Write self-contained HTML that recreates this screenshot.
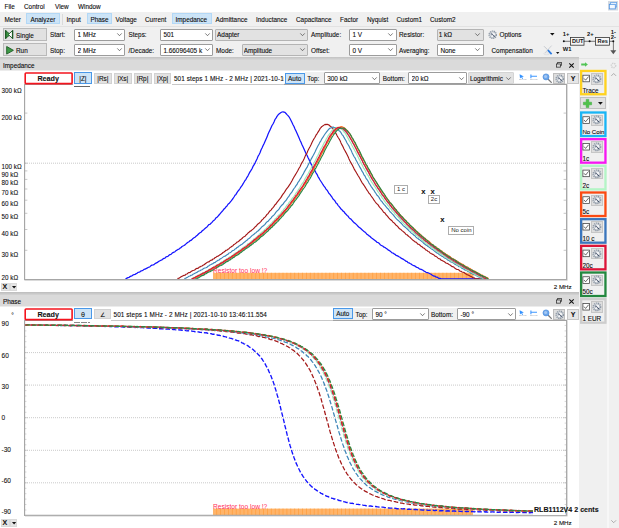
<!DOCTYPE html>
<html><head><meta charset="utf-8"><title>Impedance Analyzer</title>
<style>
html,body{margin:0;padding:0}
body{width:619px;height:528px;overflow:hidden;background:#fff;position:relative;
 font-family:"Liberation Sans",sans-serif;font-size:6.4px;color:#0c0c0c;-webkit-text-stroke-width:0.1px}
span{position:absolute;white-space:nowrap;line-height:10px;height:10px}
.b{position:absolute;box-sizing:border-box}
.combo{position:absolute;box-sizing:border-box;border:1px solid #8a8a8a;border-radius:1px;white-space:nowrap;overflow:hidden}
.combo i{font-style:normal;position:absolute;left:2.5px;top:0.3px;right:8.6px;overflow:hidden}
.combo .chev{position:absolute;right:2.2px;top:50%;margin-top:-1.4px}
.btn{position:absolute;box-sizing:border-box;background:#e1e1e1;border:1px solid #adadad}
.sel{position:absolute;box-sizing:border-box;background:#cce4f7;border:1px solid #b3d8f6}
svg{position:absolute;overflow:visible}
.lb{position:absolute;box-sizing:border-box;border:1px solid #adadad;-webkit-text-stroke-width:0;color:#222;background:#fff;font-size:6px;text-align:center;white-space:nowrap}
</style></head><body>

<span style="left:4.5px;top:1.60px;">File</span>
<span style="left:24px;top:1.60px;">Control</span>
<span style="left:55px;top:1.60px;">View</span>
<span style="left:78px;top:1.60px;">Window</span>
<svg style="left:607.5px;top:1px" width="10" height="9.5" viewBox="0 0 10 9.5"><rect x="0" y="0" width="10" height="9.5" fill="#d4dae2"/><rect x="2.6" y="1.4" width="6" height="4.6" fill="#f4f9ff" stroke="#6aa6e8" stroke-width="0.8"/><rect x="1.3" y="3.3" width="6" height="4.6" fill="#f4f9ff" stroke="#4a90e2" stroke-width="0.8"/></svg>
<div class="b" style="left:0px;top:12.2px;width:619.00px;height:45.20px;background:#f0f0f0"></div>
<div class="b" style="left:0px;top:25.6px;width:619.00px;height:0.60px;background:#e2e2e2"></div>
<div class="sel" style="left:25.8px;top:13.1px;width:34px;height:10.9px"></div>
<div class="sel" style="left:87.2px;top:13.1px;width:24.4px;height:10.9px"></div>
<div class="sel" style="left:172.2px;top:13.1px;width:39.4px;height:10.9px"></div>
<div class="b" style="left:62.3px;top:13.5px;width:0.70px;height:11.00px;background:#dadada"></div>
<span style="left:4.5px;top:14.60px;">Meter</span>
<span style="left:30.5px;top:14.60px;">Analyzer</span>
<span style="left:66.5px;top:14.60px;">Input</span>
<span style="left:90.5px;top:14.60px;">Phase</span>
<span style="left:115.5px;top:14.60px;">Voltage</span>
<span style="left:145px;top:14.60px;">Current</span>
<span style="left:175.5px;top:14.60px;">Impedance</span>
<span style="left:215.5px;top:14.60px;">Admittance</span>
<span style="left:256px;top:14.60px;">Inductance</span>
<span style="left:296px;top:14.60px;">Capacitance</span>
<span style="left:340px;top:14.60px;">Factor</span>
<span style="left:367px;top:14.60px;">Nyquist</span>
<span style="left:396.5px;top:14.60px;">Custom1</span>
<span style="left:430px;top:14.60px;">Custom2</span>
<div class="btn" style="left:2.5px;top:27.9px;width:44.6px;height:13.3px;border-color:#b9b9b9"></div>
<div class="btn" style="left:2.5px;top:43.2px;width:44.6px;height:13.3px;border-color:#b9b9b9"></div>
<svg style="left:5.4px;top:30.2px" width="8.3" height="9" viewBox="0 0 8 8.6"><path d="M0.6 0.6 L5.2 4.3 L0.6 8 Z" fill="#3d9a46" stroke="#1d5a25" stroke-width="0.9"/><path d="M7.2 0.6 L3.2 4.3 L7.2 8 Z" fill="#fff" stroke="#1d5a25" stroke-width="0.9"/><rect x="0" y="0.2" width="1.3" height="8.2" fill="#1d5a25"/><rect x="6.7" y="0.2" width="1.3" height="8.2" fill="#1d5a25"/></svg>
<svg style="left:5.5px;top:45.5px" width="8" height="8.6" viewBox="0 0 8 8.6"><path d="M0.7 0.5 L7.4 4.3 L0.7 8.1 Z" fill="#3d9a46" stroke="#1d5a25" stroke-width="0.9"/></svg>
<span style="left:16px;top:30.90px;">Single</span>
<span style="left:16px;top:45.70px;">Run</span>
<span style="left:50px;top:30.10px;">Start:</span>
<span style="left:50px;top:45.70px;">Stop:</span>
<div class="combo" style="left:74.2px;top:28.5px;width:51.10px;height:12.10px;background:#fff;border-color:#9c9c9c;line-height:10.10px"><i style="left:2.4px;top:0.5px">1 MHz</i><svg class="chev" width="5" height="3.2" viewBox="0 0 5 3.2"><path d="M0.3 0.4 L2.5 2.7 L4.7 0.4" fill="none" stroke="#444" stroke-width="0.7"/></svg></div>
<div class="combo" style="left:74.2px;top:43.6px;width:51.10px;height:12.20px;background:#fff;border-color:#9c9c9c;line-height:10.20px"><i style="left:2.4px;top:1px">2 MHz</i><svg class="chev" width="5" height="3.2" viewBox="0 0 5 3.2"><path d="M0.3 0.4 L2.5 2.7 L4.7 0.4" fill="none" stroke="#444" stroke-width="0.7"/></svg></div>
<span style="left:128.5px;top:30.10px;">Steps:</span>
<span style="left:128.5px;top:45.70px;">/Decade:</span>
<div class="combo" style="left:160px;top:28.5px;width:53.30px;height:12.10px;background:#fff;border-color:#9c9c9c;line-height:10.10px"><i style="left:2.4px;top:0.5px">501</i><svg class="chev" width="5" height="3.2" viewBox="0 0 5 3.2"><path d="M0.3 0.4 L2.5 2.7 L4.7 0.4" fill="none" stroke="#444" stroke-width="0.7"/></svg></div>
<div class="combo" style="left:160px;top:43.6px;width:53.30px;height:12.20px;background:#fff;border-color:#9c9c9c;line-height:10.20px"><i style="left:2.4px;top:1px">1.66096405 k</i><svg class="chev" width="5" height="3.2" viewBox="0 0 5 3.2"><path d="M0.3 0.4 L2.5 2.7 L4.7 0.4" fill="none" stroke="#444" stroke-width="0.7"/></svg></div>
<div class="combo" style="left:215.4px;top:28.5px;width:92.80px;height:12.10px;background:#e2e2e2;border-color:#b4b4b4;line-height:10.10px"><i style="left:0.7px;top:0.5px">Adapter</i><svg class="chev" width="5" height="3.2" viewBox="0 0 5 3.2"><path d="M0.3 0.4 L2.5 2.7 L4.7 0.4" fill="none" stroke="#444" stroke-width="0.7"/></svg></div>
<span style="left:216px;top:45.70px;">Mode:</span>
<div class="combo" style="left:242px;top:43.6px;width:66.20px;height:12.20px;background:#e2e2e2;border-color:#b4b4b4;line-height:10.20px"><i style="left:0.7px;top:1px">Amplitude</i><svg class="chev" width="5" height="3.2" viewBox="0 0 5 3.2"><path d="M0.3 0.4 L2.5 2.7 L4.7 0.4" fill="none" stroke="#444" stroke-width="0.7"/></svg></div>
<span style="left:311px;top:30.10px;">Amplitude:</span>
<span style="left:311px;top:45.70px;">Offset:</span>
<div class="combo" style="left:349px;top:28.5px;width:47.60px;height:12.10px;background:#fff;border-color:#9c9c9c;line-height:10.10px"><i style="left:2.4px;top:0.5px">1 V</i><svg class="chev" width="5" height="3.2" viewBox="0 0 5 3.2"><path d="M0.3 0.4 L2.5 2.7 L4.7 0.4" fill="none" stroke="#444" stroke-width="0.7"/></svg></div>
<div class="combo" style="left:349px;top:43.6px;width:47.60px;height:12.20px;background:#fff;border-color:#9c9c9c;line-height:10.20px"><i style="left:2.4px;top:1px">0 V</i><svg class="chev" width="5" height="3.2" viewBox="0 0 5 3.2"><path d="M0.3 0.4 L2.5 2.7 L4.7 0.4" fill="none" stroke="#444" stroke-width="0.7"/></svg></div>
<span style="left:399px;top:30.10px;">Resistor:</span>
<span style="left:399px;top:45.70px;">Averaging:</span>
<div class="combo" style="left:437px;top:28.5px;width:46.60px;height:12.10px;background:#e2e2e2;border-color:#b4b4b4;line-height:10.10px"><i style="left:0.7px;top:0.5px">1 k&#937;</i><svg class="chev" width="5" height="3.2" viewBox="0 0 5 3.2"><path d="M0.3 0.4 L2.5 2.7 L4.7 0.4" fill="none" stroke="#444" stroke-width="0.7"/></svg></div>
<div class="combo" style="left:437px;top:43.6px;width:46.60px;height:12.20px;background:#fff;border-color:#9c9c9c;line-height:10.20px"><i style="left:2.4px;top:1px">None</i><svg class="chev" width="5" height="3.2" viewBox="0 0 5 3.2"><path d="M0.3 0.4 L2.5 2.7 L4.7 0.4" fill="none" stroke="#444" stroke-width="0.7"/></svg></div>
<svg width="9.5" height="9.5" viewBox="0 0 10 10" style="position:absolute;left:488px;top:30px"><circle cx="5" cy="5" r="3.9" fill="#f1f3f5" stroke="#8a95a2" stroke-width="1.2" stroke-dasharray="1.4 0.7"/><circle cx="5" cy="5" r="3.1" fill="#f5f6f8" stroke="#98a2ad" stroke-width="0.8"/><path d="M3.9 3.6 L6.2 6.4 M3.9 5.6 A1.6 1.6 0 0 1 3.8 3.7" stroke="#44526a" stroke-width="0.9" fill="none"/><circle cx="6.5" cy="6.6" r="0.8" fill="#44526a"/></svg>
<span style="left:499.5px;top:30.10px;">Options</span>
<svg style="left:549.5px;top:33.4px" width="4.6" height="2.6" viewBox="0 0 4.6 2.6"><path d="M0 0 L4.6 0 L2.3 2.6Z" fill="#111"/></svg>
<span style="left:491.5px;top:45.70px;">Compensation</span>
<svg style="left:542.5px;top:44.5px" width="10" height="10" viewBox="0 0 10 10"><path d="M1 1.2 L5.4 5.6" stroke="#c4c8ce" stroke-width="1"/><path d="M8.6 0.6 L2 8" stroke="#cdd0d5" stroke-width="1"/><ellipse cx="3.6" cy="8.8" rx="3" ry="1" fill="none" stroke="#d8dade" stroke-width="0.7"/><path d="M4.9 5.2 L8.6 9.2" stroke="#2c7be0" stroke-width="1.7"/></svg>
<svg style="left:555.8px;top:52px" width="3.4" height="2" viewBox="0 0 3.4 2"><path d="M0 0 L3.4 0 L1.7 2Z" fill="#111"/></svg>
<svg style="left:560px;top:28px" width="59" height="28" viewBox="0 0 59 28" font-family="Liberation Sans, sans-serif" font-weight="bold" font-size="5.8" fill="#111"><text x="2.8" y="8.3">1+</text><text x="27" y="8.3">2+</text><text x="50.8" y="5.9">1-</text><text x="50.8" y="11">2-</text><text x="2.8" y="23">W1</text><path d="M3.5 13.3 H10.5 M24 13.3 H35.5 M49 13.3 H53.4 V23" stroke="#555" stroke-width="0.8" fill="none"/><circle cx="3.8" cy="13.3" r="1"/><circle cx="29.6" cy="13.3" r="1"/><circle cx="53.3" cy="13.3" r="1"/><rect x="10.4" y="9.4" width="13.6" height="7.8" fill="#f6f6f6" stroke="#333" stroke-width="0.8"/><rect x="35.4" y="9.4" width="14" height="7.8" fill="#f6f6f6" stroke="#333" stroke-width="0.8"/><text x="12" y="15.4" font-size="5.6">DUT</text><text x="37.6" y="15.4" font-size="5.6">Res</text><path d="M50.3 22.3 L56.3 22.3 L53.3 26.2Z" fill="#555"/></svg>
<div class="b" style="left:0px;top:57.3px;width:619.00px;height:2.70px;background:linear-gradient(#c2c2c2,#d8d8d8)"></div>
<div class="b" style="left:0px;top:59.5px;width:578.60px;height:10.70px;background:#dadada"></div>
<div class="b" style="left:578.6px;top:57px;width:40.40px;height:14.00px;background:#f0f0f0"></div>
<div class="b" style="left:579px;top:70px;width:40.00px;height:458.00px;background:#f0f0f0"></div>
<div class="b" style="left:578.6px;top:57.6px;width:40.40px;height:1.60px;background:#e4e4e4"></div>
<div class="b" style="left:0px;top:70.2px;width:578.60px;height:0.80px;background:#ececec"></div>
<span style="left:3px;top:60.90px;">Impedance</span>
<div class="b" style="left:0px;top:291.7px;width:578.60px;height:3.30px;background:linear-gradient(#bcbcbc,#d4d4d4)"></div>
<div class="b" style="left:0px;top:294.9px;width:578.60px;height:11.40px;background:#dadada"></div>
<div class="b" style="left:0px;top:306.2px;width:578.60px;height:0.80px;background:#ececec"></div>
<span style="left:3px;top:296.90px;">Phase</span>
<svg style="left:555.8px;top:62.1px" width="6.2" height="5.7" viewBox="0 0 7 6.4"><rect x="1.9" y="0.4" width="4.4" height="3.6" fill="none" stroke="#222" stroke-width="0.8"/><rect x="0.5" y="2.2" width="4.4" height="3.6" fill="#d9d9d9" stroke="#222" stroke-width="0.8"/></svg>
<svg style="left:568.8px;top:63.2px" width="5" height="5" viewBox="0 0 5.2 5.2"><path d="M0.3 0.3 L4.9 4.9 M4.9 0.3 L0.3 4.9" stroke="#111" stroke-width="1.1"/></svg>
<svg style="left:555.8px;top:298.1px" width="6.2" height="5.7" viewBox="0 0 7 6.4"><rect x="1.9" y="0.4" width="4.4" height="3.6" fill="none" stroke="#222" stroke-width="0.8"/><rect x="0.5" y="2.2" width="4.4" height="3.6" fill="#d9d9d9" stroke="#222" stroke-width="0.8"/></svg>
<svg style="left:568.8px;top:299.20000000000005px" width="5" height="5" viewBox="0 0 5.2 5.2"><path d="M0.3 0.3 L4.9 4.9 M4.9 0.3 L0.3 4.9" stroke="#111" stroke-width="1.1"/></svg>
<svg style="left:0;top:0" width="619" height="528" viewBox="0 0 619 528"><clipPath id="c1"><rect x="25.0" y="83.8" width="541.0" height="195.8"/></clipPath><clipPath id="c2"><rect x="25.0" y="320.0" width="541.0" height="195.99999999999997"/></clipPath><path d="M25.0 163.2 H566.0" stroke="#bdbdbd" stroke-width="0.8" stroke-dasharray="1 1"/><path d="M25.0 113.1 h2.4 M566.0 113.1 h-2.4M25.0 163.2 h2.4 M566.0 163.2 h-2.4M25.0 170.9 h2.4 M566.0 170.9 h-2.4M25.0 179.4 h2.4 M566.0 179.4 h-2.4M25.0 189.0 h2.4 M566.0 189.0 h-2.4M25.0 200.2 h2.4 M566.0 200.2 h-2.4M25.0 213.3 h2.4 M566.0 213.3 h-2.4M25.0 229.5 h2.4 M566.0 229.5 h-2.4M25.0 250.3 h2.4 M566.0 250.3 h-2.4" stroke="#b0b0b0" stroke-width="0.7"/><rect x="213" y="272.8" width="260.6" height="6.599999999999966" fill="#ffb469"/><rect x="216.3" y="272.8" width="0.8" height="6.599999999999966" fill="#ffa042"/><rect x="220.2" y="272.8" width="0.8" height="6.599999999999966" fill="#ffa042"/><rect x="224.1" y="272.8" width="0.8" height="6.599999999999966" fill="#ffa042"/><rect x="228.0" y="272.8" width="0.8" height="6.599999999999966" fill="#ffa042"/><rect x="231.9" y="272.8" width="0.8" height="6.599999999999966" fill="#ffa042"/><rect x="235.8" y="272.8" width="0.8" height="6.599999999999966" fill="#ffa042"/><rect x="239.7" y="272.8" width="0.8" height="6.599999999999966" fill="#ffa042"/><rect x="243.6" y="272.8" width="0.8" height="6.599999999999966" fill="#ffa042"/><rect x="247.5" y="272.8" width="0.8" height="6.599999999999966" fill="#ffa042"/><rect x="251.4" y="272.8" width="0.8" height="6.599999999999966" fill="#ffa042"/><rect x="255.3" y="272.8" width="0.8" height="6.599999999999966" fill="#ffa042"/><rect x="259.2" y="272.8" width="0.8" height="6.599999999999966" fill="#ffa042"/><rect x="263.1" y="272.8" width="0.8" height="6.599999999999966" fill="#ffa042"/><rect x="267.0" y="272.8" width="0.8" height="6.599999999999966" fill="#ffa042"/><rect x="270.9" y="272.8" width="0.8" height="6.599999999999966" fill="#ffa042"/><rect x="274.8" y="272.8" width="0.8" height="6.599999999999966" fill="#ffa042"/><rect x="278.7" y="272.8" width="0.8" height="6.599999999999966" fill="#ffa042"/><rect x="282.6" y="272.8" width="0.8" height="6.599999999999966" fill="#ffa042"/><rect x="286.5" y="272.8" width="0.8" height="6.599999999999966" fill="#ffa042"/><rect x="290.4" y="272.8" width="0.8" height="6.599999999999966" fill="#ffa042"/><rect x="294.3" y="272.8" width="0.8" height="6.599999999999966" fill="#ffa042"/><rect x="298.2" y="272.8" width="0.8" height="6.599999999999966" fill="#ffa042"/><rect x="302.1" y="272.8" width="0.8" height="6.599999999999966" fill="#ffa042"/><rect x="306.0" y="272.8" width="0.8" height="6.599999999999966" fill="#ffa042"/><rect x="309.9" y="272.8" width="0.8" height="6.599999999999966" fill="#ffa042"/><rect x="313.8" y="272.8" width="0.8" height="6.599999999999966" fill="#ffa042"/><rect x="317.7" y="272.8" width="0.8" height="6.599999999999966" fill="#ffa042"/><rect x="321.6" y="272.8" width="0.8" height="6.599999999999966" fill="#ffa042"/><rect x="325.5" y="272.8" width="0.8" height="6.599999999999966" fill="#ffa042"/><rect x="329.4" y="272.8" width="0.8" height="6.599999999999966" fill="#ffa042"/><rect x="333.3" y="272.8" width="0.8" height="6.599999999999966" fill="#ffa042"/><rect x="337.2" y="272.8" width="0.8" height="6.599999999999966" fill="#ffa042"/><rect x="341.1" y="272.8" width="0.8" height="6.599999999999966" fill="#ffa042"/><rect x="345.0" y="272.8" width="0.8" height="6.599999999999966" fill="#ffa042"/><rect x="348.9" y="272.8" width="0.8" height="6.599999999999966" fill="#ffa042"/><rect x="352.8" y="272.8" width="0.8" height="6.599999999999966" fill="#ffa042"/><rect x="356.7" y="272.8" width="0.8" height="6.599999999999966" fill="#ffa042"/><rect x="360.6" y="272.8" width="0.8" height="6.599999999999966" fill="#ffa042"/><rect x="364.5" y="272.8" width="0.8" height="6.599999999999966" fill="#ffa042"/><rect x="368.4" y="272.8" width="0.8" height="6.599999999999966" fill="#ffa042"/><rect x="372.3" y="272.8" width="0.8" height="6.599999999999966" fill="#ffa042"/><rect x="376.2" y="272.8" width="0.8" height="6.599999999999966" fill="#ffa042"/><rect x="380.1" y="272.8" width="0.8" height="6.599999999999966" fill="#ffa042"/><rect x="384.0" y="272.8" width="0.8" height="6.599999999999966" fill="#ffa042"/><rect x="387.9" y="272.8" width="0.8" height="6.599999999999966" fill="#ffa042"/><rect x="391.8" y="272.8" width="0.8" height="6.599999999999966" fill="#ffa042"/><rect x="395.7" y="272.8" width="0.8" height="6.599999999999966" fill="#ffa042"/><rect x="399.6" y="272.8" width="0.8" height="6.599999999999966" fill="#ffa042"/><rect x="403.5" y="272.8" width="0.8" height="6.599999999999966" fill="#ffa042"/><rect x="407.4" y="272.8" width="0.8" height="6.599999999999966" fill="#ffa042"/><rect x="411.3" y="272.8" width="0.8" height="6.599999999999966" fill="#ffa042"/><rect x="415.2" y="272.8" width="0.8" height="6.599999999999966" fill="#ffa042"/><rect x="419.1" y="272.8" width="0.8" height="6.599999999999966" fill="#ffa042"/><rect x="423.0" y="272.8" width="0.8" height="6.599999999999966" fill="#ffa042"/><rect x="426.9" y="272.8" width="0.8" height="6.599999999999966" fill="#ffa042"/><rect x="430.8" y="272.8" width="0.8" height="6.599999999999966" fill="#ffa042"/><rect x="434.7" y="272.8" width="0.8" height="6.599999999999966" fill="#ffa042"/><rect x="438.6" y="272.8" width="0.8" height="6.599999999999966" fill="#ffa042"/><rect x="442.5" y="272.8" width="0.8" height="6.599999999999966" fill="#ffa042"/><rect x="446.4" y="272.8" width="0.8" height="6.599999999999966" fill="#ffa042"/><rect x="450.3" y="272.8" width="0.8" height="6.599999999999966" fill="#ffa042"/><rect x="454.2" y="272.8" width="0.8" height="6.599999999999966" fill="#ffa042"/><rect x="458.1" y="272.8" width="0.8" height="6.599999999999966" fill="#ffa042"/><rect x="462.0" y="272.8" width="0.8" height="6.599999999999966" fill="#ffa042"/><rect x="465.9" y="272.8" width="0.8" height="6.599999999999966" fill="#ffa042"/><rect x="469.8" y="272.8" width="0.8" height="6.599999999999966" fill="#ffa042"/><g clip-path="url(#c1)" fill="none" stroke-width="1.15" stroke-linejoin="round"><path d="M25.0 281.9L26.0 281.9L27.0 281.9L28.0 281.9L29.0 281.9L30.0 281.9L31.0 281.9L32.0 281.9L33.0 281.9L34.0 281.9L35.0 281.9L36.0 281.9L37.0 281.9L38.0 281.9L39.0 281.9L40.0 281.9L41.0 281.9L42.0 281.9L43.0 281.9L44.0 281.9L45.0 281.9L46.0 281.9L47.0 281.9L48.0 281.9L49.0 281.9L50.0 281.9L51.0 281.9L52.0 281.9L53.0 281.9L54.0 281.9L55.0 281.9L56.0 281.9L57.0 281.9L58.0 281.9L59.0 281.9L60.0 281.9L61.0 281.9L62.0 281.9L63.0 281.9L64.0 281.9L65.0 281.9L66.0 281.9L67.0 281.9L68.0 281.9L69.0 281.9L70.0 281.9L71.0 281.9L72.0 281.9L73.0 281.9L74.0 281.9L75.0 281.9L76.0 281.9L77.0 281.9L78.0 281.9L79.0 281.9L80.0 281.9L81.0 281.9L82.0 281.9L83.0 281.9L84.0 281.9L85.0 281.9L86.0 281.9L87.0 281.9L88.0 281.9L89.0 281.9L90.0 281.9L91.0 281.9L92.0 281.9L93.0 281.9L94.0 281.9L95.0 281.9L96.0 281.9L97.0 281.9L98.0 281.9L99.0 281.9L100.0 281.9L101.0 281.9L102.0 281.9L103.0 281.9L104.0 281.9L105.0 281.9L106.0 281.9L107.0 281.9L108.0 281.9L109.0 281.9L110.0 281.9L111.0 281.9L112.0 281.9L113.0 281.9L114.0 281.9L115.0 281.9L116.0 281.9L117.0 281.9L118.0 281.9L119.0 281.9L120.0 281.9L121.0 281.9L122.0 281.9L123.0 281.9L124.0 281.9L125.0 281.9L126.0 278.6L127.0 278.1L128.0 277.6L129.0 277.4L130.0 276.6L131.0 276.1L132.0 275.8L133.0 275.0L134.0 274.6L135.0 274.5L136.0 273.7L137.0 273.3L138.0 272.4L139.0 272.2L140.0 271.8L141.0 270.9L142.0 270.8L143.0 270.3L144.0 269.4L145.0 269.2L146.0 268.6L147.0 268.2L148.0 267.5L149.0 267.2L150.0 266.7L151.0 265.6L152.0 265.1L153.0 265.0L154.0 264.6L155.0 263.6L156.0 263.1L157.0 262.7L158.0 261.9L159.0 261.3L160.0 260.7L161.0 260.2L162.0 259.8L163.0 258.9L164.0 258.4L165.0 258.1L166.0 256.9L167.0 256.7L168.0 256.2L169.0 255.3L170.0 254.6L171.0 254.4L172.0 253.3L173.0 252.6L174.0 252.2L175.0 251.7L176.0 250.6L177.0 250.1L178.0 249.4L179.0 249.1L180.0 248.1L181.0 247.7L182.0 246.5L183.0 246.0L184.0 245.5L185.0 244.9L186.0 243.9L187.0 243.0L188.0 242.2L189.0 241.7L190.0 240.7L191.0 240.4L192.0 239.6L193.0 238.4L194.0 237.7L195.0 237.2L196.0 236.3L197.0 235.6L198.0 234.5L199.0 233.5L200.0 232.8L201.0 232.3L202.0 231.0L203.0 230.2L204.0 229.4L205.0 228.5L206.0 227.6L207.0 227.0L208.0 225.6L209.0 224.5L210.0 224.3L211.0 223.3L212.0 222.4L213.0 221.0L214.0 220.4L215.0 219.3L216.0 217.8L217.0 217.2L218.0 216.2L219.0 215.0L220.0 213.8L221.0 212.6L222.0 211.5L223.0 210.3L224.0 209.0L225.0 208.2L226.0 206.8L227.0 206.0L228.0 204.3L229.0 203.6L230.0 202.3L231.0 201.1L232.0 199.8L233.0 198.5L234.0 197.0L235.0 195.2L236.0 194.4L237.0 192.6L238.0 191.2L239.0 190.0L240.0 188.5L241.0 186.9L242.0 185.7L243.0 183.9L244.0 182.2L245.0 180.5L246.0 179.3L247.0 177.3L248.0 175.8L249.0 173.8L250.0 171.9L251.0 170.4L252.0 168.7L253.0 166.4L254.0 164.9L255.0 163.1L256.0 161.0L257.0 159.0L258.0 156.4L259.0 154.7L260.0 152.8L261.0 150.0L262.0 148.0L263.0 145.8L264.0 143.7L265.0 141.4L266.0 139.2L267.0 137.1L268.0 134.3L269.0 132.1L270.0 129.9L271.0 127.7L272.0 125.5L273.0 124.0L274.0 121.9L275.0 119.5L276.0 118.1L277.0 116.4L278.0 115.0L279.0 113.9L280.0 113.2L281.0 112.5L282.0 112.0L283.0 111.8L284.0 112.1L285.0 112.4L286.0 113.5L287.0 114.6L288.0 115.6L289.0 116.8L290.0 118.5L291.0 120.5L292.0 122.6L293.0 124.7L294.0 126.5L295.0 129.0L296.0 131.1L297.0 133.2L298.0 135.5L299.0 137.8L300.0 140.2L301.0 142.3L302.0 144.8L303.0 146.8L304.0 148.9L305.0 151.2L306.0 153.5L307.0 155.2L308.0 157.5L309.0 159.5L310.0 161.8L311.0 163.9L312.0 165.4L313.0 167.7L314.0 169.4L315.0 170.9L316.0 172.8L317.0 174.3L318.0 176.6L319.0 178.1L320.0 180.0L321.0 181.5L322.0 183.0L323.0 184.7L324.0 186.1L325.0 187.3L326.0 189.1L327.0 190.2L328.0 191.7L329.0 193.5L330.0 194.4L331.0 195.8L332.0 197.2L333.0 199.0L334.0 199.9L335.0 201.0L336.0 202.9L337.0 203.6L338.0 205.3L339.0 206.4L340.0 207.7L341.0 209.0L342.0 209.8L343.0 211.1L344.0 211.7L345.0 213.3L346.0 214.2L347.0 215.4L348.0 216.1L349.0 217.6L350.0 218.7L351.0 219.1L352.0 220.3L353.0 221.5L354.0 222.6L355.0 223.2L356.0 224.1L357.0 225.1L358.0 226.3L359.0 227.3L360.0 227.9L361.0 228.8L362.0 229.7L363.0 230.6L364.0 231.5L365.0 232.1L366.0 233.2L367.0 234.4L368.0 234.8L369.0 235.9L370.0 236.3L371.0 237.5L372.0 238.3L373.0 239.0L374.0 239.7L375.0 240.5L376.0 241.3L377.0 242.3L378.0 242.5L379.0 243.2L380.0 244.4L381.0 245.2L382.0 245.7L383.0 246.3L384.0 247.2L385.0 247.5L386.0 248.3L387.0 248.9L388.0 249.9L389.0 250.4L390.0 251.0L391.0 251.9L392.0 252.8L393.0 253.0L394.0 253.9L395.0 254.3L396.0 255.3L397.0 255.7L398.0 256.1L399.0 256.7L400.0 257.2L401.0 258.1L402.0 258.6L403.0 259.1L404.0 259.8L405.0 260.4L406.0 261.3L407.0 261.4L408.0 262.6L409.0 262.8L410.0 263.5L411.0 263.9L412.0 264.7L413.0 265.3L414.0 265.7L415.0 266.1L416.0 266.9L417.0 267.5L418.0 267.7L419.0 268.5L420.0 269.2L421.0 269.3L422.0 269.7L423.0 270.2L424.0 271.1L425.0 271.5L426.0 272.2L427.0 272.7L428.0 272.7L429.0 273.2L430.0 273.7L431.0 274.2L432.0 275.0L433.0 275.6L434.0 276.1L435.0 276.2L436.0 277.1L437.0 277.1L438.0 277.7L439.0 278.4L440.0 278.4L441.0 278.8L442.0 278.9L443.0 278.9L444.0 278.9L445.0 278.9L446.0 278.9L447.0 278.9L448.0 278.9L449.0 278.9L450.0 278.9L451.0 278.9L452.0 278.9L453.0 278.9L454.0 278.9L455.0 278.9L456.0 278.9L457.0 278.9L458.0 278.9L459.0 278.9L460.0 278.9L461.0 278.9L462.0 278.9L463.0 278.9L464.0 278.9L465.0 278.9L466.0 278.9L467.0 278.9L468.0 278.9L469.0 278.9L470.0 278.9L471.0 278.9L472.0 278.9L473.0 278.9L474.0 278.9L475.0 278.9L476.0 278.9L477.0 278.9L478.0 278.9L479.0 278.9L480.0 281.9L481.0 281.9L482.0 281.9L483.0 281.9L484.0 281.9L485.0 281.9L486.0 281.9L487.0 281.9L488.0 281.9L489.0 281.9L490.0 281.9L491.0 281.9L492.0 281.9L493.0 281.9L494.0 281.9L495.0 281.9L496.0 281.9L497.0 281.9L498.0 281.9L499.0 281.9L500.0 281.9L501.0 281.9L502.0 281.9L503.0 281.9L504.0 281.9L505.0 281.9L506.0 281.9L507.0 281.9L508.0 281.9L509.0 281.9L510.0 281.9L511.0 281.9L512.0 281.9L513.0 281.9L514.0 281.9L515.0 281.9L516.0 281.9L517.0 281.9L518.0 281.9L519.0 281.9L520.0 281.9L521.0 281.9L522.0 281.9L523.0 281.9L524.0 281.9L525.0 281.9L526.0 281.9L527.0 281.9L528.0 281.9L529.0 281.9L530.0 281.9L531.0 281.9L532.0 281.9L533.0 281.9L534.0 281.9L535.0 281.9L536.0 281.9L537.0 281.9L538.0 281.9L539.0 281.9L540.0 281.9L541.0 281.9L542.0 281.9L543.0 281.9L544.0 281.9L545.0 281.9L546.0 281.9L547.0 281.9L548.0 281.9L549.0 281.9L550.0 281.9L551.0 281.9L552.0 281.9L553.0 281.9L554.0 281.9L555.0 281.9L556.0 281.9L557.0 281.9L558.0 281.9L559.0 281.9L560.0 281.9L561.0 281.9L562.0 281.9L563.0 281.9L564.0 281.9L565.0 281.9L566.0 281.9" stroke="#1414ff" stroke-width="1.25"/><path d="M25.0 281.9L26.0 281.9L27.0 281.9L28.0 281.9L29.0 281.9L30.0 281.9L31.0 281.9L32.0 281.9L33.0 281.9L34.0 281.9L35.0 281.9L36.0 281.9L37.0 281.9L38.0 281.9L39.0 281.9L40.0 281.9L41.0 281.9L42.0 281.9L43.0 281.9L44.0 281.9L45.0 281.9L46.0 281.9L47.0 281.9L48.0 281.9L49.0 281.9L50.0 281.9L51.0 281.9L52.0 281.9L53.0 281.9L54.0 281.9L55.0 281.9L56.0 281.9L57.0 281.9L58.0 281.9L59.0 281.9L60.0 281.9L61.0 281.9L62.0 281.9L63.0 281.9L64.0 281.9L65.0 281.9L66.0 281.9L67.0 281.9L68.0 281.9L69.0 281.9L70.0 281.9L71.0 281.9L72.0 281.9L73.0 281.9L74.0 281.9L75.0 281.9L76.0 281.9L77.0 281.9L78.0 281.9L79.0 281.9L80.0 281.9L81.0 281.9L82.0 281.9L83.0 281.9L84.0 281.9L85.0 281.9L86.0 281.9L87.0 281.9L88.0 281.9L89.0 281.9L90.0 281.9L91.0 281.9L92.0 281.9L93.0 281.9L94.0 281.9L95.0 281.9L96.0 281.9L97.0 281.9L98.0 281.9L99.0 281.9L100.0 281.9L101.0 281.9L102.0 281.9L103.0 281.9L104.0 281.9L105.0 281.9L106.0 281.9L107.0 281.9L108.0 281.9L109.0 281.9L110.0 281.9L111.0 281.9L112.0 281.9L113.0 281.9L114.0 281.9L115.0 281.9L116.0 281.9L117.0 281.9L118.0 281.9L119.0 281.9L120.0 281.9L121.0 281.9L122.0 281.9L123.0 281.9L124.0 281.9L125.0 281.9L126.0 281.9L127.0 281.9L128.0 281.9L129.0 281.9L130.0 281.9L131.0 281.9L132.0 281.9L133.0 281.9L134.0 281.9L135.0 281.9L136.0 281.9L137.0 281.9L138.0 281.9L139.0 281.9L140.0 281.9L141.0 281.9L142.0 281.9L143.0 281.9L144.0 281.9L145.0 281.9L146.0 281.9L147.0 281.9L148.0 281.9L149.0 281.9L150.0 281.9L151.0 281.9L152.0 281.9L153.0 281.9L154.0 281.9L155.0 281.9L156.0 281.9L157.0 281.9L158.0 281.9L159.0 281.9L160.0 281.9L161.0 281.9L162.0 281.9L163.0 281.9L164.0 281.9L165.0 281.9L166.0 281.9L167.0 281.9L168.0 281.9L169.0 281.9L170.0 281.9L171.0 281.9L172.0 281.9L173.0 281.9L174.0 281.9L175.0 281.9L176.0 281.9L177.0 281.9L178.0 278.4L179.0 278.2L180.0 277.6L181.0 276.8L182.0 276.4L183.0 275.7L184.0 275.4L185.0 275.3L186.0 274.2L187.0 274.0L188.0 273.1L189.0 272.6L190.0 272.5L191.0 271.6L192.0 271.0L193.0 270.5L194.0 270.3L195.0 269.7L196.0 268.8L197.0 268.4L198.0 268.4L199.0 267.3L200.0 266.9L201.0 266.3L202.0 266.0L203.0 265.3L204.0 264.8L205.0 264.0L206.0 263.2L207.0 262.6L208.0 261.9L209.0 261.9L210.0 260.8L211.0 260.1L212.0 260.1L213.0 259.0L214.0 258.8L215.0 257.6L216.0 257.2L217.0 256.4L218.0 256.2L219.0 255.4L220.0 254.8L221.0 254.2L222.0 253.6L223.0 252.5L224.0 252.0L225.0 251.2L226.0 250.3L227.0 250.1L228.0 249.2L229.0 248.7L230.0 247.5L231.0 247.0L232.0 246.2L233.0 245.7L234.0 244.4L235.0 243.9L236.0 243.2L237.0 242.1L238.0 241.7L239.0 241.0L240.0 240.0L241.0 239.3L242.0 238.5L243.0 237.4L244.0 236.7L245.0 236.3L246.0 235.0L247.0 234.2L248.0 233.0L249.0 232.2L250.0 231.3L251.0 230.9L252.0 229.9L253.0 229.1L254.0 228.2L255.0 227.0L256.0 226.3L257.0 225.0L258.0 223.9L259.0 223.3L260.0 222.3L261.0 221.3L262.0 219.9L263.0 219.1L264.0 217.8L265.0 217.1L266.0 215.9L267.0 214.4L268.0 213.7L269.0 212.1L270.0 210.8L271.0 210.1L272.0 208.6L273.0 207.6L274.0 206.4L275.0 204.8L276.0 204.0L277.0 202.4L278.0 201.2L279.0 199.8L280.0 198.7L281.0 197.4L282.0 195.6L283.0 194.1L284.0 192.8L285.0 191.4L286.0 189.7L287.0 188.3L288.0 187.2L289.0 185.6L290.0 184.2L291.0 182.5L292.0 180.8L293.0 178.8L294.0 177.0L295.0 175.4L296.0 173.7L297.0 172.0L298.0 170.2L299.0 168.2L300.0 166.7L301.0 164.4L302.0 162.6L303.0 161.0L304.0 159.0L305.0 156.6L306.0 154.6L307.0 153.0L308.0 150.4L309.0 148.5L310.0 146.8L311.0 144.8L312.0 142.5L313.0 140.5L314.0 138.7L315.0 137.2L316.0 135.2L317.0 133.8L318.0 132.1L319.0 130.7L320.0 128.7L321.0 127.5L322.0 126.4L323.0 125.8L324.0 125.1L325.0 124.4L326.0 124.6L327.0 124.2L328.0 124.6L329.0 125.0L330.0 126.1L331.0 126.7L332.0 127.6L333.0 128.7L334.0 130.3L335.0 131.9L336.0 133.6L337.0 135.5L338.0 137.2L339.0 138.7L340.0 140.5L341.0 142.9L342.0 144.9L343.0 146.7L344.0 149.0L345.0 150.8L346.0 152.6L347.0 154.6L348.0 156.5L349.0 158.9L350.0 161.0L351.0 162.9L352.0 164.6L353.0 166.6L354.0 168.6L355.0 170.4L356.0 172.0L357.0 173.7L358.0 175.5L359.0 177.0L360.0 178.7L361.0 180.7L362.0 182.6L363.0 183.9L364.0 185.3L365.0 186.9L366.0 188.5L367.0 190.2L368.0 191.5L369.0 193.3L370.0 194.1L371.0 195.7L372.0 197.2L373.0 198.5L374.0 200.1L375.0 201.5L376.0 202.8L377.0 203.9L378.0 204.7L379.0 206.4L380.0 207.6L381.0 208.7L382.0 209.8L383.0 211.3L384.0 212.6L385.0 213.1L386.0 214.7L387.0 215.6L388.0 216.8L389.0 218.1L390.0 219.2L391.0 220.0L392.0 220.8L393.0 222.3L394.0 222.8L395.0 223.9L396.0 225.2L397.0 225.8L398.0 226.8L399.0 228.2L400.0 229.1L401.0 229.6L402.0 230.6L403.0 231.4L404.0 232.2L405.0 233.2L406.0 234.5L407.0 234.8L408.0 235.7L409.0 236.6L410.0 237.3L411.0 238.4L412.0 239.4L413.0 240.3L414.0 240.9L415.0 241.9L416.0 242.1L417.0 243.1L418.0 244.3L419.0 244.4L420.0 245.3L421.0 246.2L422.0 246.8L423.0 247.7L424.0 248.1L425.0 249.0L426.0 250.2L427.0 250.3L428.0 251.5L429.0 251.7L430.0 253.0L431.0 253.4L432.0 254.1L433.0 254.4L434.0 255.0L435.0 256.2L436.0 256.4L437.0 257.1L438.0 258.1L439.0 258.8L440.0 258.9L441.0 260.1L442.0 260.4L443.0 260.9L444.0 261.4L445.0 262.2L446.0 263.2L447.0 263.3L448.0 263.8L449.0 264.4L450.0 264.9L451.0 265.7L452.0 266.6L453.0 266.6L454.0 267.3L455.0 268.3L456.0 268.9L457.0 269.5L458.0 269.5L459.0 270.1L460.0 271.1L461.0 271.3L462.0 272.0L463.0 272.2L464.0 272.5L465.0 273.3L466.0 274.1L467.0 274.6L468.0 275.0L469.0 275.4L470.0 276.0L471.0 276.4L472.0 277.0L473.0 277.7L474.0 277.7L475.0 278.5L476.0 278.9L477.0 278.9L478.0 278.9L479.0 278.9L480.0 278.9L481.0 278.9L482.0 278.9L483.0 278.9L484.0 278.9L485.0 278.9L486.0 278.9L487.0 281.9L488.0 281.9L489.0 281.9L490.0 281.9L491.0 281.9L492.0 281.9L493.0 281.9L494.0 281.9L495.0 281.9L496.0 281.9L497.0 281.9L498.0 281.9L499.0 281.9L500.0 281.9L501.0 281.9L502.0 281.9L503.0 281.9L504.0 281.9L505.0 281.9L506.0 281.9L507.0 281.9L508.0 281.9L509.0 281.9L510.0 281.9L511.0 281.9L512.0 281.9L513.0 281.9L514.0 281.9L515.0 281.9L516.0 281.9L517.0 281.9L518.0 281.9L519.0 281.9L520.0 281.9L521.0 281.9L522.0 281.9L523.0 281.9L524.0 281.9L525.0 281.9L526.0 281.9L527.0 281.9L528.0 281.9L529.0 281.9L530.0 281.9L531.0 281.9L532.0 281.9L533.0 281.9L534.0 281.9L535.0 281.9L536.0 281.9L537.0 281.9L538.0 281.9L539.0 281.9L540.0 281.9L541.0 281.9L542.0 281.9L543.0 281.9L544.0 281.9L545.0 281.9L546.0 281.9L547.0 281.9L548.0 281.9L549.0 281.9L550.0 281.9L551.0 281.9L552.0 281.9L553.0 281.9L554.0 281.9L555.0 281.9L556.0 281.9L557.0 281.9L558.0 281.9L559.0 281.9L560.0 281.9L561.0 281.9L562.0 281.9L563.0 281.9L564.0 281.9L565.0 281.9L566.0 281.9" stroke="#a31818"/><path d="M25.0 281.9L26.0 281.9L27.0 281.9L28.0 281.9L29.0 281.9L30.0 281.9L31.0 281.9L32.0 281.9L33.0 281.9L34.0 281.9L35.0 281.9L36.0 281.9L37.0 281.9L38.0 281.9L39.0 281.9L40.0 281.9L41.0 281.9L42.0 281.9L43.0 281.9L44.0 281.9L45.0 281.9L46.0 281.9L47.0 281.9L48.0 281.9L49.0 281.9L50.0 281.9L51.0 281.9L52.0 281.9L53.0 281.9L54.0 281.9L55.0 281.9L56.0 281.9L57.0 281.9L58.0 281.9L59.0 281.9L60.0 281.9L61.0 281.9L62.0 281.9L63.0 281.9L64.0 281.9L65.0 281.9L66.0 281.9L67.0 281.9L68.0 281.9L69.0 281.9L70.0 281.9L71.0 281.9L72.0 281.9L73.0 281.9L74.0 281.9L75.0 281.9L76.0 281.9L77.0 281.9L78.0 281.9L79.0 281.9L80.0 281.9L81.0 281.9L82.0 281.9L83.0 281.9L84.0 281.9L85.0 281.9L86.0 281.9L87.0 281.9L88.0 281.9L89.0 281.9L90.0 281.9L91.0 281.9L92.0 281.9L93.0 281.9L94.0 281.9L95.0 281.9L96.0 281.9L97.0 281.9L98.0 281.9L99.0 281.9L100.0 281.9L101.0 281.9L102.0 281.9L103.0 281.9L104.0 281.9L105.0 281.9L106.0 281.9L107.0 281.9L108.0 281.9L109.0 281.9L110.0 281.9L111.0 281.9L112.0 281.9L113.0 281.9L114.0 281.9L115.0 281.9L116.0 281.9L117.0 281.9L118.0 281.9L119.0 281.9L120.0 281.9L121.0 281.9L122.0 281.9L123.0 281.9L124.0 281.9L125.0 281.9L126.0 281.9L127.0 281.9L128.0 281.9L129.0 281.9L130.0 281.9L131.0 281.9L132.0 281.9L133.0 281.9L134.0 281.9L135.0 281.9L136.0 281.9L137.0 281.9L138.0 281.9L139.0 281.9L140.0 281.9L141.0 281.9L142.0 281.9L143.0 281.9L144.0 281.9L145.0 281.9L146.0 281.9L147.0 281.9L148.0 281.9L149.0 281.9L150.0 281.9L151.0 281.9L152.0 281.9L153.0 281.9L154.0 281.9L155.0 281.9L156.0 281.9L157.0 281.9L158.0 281.9L159.0 281.9L160.0 281.9L161.0 281.9L162.0 281.9L163.0 281.9L164.0 281.9L165.0 281.9L166.0 281.9L167.0 281.9L168.0 281.9L169.0 281.9L170.0 281.9L171.0 281.9L172.0 281.9L173.0 281.9L174.0 281.9L175.0 281.9L176.0 281.9L177.0 281.9L178.0 281.9L179.0 281.9L180.0 281.9L181.0 281.9L182.0 281.9L183.0 281.9L184.0 281.9L185.0 278.2L186.0 278.1L187.0 277.5L188.0 276.9L189.0 276.2L190.0 276.0L191.0 275.3L192.0 275.1L193.0 274.2L194.0 273.8L195.0 273.2L196.0 272.8L197.0 272.4L198.0 271.5L199.0 271.0L200.0 270.7L201.0 270.0L202.0 269.7L203.0 268.9L204.0 268.3L205.0 268.0L206.0 267.8L207.0 267.2L208.0 266.3L209.0 265.7L210.0 264.9L211.0 264.5L212.0 263.9L213.0 263.7L214.0 262.6L215.0 262.6L216.0 261.6L217.0 261.0L218.0 260.3L219.0 260.1L220.0 259.0L221.0 258.6L222.0 257.9L223.0 257.1L224.0 256.4L225.0 256.3L226.0 255.5L227.0 254.8L228.0 254.3L229.0 253.0L230.0 252.8L231.0 252.1L232.0 251.1L233.0 250.5L234.0 250.2L235.0 249.0L236.0 248.6L237.0 247.5L238.0 247.1L239.0 246.1L240.0 245.5L241.0 244.7L242.0 244.3L243.0 243.4L244.0 242.5L245.0 241.8L246.0 240.8L247.0 240.3L248.0 239.1L249.0 238.5L250.0 237.7L251.0 236.7L252.0 235.6L253.0 234.9L254.0 234.3L255.0 233.2L256.0 232.7L257.0 231.6L258.0 231.0L259.0 230.0L260.0 229.0L261.0 227.8L262.0 226.7L263.0 226.1L264.0 225.2L265.0 224.4L266.0 222.9L267.0 221.8L268.0 221.4L269.0 220.2L270.0 219.0L271.0 218.1L272.0 216.6L273.0 215.8L274.0 214.8L275.0 213.6L276.0 212.2L277.0 211.0L278.0 210.2L279.0 209.2L280.0 207.4L281.0 206.1L282.0 205.0L283.0 204.2L284.0 202.6L285.0 201.4L286.0 200.5L287.0 198.9L288.0 197.3L289.0 196.2L290.0 194.3L291.0 193.1L292.0 191.9L293.0 190.1L294.0 188.5L295.0 187.3L296.0 185.6L297.0 184.5L298.0 182.3L299.0 181.2L300.0 179.3L301.0 177.9L302.0 176.0L303.0 174.4L304.0 172.4L305.0 170.6L306.0 168.9L307.0 167.4L308.0 165.2L309.0 163.2L310.0 161.5L311.0 159.4L312.0 157.6L313.0 155.8L314.0 153.9L315.0 152.0L316.0 149.8L317.0 147.7L318.0 145.8L319.0 144.1L320.0 142.1L321.0 140.6L322.0 138.6L323.0 137.2L324.0 135.5L325.0 134.0L326.0 132.7L327.0 131.3L328.0 130.1L329.0 129.0L330.0 128.1L331.0 128.0L332.0 127.4L333.0 126.9L334.0 127.5L335.0 127.5L336.0 128.0L337.0 128.5L338.0 129.1L339.0 130.7L340.0 131.3L341.0 132.7L342.0 134.6L343.0 135.5L344.0 137.4L345.0 139.1L346.0 140.7L347.0 143.0L348.0 144.5L349.0 146.1L350.0 148.4L351.0 150.0L352.0 152.4L353.0 154.5L354.0 156.5L355.0 157.8L356.0 160.1L357.0 161.8L358.0 163.8L359.0 165.5L360.0 167.4L361.0 169.1L362.0 171.2L363.0 172.6L364.0 174.9L365.0 176.0L366.0 178.4L367.0 179.5L368.0 181.0L369.0 183.1L370.0 184.5L371.0 186.3L372.0 187.6L373.0 189.2L374.0 190.3L375.0 192.2L376.0 193.5L377.0 195.2L378.0 196.0L379.0 197.4L380.0 199.2L381.0 200.7L382.0 201.6L383.0 203.1L384.0 204.3L385.0 205.4L386.0 206.7L387.0 208.0L388.0 208.8L389.0 210.2L390.0 211.7L391.0 212.5L392.0 213.7L393.0 214.7L394.0 215.9L395.0 217.2L396.0 218.3L397.0 219.5L398.0 220.2L399.0 221.1L400.0 222.2L401.0 223.0L402.0 224.1L403.0 225.3L404.0 226.3L405.0 227.0L406.0 227.9L407.0 228.8L408.0 229.7L409.0 230.9L410.0 231.6L411.0 232.9L412.0 233.6L413.0 234.3L414.0 235.2L415.0 235.8L416.0 237.1L417.0 238.0L418.0 238.5L419.0 239.6L420.0 240.1L421.0 240.8L422.0 241.6L423.0 242.4L424.0 243.5L425.0 244.3L426.0 245.1L427.0 245.4L428.0 246.6L429.0 247.1L430.0 247.8L431.0 248.6L432.0 249.3L433.0 249.8L434.0 250.6L435.0 251.5L436.0 252.3L437.0 253.1L438.0 253.3L439.0 254.4L440.0 255.0L441.0 255.6L442.0 256.4L443.0 256.5L444.0 257.6L445.0 258.3L446.0 258.4L447.0 259.4L448.0 260.2L449.0 260.4L450.0 261.4L451.0 262.0L452.0 262.3L453.0 262.7L454.0 263.4L455.0 264.4L456.0 264.7L457.0 265.2L458.0 265.8L459.0 266.7L460.0 266.8L461.0 267.2L462.0 268.4L463.0 268.6L464.0 269.2L465.0 270.1L466.0 270.2L467.0 270.6L468.0 271.7L469.0 271.7L470.0 272.3L471.0 273.3L472.0 273.3L473.0 274.3L474.0 274.4L475.0 274.9L476.0 275.3L477.0 276.1L478.0 276.6L479.0 277.0L480.0 277.5L481.0 277.9L482.0 278.7L483.0 281.9L484.0 281.9L485.0 281.9L486.0 281.9L487.0 281.9L488.0 281.9L489.0 281.9L490.0 281.9L491.0 281.9L492.0 281.9L493.0 281.9L494.0 281.9L495.0 281.9L496.0 281.9L497.0 281.9L498.0 281.9L499.0 281.9L500.0 281.9L501.0 281.9L502.0 281.9L503.0 281.9L504.0 281.9L505.0 281.9L506.0 281.9L507.0 281.9L508.0 281.9L509.0 281.9L510.0 281.9L511.0 281.9L512.0 281.9L513.0 281.9L514.0 281.9L515.0 281.9L516.0 281.9L517.0 281.9L518.0 281.9L519.0 281.9L520.0 281.9L521.0 281.9L522.0 281.9L523.0 281.9L524.0 281.9L525.0 281.9L526.0 281.9L527.0 281.9L528.0 281.9L529.0 281.9L530.0 281.9L531.0 281.9L532.0 281.9L533.0 281.9L534.0 281.9L535.0 281.9L536.0 281.9L537.0 281.9L538.0 281.9L539.0 281.9L540.0 281.9L541.0 281.9L542.0 281.9L543.0 281.9L544.0 281.9L545.0 281.9L546.0 281.9L547.0 281.9L548.0 281.9L549.0 281.9L550.0 281.9L551.0 281.9L552.0 281.9L553.0 281.9L554.0 281.9L555.0 281.9L556.0 281.9L557.0 281.9L558.0 281.9L559.0 281.9L560.0 281.9L561.0 281.9L562.0 281.9L563.0 281.9L564.0 281.9L565.0 281.9L566.0 281.9" stroke="#3d86b8"/><path d="M25.0 281.9L26.0 281.9L27.0 281.9L28.0 281.9L29.0 281.9L30.0 281.9L31.0 281.9L32.0 281.9L33.0 281.9L34.0 281.9L35.0 281.9L36.0 281.9L37.0 281.9L38.0 281.9L39.0 281.9L40.0 281.9L41.0 281.9L42.0 281.9L43.0 281.9L44.0 281.9L45.0 281.9L46.0 281.9L47.0 281.9L48.0 281.9L49.0 281.9L50.0 281.9L51.0 281.9L52.0 281.9L53.0 281.9L54.0 281.9L55.0 281.9L56.0 281.9L57.0 281.9L58.0 281.9L59.0 281.9L60.0 281.9L61.0 281.9L62.0 281.9L63.0 281.9L64.0 281.9L65.0 281.9L66.0 281.9L67.0 281.9L68.0 281.9L69.0 281.9L70.0 281.9L71.0 281.9L72.0 281.9L73.0 281.9L74.0 281.9L75.0 281.9L76.0 281.9L77.0 281.9L78.0 281.9L79.0 281.9L80.0 281.9L81.0 281.9L82.0 281.9L83.0 281.9L84.0 281.9L85.0 281.9L86.0 281.9L87.0 281.9L88.0 281.9L89.0 281.9L90.0 281.9L91.0 281.9L92.0 281.9L93.0 281.9L94.0 281.9L95.0 281.9L96.0 281.9L97.0 281.9L98.0 281.9L99.0 281.9L100.0 281.9L101.0 281.9L102.0 281.9L103.0 281.9L104.0 281.9L105.0 281.9L106.0 281.9L107.0 281.9L108.0 281.9L109.0 281.9L110.0 281.9L111.0 281.9L112.0 281.9L113.0 281.9L114.0 281.9L115.0 281.9L116.0 281.9L117.0 281.9L118.0 281.9L119.0 281.9L120.0 281.9L121.0 281.9L122.0 281.9L123.0 281.9L124.0 281.9L125.0 281.9L126.0 281.9L127.0 281.9L128.0 281.9L129.0 281.9L130.0 281.9L131.0 281.9L132.0 281.9L133.0 281.9L134.0 281.9L135.0 281.9L136.0 281.9L137.0 281.9L138.0 281.9L139.0 281.9L140.0 281.9L141.0 281.9L142.0 281.9L143.0 281.9L144.0 281.9L145.0 281.9L146.0 281.9L147.0 281.9L148.0 281.9L149.0 281.9L150.0 281.9L151.0 281.9L152.0 281.9L153.0 281.9L154.0 281.9L155.0 281.9L156.0 281.9L157.0 281.9L158.0 281.9L159.0 281.9L160.0 281.9L161.0 281.9L162.0 281.9L163.0 281.9L164.0 281.9L165.0 281.9L166.0 281.9L167.0 281.9L168.0 281.9L169.0 281.9L170.0 281.9L171.0 281.9L172.0 281.9L173.0 281.9L174.0 281.9L175.0 281.9L176.0 281.9L177.0 281.9L178.0 281.9L179.0 281.9L180.0 281.9L181.0 281.9L182.0 281.9L183.0 281.9L184.0 281.9L185.0 281.9L186.0 281.9L187.0 281.9L188.0 281.9L189.0 281.9L190.0 281.9L191.0 281.9L192.0 278.6L193.0 277.8L194.0 277.3L195.0 277.0L196.0 276.2L197.0 276.2L198.0 275.0L199.0 275.0L200.0 274.3L201.0 273.6L202.0 273.3L203.0 272.7L204.0 272.5L205.0 271.9L206.0 271.2L207.0 270.8L208.0 270.3L209.0 269.2L210.0 269.2L211.0 268.6L212.0 268.1L213.0 267.4L214.0 266.6L215.0 265.9L216.0 265.6L217.0 264.7L218.0 264.5L219.0 263.8L220.0 263.3L221.0 262.4L222.0 261.7L223.0 261.5L224.0 260.8L225.0 259.9L226.0 259.4L227.0 258.7L228.0 258.2L229.0 257.5L230.0 256.6L231.0 256.5L232.0 255.7L233.0 255.0L234.0 254.0L235.0 253.2L236.0 252.9L237.0 252.3L238.0 251.4L239.0 250.4L240.0 250.1L241.0 249.2L242.0 248.4L243.0 247.8L244.0 246.9L245.0 246.3L246.0 245.6L247.0 245.0L248.0 243.6L249.0 243.2L250.0 242.7L251.0 241.7L252.0 240.8L253.0 240.2L254.0 238.8L255.0 238.5L256.0 237.5L257.0 236.6L258.0 235.6L259.0 234.9L260.0 233.7L261.0 233.1L262.0 232.0L263.0 231.5L264.0 230.5L265.0 229.4L266.0 228.6L267.0 227.4L268.0 226.5L269.0 225.3L270.0 224.8L271.0 223.7L272.0 222.7L273.0 221.2L274.0 220.7L275.0 219.0L276.0 218.3L277.0 217.2L278.0 215.8L279.0 214.9L280.0 214.1L281.0 212.8L282.0 211.4L283.0 210.6L284.0 209.0L285.0 208.2L286.0 206.6L287.0 205.1L288.0 204.5L289.0 202.5L290.0 201.4L291.0 200.4L292.0 198.6L293.0 197.5L294.0 196.3L295.0 194.7L296.0 193.1L297.0 191.9L298.0 190.4L299.0 188.8L300.0 187.2L301.0 185.5L302.0 183.9L303.0 182.7L304.0 181.0L305.0 178.7L306.0 177.1L307.0 175.4L308.0 174.0L309.0 171.9L310.0 170.0L311.0 168.6L312.0 166.3L313.0 165.0L314.0 162.7L315.0 161.1L316.0 159.1L317.0 156.7L318.0 155.2L319.0 153.0L320.0 150.8L321.0 148.8L322.0 147.3L323.0 145.2L324.0 143.1L325.0 141.7L326.0 139.4L327.0 137.8L328.0 135.9L329.0 134.5L330.0 133.5L331.0 131.9L332.0 130.5L333.0 129.5L334.0 129.0L335.0 128.1L336.0 128.1L337.0 127.3L338.0 127.9L339.0 127.9L340.0 128.5L341.0 128.8L342.0 129.4L343.0 130.5L344.0 132.0L345.0 132.9L346.0 134.4L347.0 136.4L348.0 138.1L349.0 139.9L350.0 141.7L351.0 143.3L352.0 145.4L353.0 147.3L354.0 149.1L355.0 151.0L356.0 152.7L357.0 154.7L358.0 156.8L359.0 158.9L360.0 160.6L361.0 163.1L362.0 164.7L363.0 166.7L364.0 168.7L365.0 170.1L366.0 172.3L367.0 174.2L368.0 175.4L369.0 177.1L370.0 179.2L371.0 181.0L372.0 182.6L373.0 183.9L374.0 185.6L375.0 186.9L376.0 188.5L377.0 190.2L378.0 191.9L379.0 192.9L380.0 194.9L381.0 195.7L382.0 197.8L383.0 198.7L384.0 200.4L385.0 201.8L386.0 203.2L387.0 204.1L388.0 205.6L389.0 206.5L390.0 208.2L391.0 208.9L392.0 210.6L393.0 211.6L394.0 212.4L395.0 214.2L396.0 214.9L397.0 215.8L398.0 217.0L399.0 218.0L400.0 219.2L401.0 220.6L402.0 221.8L403.0 222.6L404.0 223.8L405.0 224.8L406.0 225.7L407.0 226.4L408.0 227.3L409.0 228.2L410.0 229.4L411.0 230.1L412.0 231.4L413.0 232.0L414.0 233.1L415.0 234.0L416.0 234.9L417.0 235.5L418.0 236.4L419.0 237.6L420.0 238.1L421.0 239.2L422.0 240.2L423.0 240.7L424.0 241.9L425.0 242.4L426.0 243.4L427.0 243.9L428.0 244.9L429.0 245.6L430.0 246.0L431.0 247.0L432.0 247.8L433.0 248.4L434.0 249.3L435.0 250.2L436.0 250.8L437.0 251.6L438.0 251.8L439.0 252.9L440.0 253.5L441.0 254.4L442.0 254.4L443.0 255.2L444.0 256.5L445.0 256.7L446.0 257.6L447.0 258.2L448.0 258.7L449.0 259.3L450.0 260.1L451.0 261.0L452.0 261.3L453.0 262.1L454.0 262.4L455.0 263.2L456.0 263.8L457.0 264.5L458.0 265.2L459.0 265.2L460.0 266.4L461.0 266.7L462.0 267.1L463.0 267.8L464.0 268.1L465.0 268.7L466.0 269.7L467.0 270.2L468.0 270.8L469.0 270.9L470.0 271.4L471.0 272.1L472.0 272.7L473.0 273.4L474.0 273.7L475.0 274.5L476.0 274.9L477.0 275.2L478.0 276.1L479.0 276.1L480.0 277.0L481.0 277.2L482.0 277.6L483.0 278.4L484.0 281.9L485.0 281.9L486.0 281.9L487.0 281.9L488.0 281.9L489.0 281.9L490.0 281.9L491.0 281.9L492.0 281.9L493.0 281.9L494.0 281.9L495.0 281.9L496.0 281.9L497.0 281.9L498.0 281.9L499.0 281.9L500.0 281.9L501.0 281.9L502.0 281.9L503.0 281.9L504.0 281.9L505.0 281.9L506.0 281.9L507.0 281.9L508.0 281.9L509.0 281.9L510.0 281.9L511.0 281.9L512.0 281.9L513.0 281.9L514.0 281.9L515.0 281.9L516.0 281.9L517.0 281.9L518.0 281.9L519.0 281.9L520.0 281.9L521.0 281.9L522.0 281.9L523.0 281.9L524.0 281.9L525.0 281.9L526.0 281.9L527.0 281.9L528.0 281.9L529.0 281.9L530.0 281.9L531.0 281.9L532.0 281.9L533.0 281.9L534.0 281.9L535.0 281.9L536.0 281.9L537.0 281.9L538.0 281.9L539.0 281.9L540.0 281.9L541.0 281.9L542.0 281.9L543.0 281.9L544.0 281.9L545.0 281.9L546.0 281.9L547.0 281.9L548.0 281.9L549.0 281.9L550.0 281.9L551.0 281.9L552.0 281.9L553.0 281.9L554.0 281.9L555.0 281.9L556.0 281.9L557.0 281.9L558.0 281.9L559.0 281.9L560.0 281.9L561.0 281.9L562.0 281.9L563.0 281.9L564.0 281.9L565.0 281.9L566.0 281.9" stroke="#9fe8b4"/><path d="M25.0 281.9L26.0 281.9L27.0 281.9L28.0 281.9L29.0 281.9L30.0 281.9L31.0 281.9L32.0 281.9L33.0 281.9L34.0 281.9L35.0 281.9L36.0 281.9L37.0 281.9L38.0 281.9L39.0 281.9L40.0 281.9L41.0 281.9L42.0 281.9L43.0 281.9L44.0 281.9L45.0 281.9L46.0 281.9L47.0 281.9L48.0 281.9L49.0 281.9L50.0 281.9L51.0 281.9L52.0 281.9L53.0 281.9L54.0 281.9L55.0 281.9L56.0 281.9L57.0 281.9L58.0 281.9L59.0 281.9L60.0 281.9L61.0 281.9L62.0 281.9L63.0 281.9L64.0 281.9L65.0 281.9L66.0 281.9L67.0 281.9L68.0 281.9L69.0 281.9L70.0 281.9L71.0 281.9L72.0 281.9L73.0 281.9L74.0 281.9L75.0 281.9L76.0 281.9L77.0 281.9L78.0 281.9L79.0 281.9L80.0 281.9L81.0 281.9L82.0 281.9L83.0 281.9L84.0 281.9L85.0 281.9L86.0 281.9L87.0 281.9L88.0 281.9L89.0 281.9L90.0 281.9L91.0 281.9L92.0 281.9L93.0 281.9L94.0 281.9L95.0 281.9L96.0 281.9L97.0 281.9L98.0 281.9L99.0 281.9L100.0 281.9L101.0 281.9L102.0 281.9L103.0 281.9L104.0 281.9L105.0 281.9L106.0 281.9L107.0 281.9L108.0 281.9L109.0 281.9L110.0 281.9L111.0 281.9L112.0 281.9L113.0 281.9L114.0 281.9L115.0 281.9L116.0 281.9L117.0 281.9L118.0 281.9L119.0 281.9L120.0 281.9L121.0 281.9L122.0 281.9L123.0 281.9L124.0 281.9L125.0 281.9L126.0 281.9L127.0 281.9L128.0 281.9L129.0 281.9L130.0 281.9L131.0 281.9L132.0 281.9L133.0 281.9L134.0 281.9L135.0 281.9L136.0 281.9L137.0 281.9L138.0 281.9L139.0 281.9L140.0 281.9L141.0 281.9L142.0 281.9L143.0 281.9L144.0 281.9L145.0 281.9L146.0 281.9L147.0 281.9L148.0 281.9L149.0 281.9L150.0 281.9L151.0 281.9L152.0 281.9L153.0 281.9L154.0 281.9L155.0 281.9L156.0 281.9L157.0 281.9L158.0 281.9L159.0 281.9L160.0 281.9L161.0 281.9L162.0 281.9L163.0 281.9L164.0 281.9L165.0 281.9L166.0 281.9L167.0 281.9L168.0 281.9L169.0 281.9L170.0 281.9L171.0 281.9L172.0 281.9L173.0 281.9L174.0 281.9L175.0 281.9L176.0 281.9L177.0 281.9L178.0 281.9L179.0 281.9L180.0 281.9L181.0 281.9L182.0 281.9L183.0 281.9L184.0 281.9L185.0 281.9L186.0 281.9L187.0 281.9L188.0 281.9L189.0 281.9L190.0 281.9L191.0 281.9L192.0 281.9L193.0 281.9L194.0 281.9L195.0 278.5L196.0 277.9L197.0 277.5L198.0 277.1L199.0 276.5L200.0 276.0L201.0 275.5L202.0 274.9L203.0 274.5L204.0 274.1L205.0 273.2L206.0 273.0L207.0 272.3L208.0 272.2L209.0 271.6L210.0 270.5L211.0 270.4L212.0 269.6L213.0 268.8L214.0 268.8L215.0 268.3L216.0 267.6L217.0 266.9L218.0 266.6L219.0 265.7L220.0 265.2L221.0 264.6L222.0 264.1L223.0 263.5L224.0 262.5L225.0 261.8L226.0 261.5L227.0 260.9L228.0 260.1L229.0 259.8L230.0 259.1L231.0 258.4L232.0 257.6L233.0 257.1L234.0 256.1L235.0 255.8L236.0 254.7L237.0 254.5L238.0 253.6L239.0 252.7L240.0 251.9L241.0 251.5L242.0 250.7L243.0 250.2L244.0 249.0L245.0 248.8L246.0 247.8L247.0 247.0L248.0 246.5L249.0 245.6L250.0 244.7L251.0 243.9L252.0 243.2L253.0 242.1L254.0 241.4L255.0 241.0L256.0 239.7L257.0 238.9L258.0 238.6L259.0 237.4L260.0 236.6L261.0 235.8L262.0 235.0L263.0 233.9L264.0 233.3L265.0 231.8L266.0 231.5L267.0 230.2L268.0 229.5L269.0 228.3L270.0 227.7L271.0 226.4L272.0 225.6L273.0 224.4L274.0 223.7L275.0 222.7L276.0 221.2L277.0 220.6L278.0 219.6L279.0 218.1L280.0 216.9L281.0 216.3L282.0 215.2L283.0 213.5L284.0 212.8L285.0 211.7L286.0 210.1L287.0 209.2L288.0 207.7L289.0 206.8L290.0 205.3L291.0 204.0L292.0 202.4L293.0 201.5L294.0 200.2L295.0 198.5L296.0 197.0L297.0 195.6L298.0 194.3L299.0 193.3L300.0 191.7L301.0 190.3L302.0 188.6L303.0 186.6L304.0 185.2L305.0 184.0L306.0 182.3L307.0 180.8L308.0 179.0L309.0 177.2L310.0 175.5L311.0 173.8L312.0 171.7L313.0 169.6L314.0 167.9L315.0 165.9L316.0 164.2L317.0 162.5L318.0 160.3L319.0 158.4L320.0 156.3L321.0 154.5L322.0 152.7L323.0 150.8L324.0 149.1L325.0 146.5L326.0 144.7L327.0 142.7L328.0 141.5L329.0 139.5L330.0 137.9L331.0 136.4L332.0 134.3L333.0 133.6L334.0 131.9L335.0 131.1L336.0 130.0L337.0 129.5L338.0 128.7L339.0 128.4L340.0 128.2L341.0 128.7L342.0 128.8L343.0 129.1L344.0 130.0L345.0 131.0L346.0 132.0L347.0 133.3L348.0 134.9L349.0 136.2L350.0 138.0L351.0 139.3L352.0 141.5L353.0 143.3L354.0 144.9L355.0 146.5L356.0 148.5L357.0 150.9L358.0 152.9L359.0 154.8L360.0 156.6L361.0 158.6L362.0 160.2L363.0 162.5L364.0 164.7L365.0 166.0L366.0 168.1L367.0 170.2L368.0 171.8L369.0 173.4L370.0 175.1L371.0 177.2L372.0 179.0L373.0 180.7L374.0 182.0L375.0 183.9L376.0 185.5L377.0 186.8L378.0 188.6L379.0 189.9L380.0 191.3L381.0 192.6L382.0 194.6L383.0 196.0L384.0 196.9L385.0 198.4L386.0 199.9L387.0 201.2L388.0 202.9L389.0 203.8L390.0 205.3L391.0 206.6L392.0 207.7L393.0 209.3L394.0 210.2L395.0 211.4L396.0 212.7L397.0 213.7L398.0 214.7L399.0 216.4L400.0 217.3L401.0 218.3L402.0 219.3L403.0 220.5L404.0 221.3L405.0 222.2L406.0 223.5L407.0 224.8L408.0 225.2L409.0 226.8L410.0 227.4L411.0 228.8L412.0 229.6L413.0 230.2L414.0 231.1L415.0 232.5L416.0 233.4L417.0 234.2L418.0 234.9L419.0 235.8L420.0 236.8L421.0 237.7L422.0 238.6L423.0 239.0L424.0 240.2L425.0 241.1L426.0 241.7L427.0 242.1L428.0 243.0L429.0 244.1L430.0 244.7L431.0 245.8L432.0 246.4L433.0 247.2L434.0 247.6L435.0 248.6L436.0 249.4L437.0 250.3L438.0 251.0L439.0 251.3L440.0 252.2L441.0 253.2L442.0 253.3L443.0 253.9L444.0 254.7L445.0 255.8L446.0 256.1L447.0 257.1L448.0 257.8L449.0 258.5L450.0 258.6L451.0 259.7L452.0 260.4L453.0 260.9L454.0 261.7L455.0 262.3L456.0 262.7L457.0 263.5L458.0 263.9L459.0 264.2L460.0 264.9L461.0 266.0L462.0 266.1L463.0 266.8L464.0 267.7L465.0 268.1L466.0 268.7L467.0 269.1L468.0 269.7L469.0 269.9L470.0 270.6L471.0 271.1L472.0 271.9L473.0 272.4L474.0 272.7L475.0 273.6L476.0 273.7L477.0 274.5L478.0 274.7L479.0 275.6L480.0 275.8L481.0 276.9L482.0 277.0L483.0 277.8L484.0 278.1L485.0 278.5L486.0 281.9L487.0 281.9L488.0 281.9L489.0 281.9L490.0 281.9L491.0 281.9L492.0 281.9L493.0 281.9L494.0 281.9L495.0 281.9L496.0 281.9L497.0 281.9L498.0 281.9L499.0 281.9L500.0 281.9L501.0 281.9L502.0 281.9L503.0 281.9L504.0 281.9L505.0 281.9L506.0 281.9L507.0 281.9L508.0 281.9L509.0 281.9L510.0 281.9L511.0 281.9L512.0 281.9L513.0 281.9L514.0 281.9L515.0 281.9L516.0 281.9L517.0 281.9L518.0 281.9L519.0 281.9L520.0 281.9L521.0 281.9L522.0 281.9L523.0 281.9L524.0 281.9L525.0 281.9L526.0 281.9L527.0 281.9L528.0 281.9L529.0 281.9L530.0 281.9L531.0 281.9L532.0 281.9L533.0 281.9L534.0 281.9L535.0 281.9L536.0 281.9L537.0 281.9L538.0 281.9L539.0 281.9L540.0 281.9L541.0 281.9L542.0 281.9L543.0 281.9L544.0 281.9L545.0 281.9L546.0 281.9L547.0 281.9L548.0 281.9L549.0 281.9L550.0 281.9L551.0 281.9L552.0 281.9L553.0 281.9L554.0 281.9L555.0 281.9L556.0 281.9L557.0 281.9L558.0 281.9L559.0 281.9L560.0 281.9L561.0 281.9L562.0 281.9L563.0 281.9L564.0 281.9L565.0 281.9L566.0 281.9" stroke="#8e8e8e"/><path d="M25.0 281.9L26.0 281.9L27.0 281.9L28.0 281.9L29.0 281.9L30.0 281.9L31.0 281.9L32.0 281.9L33.0 281.9L34.0 281.9L35.0 281.9L36.0 281.9L37.0 281.9L38.0 281.9L39.0 281.9L40.0 281.9L41.0 281.9L42.0 281.9L43.0 281.9L44.0 281.9L45.0 281.9L46.0 281.9L47.0 281.9L48.0 281.9L49.0 281.9L50.0 281.9L51.0 281.9L52.0 281.9L53.0 281.9L54.0 281.9L55.0 281.9L56.0 281.9L57.0 281.9L58.0 281.9L59.0 281.9L60.0 281.9L61.0 281.9L62.0 281.9L63.0 281.9L64.0 281.9L65.0 281.9L66.0 281.9L67.0 281.9L68.0 281.9L69.0 281.9L70.0 281.9L71.0 281.9L72.0 281.9L73.0 281.9L74.0 281.9L75.0 281.9L76.0 281.9L77.0 281.9L78.0 281.9L79.0 281.9L80.0 281.9L81.0 281.9L82.0 281.9L83.0 281.9L84.0 281.9L85.0 281.9L86.0 281.9L87.0 281.9L88.0 281.9L89.0 281.9L90.0 281.9L91.0 281.9L92.0 281.9L93.0 281.9L94.0 281.9L95.0 281.9L96.0 281.9L97.0 281.9L98.0 281.9L99.0 281.9L100.0 281.9L101.0 281.9L102.0 281.9L103.0 281.9L104.0 281.9L105.0 281.9L106.0 281.9L107.0 281.9L108.0 281.9L109.0 281.9L110.0 281.9L111.0 281.9L112.0 281.9L113.0 281.9L114.0 281.9L115.0 281.9L116.0 281.9L117.0 281.9L118.0 281.9L119.0 281.9L120.0 281.9L121.0 281.9L122.0 281.9L123.0 281.9L124.0 281.9L125.0 281.9L126.0 281.9L127.0 281.9L128.0 281.9L129.0 281.9L130.0 281.9L131.0 281.9L132.0 281.9L133.0 281.9L134.0 281.9L135.0 281.9L136.0 281.9L137.0 281.9L138.0 281.9L139.0 281.9L140.0 281.9L141.0 281.9L142.0 281.9L143.0 281.9L144.0 281.9L145.0 281.9L146.0 281.9L147.0 281.9L148.0 281.9L149.0 281.9L150.0 281.9L151.0 281.9L152.0 281.9L153.0 281.9L154.0 281.9L155.0 281.9L156.0 281.9L157.0 281.9L158.0 281.9L159.0 281.9L160.0 281.9L161.0 281.9L162.0 281.9L163.0 281.9L164.0 281.9L165.0 281.9L166.0 281.9L167.0 281.9L168.0 281.9L169.0 281.9L170.0 281.9L171.0 281.9L172.0 281.9L173.0 281.9L174.0 281.9L175.0 281.9L176.0 281.9L177.0 281.9L178.0 281.9L179.0 281.9L180.0 281.9L181.0 281.9L182.0 281.9L183.0 281.9L184.0 281.9L185.0 281.9L186.0 281.9L187.0 281.9L188.0 281.9L189.0 281.9L190.0 281.9L191.0 281.9L192.0 281.9L193.0 278.4L194.0 277.8L195.0 277.9L196.0 277.2L197.0 276.7L198.0 276.4L199.0 275.8L200.0 275.0L201.0 274.5L202.0 274.2L203.0 273.7L204.0 272.9L205.0 272.4L206.0 272.0L207.0 271.2L208.0 271.2L209.0 270.5L210.0 269.6L211.0 269.4L212.0 268.8L213.0 267.9L214.0 267.6L215.0 267.3L216.0 266.5L217.0 266.1L218.0 265.2L219.0 265.1L220.0 264.3L221.0 263.6L222.0 262.7L223.0 262.3L224.0 261.4L225.0 261.1L226.0 260.3L227.0 259.8L228.0 259.2L229.0 258.4L230.0 257.9L231.0 257.4L232.0 256.5L233.0 256.2L234.0 255.8L235.0 255.0L236.0 254.4L237.0 253.2L238.0 252.9L239.0 251.9L240.0 251.7L241.0 250.7L242.0 250.1L243.0 249.5L244.0 248.3L245.0 247.5L246.0 247.3L247.0 246.6L248.0 245.6L249.0 244.5L250.0 243.7L251.0 243.5L252.0 242.7L253.0 241.7L254.0 241.1L255.0 240.4L256.0 239.0L257.0 238.7L258.0 238.0L259.0 237.1L260.0 236.3L261.0 235.1L262.0 234.3L263.0 233.1L264.0 232.7L265.0 231.7L266.0 230.6L267.0 229.5L268.0 228.6L269.0 227.8L270.0 227.3L271.0 226.0L272.0 225.3L273.0 223.8L274.0 222.9L275.0 221.8L276.0 220.9L277.0 220.2L278.0 218.8L279.0 217.7L280.0 216.9L281.0 215.6L282.0 214.8L283.0 213.6L284.0 212.5L285.0 211.1L286.0 209.9L287.0 208.7L288.0 207.9L289.0 206.6L290.0 205.1L291.0 203.8L292.0 202.2L293.0 201.4L294.0 199.9L295.0 198.5L296.0 196.9L297.0 195.7L298.0 194.5L299.0 192.7L300.0 191.3L301.0 190.0L302.0 188.5L303.0 186.6L304.0 185.1L305.0 183.7L306.0 182.3L307.0 180.5L308.0 178.5L309.0 177.0L310.0 175.3L311.0 173.9L312.0 171.8L313.0 170.5L314.0 168.2L315.0 166.3L316.0 164.3L317.0 162.7L318.0 160.8L319.0 159.1L320.0 157.0L321.0 155.0L322.0 152.7L323.0 151.3L324.0 148.9L325.0 146.9L326.0 144.9L327.0 143.3L328.0 141.5L329.0 139.4L330.0 137.6L331.0 135.7L332.0 134.5L333.0 133.1L334.0 131.3L335.0 130.1L336.0 129.4L337.0 128.4L338.0 127.3L339.0 127.4L340.0 126.9L341.0 126.8L342.0 126.6L343.0 127.4L344.0 127.5L345.0 128.4L346.0 129.5L347.0 130.5L348.0 131.3L349.0 132.6L350.0 134.2L351.0 135.8L352.0 138.0L353.0 139.5L354.0 141.3L355.0 143.1L356.0 145.1L357.0 147.0L358.0 149.2L359.0 151.0L360.0 153.3L361.0 155.2L362.0 157.2L363.0 159.1L364.0 160.6L365.0 162.7L366.0 164.9L367.0 166.4L368.0 168.4L369.0 170.0L370.0 172.2L371.0 173.6L372.0 175.4L373.0 177.4L374.0 178.6L375.0 180.2L376.0 182.1L377.0 183.7L378.0 185.1L379.0 186.8L380.0 188.6L381.0 190.2L382.0 191.7L383.0 193.1L384.0 194.0L385.0 195.7L386.0 197.1L387.0 198.2L388.0 200.1L389.0 201.0L390.0 202.7L391.0 203.9L392.0 204.9L393.0 206.2L394.0 207.5L395.0 208.5L396.0 209.6L397.0 211.1L398.0 212.1L399.0 213.2L400.0 214.7L401.0 215.8L402.0 216.7L403.0 217.5L404.0 219.1L405.0 219.8L406.0 220.7L407.0 222.2L408.0 223.3L409.0 223.9L410.0 225.1L411.0 226.3L412.0 227.0L413.0 227.8L414.0 228.6L415.0 229.5L416.0 231.0L417.0 231.8L418.0 232.3L419.0 233.5L420.0 234.1L421.0 235.3L422.0 235.9L423.0 237.0L424.0 237.7L425.0 238.2L426.0 239.4L427.0 240.3L428.0 240.6L429.0 241.4L430.0 242.4L431.0 243.5L432.0 244.4L433.0 244.8L434.0 245.9L435.0 246.5L436.0 246.9L437.0 247.8L438.0 248.8L439.0 249.3L440.0 250.0L441.0 250.8L442.0 251.1L443.0 252.1L444.0 252.8L445.0 253.5L446.0 254.3L447.0 254.6L448.0 255.4L449.0 256.1L450.0 256.5L451.0 257.6L452.0 258.4L453.0 258.7L454.0 259.3L455.0 259.9L456.0 260.5L457.0 261.1L458.0 261.6L459.0 262.7L460.0 262.9L461.0 263.4L462.0 264.3L463.0 264.4L464.0 265.3L465.0 266.0L466.0 266.7L467.0 266.9L468.0 267.3L469.0 268.5L470.0 268.4L471.0 269.3L472.0 269.9L473.0 270.7L474.0 270.8L475.0 271.3L476.0 271.9L477.0 272.5L478.0 272.8L479.0 273.9L480.0 274.1L481.0 274.8L482.0 275.0L483.0 275.8L484.0 276.4L485.0 276.5L486.0 277.5L487.0 277.5L488.0 278.3L489.0 281.9L490.0 281.9L491.0 281.9L492.0 281.9L493.0 281.9L494.0 281.9L495.0 281.9L496.0 281.9L497.0 281.9L498.0 281.9L499.0 281.9L500.0 281.9L501.0 281.9L502.0 281.9L503.0 281.9L504.0 281.9L505.0 281.9L506.0 281.9L507.0 281.9L508.0 281.9L509.0 281.9L510.0 281.9L511.0 281.9L512.0 281.9L513.0 281.9L514.0 281.9L515.0 281.9L516.0 281.9L517.0 281.9L518.0 281.9L519.0 281.9L520.0 281.9L521.0 281.9L522.0 281.9L523.0 281.9L524.0 281.9L525.0 281.9L526.0 281.9L527.0 281.9L528.0 281.9L529.0 281.9L530.0 281.9L531.0 281.9L532.0 281.9L533.0 281.9L534.0 281.9L535.0 281.9L536.0 281.9L537.0 281.9L538.0 281.9L539.0 281.9L540.0 281.9L541.0 281.9L542.0 281.9L543.0 281.9L544.0 281.9L545.0 281.9L546.0 281.9L547.0 281.9L548.0 281.9L549.0 281.9L550.0 281.9L551.0 281.9L552.0 281.9L553.0 281.9L554.0 281.9L555.0 281.9L556.0 281.9L557.0 281.9L558.0 281.9L559.0 281.9L560.0 281.9L561.0 281.9L562.0 281.9L563.0 281.9L564.0 281.9L565.0 281.9L566.0 281.9" stroke="#ff6a1a"/><path d="M25.0 281.9L26.0 281.9L27.0 281.9L28.0 281.9L29.0 281.9L30.0 281.9L31.0 281.9L32.0 281.9L33.0 281.9L34.0 281.9L35.0 281.9L36.0 281.9L37.0 281.9L38.0 281.9L39.0 281.9L40.0 281.9L41.0 281.9L42.0 281.9L43.0 281.9L44.0 281.9L45.0 281.9L46.0 281.9L47.0 281.9L48.0 281.9L49.0 281.9L50.0 281.9L51.0 281.9L52.0 281.9L53.0 281.9L54.0 281.9L55.0 281.9L56.0 281.9L57.0 281.9L58.0 281.9L59.0 281.9L60.0 281.9L61.0 281.9L62.0 281.9L63.0 281.9L64.0 281.9L65.0 281.9L66.0 281.9L67.0 281.9L68.0 281.9L69.0 281.9L70.0 281.9L71.0 281.9L72.0 281.9L73.0 281.9L74.0 281.9L75.0 281.9L76.0 281.9L77.0 281.9L78.0 281.9L79.0 281.9L80.0 281.9L81.0 281.9L82.0 281.9L83.0 281.9L84.0 281.9L85.0 281.9L86.0 281.9L87.0 281.9L88.0 281.9L89.0 281.9L90.0 281.9L91.0 281.9L92.0 281.9L93.0 281.9L94.0 281.9L95.0 281.9L96.0 281.9L97.0 281.9L98.0 281.9L99.0 281.9L100.0 281.9L101.0 281.9L102.0 281.9L103.0 281.9L104.0 281.9L105.0 281.9L106.0 281.9L107.0 281.9L108.0 281.9L109.0 281.9L110.0 281.9L111.0 281.9L112.0 281.9L113.0 281.9L114.0 281.9L115.0 281.9L116.0 281.9L117.0 281.9L118.0 281.9L119.0 281.9L120.0 281.9L121.0 281.9L122.0 281.9L123.0 281.9L124.0 281.9L125.0 281.9L126.0 281.9L127.0 281.9L128.0 281.9L129.0 281.9L130.0 281.9L131.0 281.9L132.0 281.9L133.0 281.9L134.0 281.9L135.0 281.9L136.0 281.9L137.0 281.9L138.0 281.9L139.0 281.9L140.0 281.9L141.0 281.9L142.0 281.9L143.0 281.9L144.0 281.9L145.0 281.9L146.0 281.9L147.0 281.9L148.0 281.9L149.0 281.9L150.0 281.9L151.0 281.9L152.0 281.9L153.0 281.9L154.0 281.9L155.0 281.9L156.0 281.9L157.0 281.9L158.0 281.9L159.0 281.9L160.0 281.9L161.0 281.9L162.0 281.9L163.0 281.9L164.0 281.9L165.0 281.9L166.0 281.9L167.0 281.9L168.0 281.9L169.0 281.9L170.0 281.9L171.0 281.9L172.0 281.9L173.0 281.9L174.0 281.9L175.0 281.9L176.0 281.9L177.0 281.9L178.0 281.9L179.0 281.9L180.0 281.9L181.0 281.9L182.0 281.9L183.0 281.9L184.0 281.9L185.0 281.9L186.0 281.9L187.0 281.9L188.0 281.9L189.0 281.9L190.0 281.9L191.0 281.9L192.0 278.6L193.0 278.5L194.0 278.0L195.0 277.4L196.0 276.8L197.0 276.3L198.0 275.8L199.0 275.3L200.0 275.0L201.0 274.3L202.0 273.7L203.0 273.1L204.0 272.9L205.0 272.6L206.0 271.5L207.0 271.4L208.0 270.8L209.0 269.9L210.0 269.3L211.0 269.2L212.0 268.2L213.0 267.6L214.0 267.0L215.0 267.0L216.0 266.1L217.0 265.2L218.0 264.9L219.0 264.4L220.0 263.8L221.0 263.0L222.0 262.9L223.0 262.2L224.0 261.3L225.0 260.7L226.0 260.0L227.0 259.2L228.0 259.0L229.0 258.1L230.0 257.7L231.0 257.2L232.0 256.2L233.0 255.5L234.0 254.9L235.0 254.3L236.0 253.3L237.0 252.9L238.0 252.1L239.0 251.3L240.0 251.1L241.0 250.3L242.0 249.4L243.0 248.4L244.0 248.2L245.0 247.2L246.0 246.8L247.0 245.9L248.0 244.8L249.0 244.4L250.0 243.5L251.0 242.6L252.0 242.1L253.0 241.0L254.0 240.0L255.0 239.2L256.0 238.7L257.0 237.7L258.0 236.7L259.0 235.8L260.0 235.5L261.0 234.2L262.0 233.8L263.0 232.9L264.0 232.0L265.0 230.6L266.0 230.2L267.0 229.0L268.0 228.3L269.0 227.3L270.0 226.0L271.0 225.0L272.0 224.4L273.0 223.0L274.0 221.8L275.0 220.7L276.0 220.1L277.0 218.8L278.0 218.2L279.0 216.5L280.0 215.6L281.0 214.7L282.0 213.5L283.0 212.5L284.0 211.2L285.0 210.2L286.0 209.1L287.0 207.8L288.0 206.4L289.0 205.0L290.0 203.8L291.0 202.3L292.0 201.0L293.0 199.8L294.0 198.4L295.0 197.0L296.0 195.4L297.0 194.6L298.0 192.7L299.0 191.4L300.0 189.8L301.0 188.4L302.0 187.0L303.0 185.6L304.0 183.7L305.0 182.4L306.0 180.3L307.0 178.7L308.0 176.9L309.0 175.7L310.0 173.3L311.0 171.6L312.0 170.2L313.0 168.0L314.0 166.0L315.0 164.4L316.0 162.5L317.0 160.6L318.0 158.5L319.0 156.7L320.0 154.7L321.0 152.6L322.0 150.9L323.0 148.7L324.0 146.8L325.0 145.3L326.0 143.4L327.0 141.2L328.0 139.5L329.0 137.5L330.0 135.8L331.0 134.5L332.0 133.4L333.0 131.5L334.0 130.6L335.0 129.8L336.0 128.4L337.0 128.2L338.0 127.5L339.0 127.6L340.0 127.6L341.0 127.9L342.0 128.2L343.0 128.3L344.0 129.5L345.0 130.4L346.0 131.4L347.0 132.6L348.0 134.2L349.0 135.7L350.0 137.4L351.0 139.5L352.0 140.7L353.0 143.0L354.0 144.4L355.0 146.7L356.0 148.5L357.0 150.4L358.0 152.4L359.0 154.2L360.0 156.2L361.0 158.3L362.0 160.0L363.0 162.4L364.0 164.2L365.0 166.0L366.0 167.9L367.0 169.4L368.0 171.1L369.0 172.9L370.0 175.2L371.0 176.7L372.0 178.7L373.0 180.0L374.0 181.7L375.0 183.5L376.0 185.2L377.0 186.5L378.0 188.1L379.0 189.5L380.0 190.9L381.0 192.8L382.0 194.3L383.0 195.4L384.0 196.6L385.0 198.5L386.0 199.5L387.0 201.1L388.0 202.2L389.0 203.2L390.0 205.0L391.0 205.8L392.0 207.6L393.0 208.3L394.0 209.6L395.0 210.6L396.0 211.9L397.0 213.3L398.0 214.1L399.0 215.2L400.0 216.3L401.0 217.3L402.0 218.8L403.0 219.6L404.0 221.0L405.0 222.0L406.0 222.9L407.0 224.2L408.0 225.2L409.0 225.8L410.0 227.1L411.0 228.0L412.0 228.6L413.0 229.9L414.0 230.3L415.0 231.7L416.0 232.7L417.0 233.4L418.0 234.4L419.0 235.2L420.0 235.9L421.0 236.5L422.0 237.6L423.0 238.4L424.0 239.5L425.0 240.4L426.0 241.3L427.0 241.6L428.0 242.8L429.0 243.6L430.0 243.8L431.0 244.9L432.0 245.3L433.0 246.1L434.0 247.1L435.0 248.0L436.0 248.4L437.0 249.2L438.0 250.0L439.0 250.8L440.0 251.2L441.0 251.9L442.0 252.5L443.0 253.4L444.0 254.5L445.0 254.6L446.0 255.7L447.0 256.3L448.0 257.1L449.0 257.7L450.0 257.8L451.0 258.7L452.0 259.6L453.0 260.1L454.0 260.9L455.0 261.0L456.0 262.1L457.0 262.4L458.0 263.3L459.0 263.8L460.0 264.2L461.0 264.9L462.0 265.1L463.0 266.4L464.0 266.9L465.0 267.3L466.0 267.9L467.0 268.5L468.0 268.9L469.0 269.3L470.0 270.1L471.0 270.9L472.0 271.3L473.0 271.8L474.0 271.9L475.0 272.6L476.0 273.1L477.0 273.8L478.0 274.5L479.0 274.9L480.0 275.4L481.0 275.8L482.0 276.1L483.0 276.7L484.0 277.7L485.0 278.1L486.0 278.4L487.0 281.9L488.0 281.9L489.0 281.9L490.0 281.9L491.0 281.9L492.0 281.9L493.0 281.9L494.0 281.9L495.0 281.9L496.0 281.9L497.0 281.9L498.0 281.9L499.0 281.9L500.0 281.9L501.0 281.9L502.0 281.9L503.0 281.9L504.0 281.9L505.0 281.9L506.0 281.9L507.0 281.9L508.0 281.9L509.0 281.9L510.0 281.9L511.0 281.9L512.0 281.9L513.0 281.9L514.0 281.9L515.0 281.9L516.0 281.9L517.0 281.9L518.0 281.9L519.0 281.9L520.0 281.9L521.0 281.9L522.0 281.9L523.0 281.9L524.0 281.9L525.0 281.9L526.0 281.9L527.0 281.9L528.0 281.9L529.0 281.9L530.0 281.9L531.0 281.9L532.0 281.9L533.0 281.9L534.0 281.9L535.0 281.9L536.0 281.9L537.0 281.9L538.0 281.9L539.0 281.9L540.0 281.9L541.0 281.9L542.0 281.9L543.0 281.9L544.0 281.9L545.0 281.9L546.0 281.9L547.0 281.9L548.0 281.9L549.0 281.9L550.0 281.9L551.0 281.9L552.0 281.9L553.0 281.9L554.0 281.9L555.0 281.9L556.0 281.9L557.0 281.9L558.0 281.9L559.0 281.9L560.0 281.9L561.0 281.9L562.0 281.9L563.0 281.9L564.0 281.9L565.0 281.9L566.0 281.9" stroke="#dc1438"/><path d="M25.0 281.9L26.0 281.9L27.0 281.9L28.0 281.9L29.0 281.9L30.0 281.9L31.0 281.9L32.0 281.9L33.0 281.9L34.0 281.9L35.0 281.9L36.0 281.9L37.0 281.9L38.0 281.9L39.0 281.9L40.0 281.9L41.0 281.9L42.0 281.9L43.0 281.9L44.0 281.9L45.0 281.9L46.0 281.9L47.0 281.9L48.0 281.9L49.0 281.9L50.0 281.9L51.0 281.9L52.0 281.9L53.0 281.9L54.0 281.9L55.0 281.9L56.0 281.9L57.0 281.9L58.0 281.9L59.0 281.9L60.0 281.9L61.0 281.9L62.0 281.9L63.0 281.9L64.0 281.9L65.0 281.9L66.0 281.9L67.0 281.9L68.0 281.9L69.0 281.9L70.0 281.9L71.0 281.9L72.0 281.9L73.0 281.9L74.0 281.9L75.0 281.9L76.0 281.9L77.0 281.9L78.0 281.9L79.0 281.9L80.0 281.9L81.0 281.9L82.0 281.9L83.0 281.9L84.0 281.9L85.0 281.9L86.0 281.9L87.0 281.9L88.0 281.9L89.0 281.9L90.0 281.9L91.0 281.9L92.0 281.9L93.0 281.9L94.0 281.9L95.0 281.9L96.0 281.9L97.0 281.9L98.0 281.9L99.0 281.9L100.0 281.9L101.0 281.9L102.0 281.9L103.0 281.9L104.0 281.9L105.0 281.9L106.0 281.9L107.0 281.9L108.0 281.9L109.0 281.9L110.0 281.9L111.0 281.9L112.0 281.9L113.0 281.9L114.0 281.9L115.0 281.9L116.0 281.9L117.0 281.9L118.0 281.9L119.0 281.9L120.0 281.9L121.0 281.9L122.0 281.9L123.0 281.9L124.0 281.9L125.0 281.9L126.0 281.9L127.0 281.9L128.0 281.9L129.0 281.9L130.0 281.9L131.0 281.9L132.0 281.9L133.0 281.9L134.0 281.9L135.0 281.9L136.0 281.9L137.0 281.9L138.0 281.9L139.0 281.9L140.0 281.9L141.0 281.9L142.0 281.9L143.0 281.9L144.0 281.9L145.0 281.9L146.0 281.9L147.0 281.9L148.0 281.9L149.0 281.9L150.0 281.9L151.0 281.9L152.0 281.9L153.0 281.9L154.0 281.9L155.0 281.9L156.0 281.9L157.0 281.9L158.0 281.9L159.0 281.9L160.0 281.9L161.0 281.9L162.0 281.9L163.0 281.9L164.0 281.9L165.0 281.9L166.0 281.9L167.0 281.9L168.0 281.9L169.0 281.9L170.0 281.9L171.0 281.9L172.0 281.9L173.0 281.9L174.0 281.9L175.0 281.9L176.0 281.9L177.0 281.9L178.0 281.9L179.0 281.9L180.0 281.9L181.0 281.9L182.0 281.9L183.0 281.9L184.0 281.9L185.0 281.9L186.0 281.9L187.0 281.9L188.0 281.9L189.0 281.9L190.0 281.9L191.0 281.9L192.0 281.9L193.0 281.9L194.0 281.9L195.0 281.9L196.0 278.8L197.0 278.5L198.0 278.0L199.0 277.6L200.0 276.9L201.0 276.2L202.0 275.6L203.0 275.5L204.0 275.0L205.0 274.0L206.0 273.8L207.0 273.0L208.0 272.2L209.0 272.0L210.0 271.8L211.0 271.0L212.0 270.6L213.0 270.1L214.0 269.5L215.0 268.6L216.0 268.4L217.0 267.3L218.0 267.0L219.0 266.1L220.0 265.8L221.0 265.5L222.0 264.9L223.0 264.4L224.0 263.5L225.0 262.9L226.0 262.0L227.0 261.6L228.0 261.3L229.0 260.3L230.0 260.0L231.0 259.0L232.0 258.7L233.0 257.6L234.0 257.5L235.0 256.3L236.0 255.6L237.0 255.2L238.0 254.7L239.0 254.0L240.0 253.1L241.0 252.6L242.0 251.6L243.0 250.9L244.0 250.2L245.0 249.4L246.0 248.6L247.0 248.0L248.0 247.4L249.0 246.7L250.0 245.8L251.0 245.2L252.0 244.3L253.0 243.8L254.0 242.5L255.0 242.2L256.0 241.5L257.0 240.5L258.0 239.7L259.0 239.1L260.0 237.7L261.0 236.8L262.0 236.2L263.0 235.5L264.0 234.5L265.0 233.6L266.0 232.6L267.0 231.8L268.0 231.1L269.0 229.6L270.0 229.1L271.0 227.8L272.0 227.3L273.0 225.9L274.0 225.3L275.0 224.0L276.0 223.2L277.0 222.1L278.0 221.4L279.0 220.0L280.0 218.9L281.0 217.8L282.0 216.6L283.0 215.9L284.0 214.4L285.0 213.1L286.0 212.0L287.0 211.2L288.0 210.1L289.0 208.7L290.0 207.7L291.0 206.0L292.0 205.2L293.0 203.8L294.0 202.1L295.0 200.7L296.0 199.6L297.0 198.2L298.0 196.9L299.0 195.6L300.0 193.8L301.0 192.4L302.0 191.0L303.0 189.3L304.0 188.0L305.0 186.6L306.0 184.8L307.0 183.1L308.0 181.8L309.0 179.7L310.0 178.6L311.0 176.7L312.0 174.7L313.0 172.8L314.0 171.6L315.0 169.2L316.0 167.8L317.0 165.8L318.0 164.0L319.0 161.8L320.0 160.2L321.0 158.0L322.0 156.2L323.0 154.5L324.0 152.3L325.0 150.1L326.0 148.2L327.0 146.3L328.0 144.7L329.0 142.8L330.0 140.7L331.0 139.1L332.0 137.2L333.0 135.7L334.0 134.1L335.0 133.2L336.0 131.6L337.0 130.4L338.0 129.8L339.0 128.8L340.0 128.2L341.0 128.1L342.0 128.2L343.0 128.0L344.0 128.3L345.0 128.8L346.0 129.7L347.0 130.4L348.0 131.7L349.0 132.9L350.0 133.9L351.0 135.6L352.0 137.6L353.0 138.8L354.0 141.0L355.0 142.3L356.0 144.5L357.0 146.4L358.0 148.5L359.0 150.0L360.0 152.0L361.0 154.2L362.0 156.5L363.0 158.1L364.0 160.3L365.0 162.0L366.0 164.3L367.0 165.5L368.0 167.9L369.0 169.3L370.0 171.1L371.0 173.1L372.0 174.8L373.0 177.0L374.0 178.6L375.0 180.2L376.0 181.5L377.0 183.1L378.0 184.9L379.0 186.4L380.0 187.9L381.0 189.4L382.0 190.9L383.0 192.4L384.0 193.8L385.0 195.3L386.0 197.2L387.0 198.5L388.0 199.7L389.0 201.3L390.0 202.6L391.0 203.3L392.0 204.6L393.0 206.0L394.0 207.4L395.0 209.0L396.0 209.5L397.0 211.2L398.0 212.4L399.0 213.2L400.0 214.7L401.0 215.9L402.0 216.5L403.0 218.0L404.0 218.9L405.0 220.2L406.0 220.8L407.0 222.2L408.0 222.8L409.0 223.8L410.0 225.1L411.0 226.0L412.0 227.0L413.0 227.8L414.0 229.3L415.0 229.9L416.0 230.9L417.0 231.7L418.0 233.0L419.0 233.4L420.0 234.8L421.0 235.1L422.0 236.5L423.0 237.0L424.0 238.0L425.0 238.6L426.0 239.8L427.0 240.2L428.0 241.4L429.0 242.1L430.0 243.1L431.0 243.9L432.0 244.6L433.0 244.9L434.0 246.1L435.0 246.4L436.0 247.6L437.0 248.5L438.0 248.6L439.0 249.3L440.0 250.6L441.0 250.9L442.0 251.9L443.0 252.7L444.0 253.5L445.0 253.9L446.0 254.8L447.0 255.5L448.0 256.1L449.0 256.4L450.0 257.5L451.0 257.8L452.0 258.8L453.0 259.0L454.0 259.8L455.0 260.1L456.0 260.7L457.0 261.9L458.0 262.2L459.0 263.0L460.0 263.5L461.0 264.2L462.0 264.7L463.0 265.0L464.0 265.7L465.0 266.5L466.0 266.8L467.0 267.9L468.0 267.8L469.0 268.8L470.0 269.5L471.0 270.0L472.0 270.1L473.0 270.7L474.0 271.6L475.0 271.9L476.0 272.3L477.0 272.8L478.0 273.7L479.0 273.8L480.0 274.5L481.0 275.5L482.0 275.5L483.0 276.5L484.0 276.4L485.0 277.0L486.0 277.4L487.0 278.4L488.0 278.8L489.0 281.9L490.0 281.9L491.0 281.9L492.0 281.9L493.0 281.9L494.0 281.9L495.0 281.9L496.0 281.9L497.0 281.9L498.0 281.9L499.0 281.9L500.0 281.9L501.0 281.9L502.0 281.9L503.0 281.9L504.0 281.9L505.0 281.9L506.0 281.9L507.0 281.9L508.0 281.9L509.0 281.9L510.0 281.9L511.0 281.9L512.0 281.9L513.0 281.9L514.0 281.9L515.0 281.9L516.0 281.9L517.0 281.9L518.0 281.9L519.0 281.9L520.0 281.9L521.0 281.9L522.0 281.9L523.0 281.9L524.0 281.9L525.0 281.9L526.0 281.9L527.0 281.9L528.0 281.9L529.0 281.9L530.0 281.9L531.0 281.9L532.0 281.9L533.0 281.9L534.0 281.9L535.0 281.9L536.0 281.9L537.0 281.9L538.0 281.9L539.0 281.9L540.0 281.9L541.0 281.9L542.0 281.9L543.0 281.9L544.0 281.9L545.0 281.9L546.0 281.9L547.0 281.9L548.0 281.9L549.0 281.9L550.0 281.9L551.0 281.9L552.0 281.9L553.0 281.9L554.0 281.9L555.0 281.9L556.0 281.9L557.0 281.9L558.0 281.9L559.0 281.9L560.0 281.9L561.0 281.9L562.0 281.9L563.0 281.9L564.0 281.9L565.0 281.9L566.0 281.9" stroke="#2a8744"/></g><path d="M24.6 84.4 V279.6 H566.6 V84.4 Z" fill="none" stroke="#a2a2a2" stroke-width="1.1"/><path d="M567.4 84.4 V280.40000000000003 H25.0" fill="none" stroke="#d4d4d4" stroke-width="0.8"/><path d="M25.0 352.6 H566.0" stroke="#bdbdbd" stroke-width="0.8" stroke-dasharray="1 1"/><path d="M25.0 385.1 H566.0" stroke="#bdbdbd" stroke-width="0.8" stroke-dasharray="1 1"/><path d="M25.0 417.7 H566.0" stroke="#bdbdbd" stroke-width="0.8" stroke-dasharray="1 1"/><path d="M25.0 450.3 H566.0" stroke="#bdbdbd" stroke-width="0.8" stroke-dasharray="1 1"/><path d="M25.0 482.8 H566.0" stroke="#bdbdbd" stroke-width="0.8" stroke-dasharray="1 1"/><path d="M25.0 510.0 h1.4 M566.0 510.0 h-1.4M25.0 504.5 h1.4 M566.0 504.5 h-1.4M25.0 499.1 h1.4 M566.0 499.1 h-1.4M25.0 493.7 h1.4 M566.0 493.7 h-1.4M25.0 488.3 h1.4 M566.0 488.3 h-1.4M25.0 482.8 h2.6 M566.0 482.8 h-2.6M25.0 477.4 h1.4 M566.0 477.4 h-1.4M25.0 472.0 h1.4 M566.0 472.0 h-1.4M25.0 466.5 h1.4 M566.0 466.5 h-1.4M25.0 461.1 h1.4 M566.0 461.1 h-1.4M25.0 455.7 h1.4 M566.0 455.7 h-1.4M25.0 450.3 h2.6 M566.0 450.3 h-2.6M25.0 444.8 h1.4 M566.0 444.8 h-1.4M25.0 439.4 h1.4 M566.0 439.4 h-1.4M25.0 434.0 h1.4 M566.0 434.0 h-1.4M25.0 428.6 h1.4 M566.0 428.6 h-1.4M25.0 423.1 h1.4 M566.0 423.1 h-1.4M25.0 417.7 h2.6 M566.0 417.7 h-2.6M25.0 412.3 h1.4 M566.0 412.3 h-1.4M25.0 406.8 h1.4 M566.0 406.8 h-1.4M25.0 401.4 h1.4 M566.0 401.4 h-1.4M25.0 396.0 h1.4 M566.0 396.0 h-1.4M25.0 390.6 h1.4 M566.0 390.6 h-1.4M25.0 385.1 h2.6 M566.0 385.1 h-2.6M25.0 379.7 h1.4 M566.0 379.7 h-1.4M25.0 374.3 h1.4 M566.0 374.3 h-1.4M25.0 368.9 h1.4 M566.0 368.9 h-1.4M25.0 363.4 h1.4 M566.0 363.4 h-1.4M25.0 358.0 h1.4 M566.0 358.0 h-1.4M25.0 352.6 h2.6 M566.0 352.6 h-2.6M25.0 347.1 h1.4 M566.0 347.1 h-1.4M25.0 341.7 h1.4 M566.0 341.7 h-1.4M25.0 336.3 h1.4 M566.0 336.3 h-1.4M25.0 330.9 h1.4 M566.0 330.9 h-1.4M25.0 325.4 h1.4 M566.0 325.4 h-1.4" stroke="#b8b8b8" stroke-width="0.6"/><rect x="213" y="508.6" width="260" height="6.399999999999977" fill="#ffb469"/><rect x="216.3" y="508.6" width="0.8" height="6.399999999999977" fill="#ffa042"/><rect x="220.2" y="508.6" width="0.8" height="6.399999999999977" fill="#ffa042"/><rect x="224.1" y="508.6" width="0.8" height="6.399999999999977" fill="#ffa042"/><rect x="228.0" y="508.6" width="0.8" height="6.399999999999977" fill="#ffa042"/><rect x="231.9" y="508.6" width="0.8" height="6.399999999999977" fill="#ffa042"/><rect x="235.8" y="508.6" width="0.8" height="6.399999999999977" fill="#ffa042"/><rect x="239.7" y="508.6" width="0.8" height="6.399999999999977" fill="#ffa042"/><rect x="243.6" y="508.6" width="0.8" height="6.399999999999977" fill="#ffa042"/><rect x="247.5" y="508.6" width="0.8" height="6.399999999999977" fill="#ffa042"/><rect x="251.4" y="508.6" width="0.8" height="6.399999999999977" fill="#ffa042"/><rect x="255.3" y="508.6" width="0.8" height="6.399999999999977" fill="#ffa042"/><rect x="259.2" y="508.6" width="0.8" height="6.399999999999977" fill="#ffa042"/><rect x="263.1" y="508.6" width="0.8" height="6.399999999999977" fill="#ffa042"/><rect x="267.0" y="508.6" width="0.8" height="6.399999999999977" fill="#ffa042"/><rect x="270.9" y="508.6" width="0.8" height="6.399999999999977" fill="#ffa042"/><rect x="274.8" y="508.6" width="0.8" height="6.399999999999977" fill="#ffa042"/><rect x="278.7" y="508.6" width="0.8" height="6.399999999999977" fill="#ffa042"/><rect x="282.6" y="508.6" width="0.8" height="6.399999999999977" fill="#ffa042"/><rect x="286.5" y="508.6" width="0.8" height="6.399999999999977" fill="#ffa042"/><rect x="290.4" y="508.6" width="0.8" height="6.399999999999977" fill="#ffa042"/><rect x="294.3" y="508.6" width="0.8" height="6.399999999999977" fill="#ffa042"/><rect x="298.2" y="508.6" width="0.8" height="6.399999999999977" fill="#ffa042"/><rect x="302.1" y="508.6" width="0.8" height="6.399999999999977" fill="#ffa042"/><rect x="306.0" y="508.6" width="0.8" height="6.399999999999977" fill="#ffa042"/><rect x="309.9" y="508.6" width="0.8" height="6.399999999999977" fill="#ffa042"/><rect x="313.8" y="508.6" width="0.8" height="6.399999999999977" fill="#ffa042"/><rect x="317.7" y="508.6" width="0.8" height="6.399999999999977" fill="#ffa042"/><rect x="321.6" y="508.6" width="0.8" height="6.399999999999977" fill="#ffa042"/><rect x="325.5" y="508.6" width="0.8" height="6.399999999999977" fill="#ffa042"/><rect x="329.4" y="508.6" width="0.8" height="6.399999999999977" fill="#ffa042"/><rect x="333.3" y="508.6" width="0.8" height="6.399999999999977" fill="#ffa042"/><rect x="337.2" y="508.6" width="0.8" height="6.399999999999977" fill="#ffa042"/><rect x="341.1" y="508.6" width="0.8" height="6.399999999999977" fill="#ffa042"/><rect x="345.0" y="508.6" width="0.8" height="6.399999999999977" fill="#ffa042"/><rect x="348.9" y="508.6" width="0.8" height="6.399999999999977" fill="#ffa042"/><rect x="352.8" y="508.6" width="0.8" height="6.399999999999977" fill="#ffa042"/><rect x="356.7" y="508.6" width="0.8" height="6.399999999999977" fill="#ffa042"/><rect x="360.6" y="508.6" width="0.8" height="6.399999999999977" fill="#ffa042"/><rect x="364.5" y="508.6" width="0.8" height="6.399999999999977" fill="#ffa042"/><rect x="368.4" y="508.6" width="0.8" height="6.399999999999977" fill="#ffa042"/><rect x="372.3" y="508.6" width="0.8" height="6.399999999999977" fill="#ffa042"/><rect x="376.2" y="508.6" width="0.8" height="6.399999999999977" fill="#ffa042"/><rect x="380.1" y="508.6" width="0.8" height="6.399999999999977" fill="#ffa042"/><rect x="384.0" y="508.6" width="0.8" height="6.399999999999977" fill="#ffa042"/><rect x="387.9" y="508.6" width="0.8" height="6.399999999999977" fill="#ffa042"/><rect x="391.8" y="508.6" width="0.8" height="6.399999999999977" fill="#ffa042"/><rect x="395.7" y="508.6" width="0.8" height="6.399999999999977" fill="#ffa042"/><rect x="399.6" y="508.6" width="0.8" height="6.399999999999977" fill="#ffa042"/><rect x="403.5" y="508.6" width="0.8" height="6.399999999999977" fill="#ffa042"/><rect x="407.4" y="508.6" width="0.8" height="6.399999999999977" fill="#ffa042"/><rect x="411.3" y="508.6" width="0.8" height="6.399999999999977" fill="#ffa042"/><rect x="415.2" y="508.6" width="0.8" height="6.399999999999977" fill="#ffa042"/><rect x="419.1" y="508.6" width="0.8" height="6.399999999999977" fill="#ffa042"/><rect x="423.0" y="508.6" width="0.8" height="6.399999999999977" fill="#ffa042"/><rect x="426.9" y="508.6" width="0.8" height="6.399999999999977" fill="#ffa042"/><rect x="430.8" y="508.6" width="0.8" height="6.399999999999977" fill="#ffa042"/><rect x="434.7" y="508.6" width="0.8" height="6.399999999999977" fill="#ffa042"/><rect x="438.6" y="508.6" width="0.8" height="6.399999999999977" fill="#ffa042"/><rect x="442.5" y="508.6" width="0.8" height="6.399999999999977" fill="#ffa042"/><rect x="446.4" y="508.6" width="0.8" height="6.399999999999977" fill="#ffa042"/><rect x="450.3" y="508.6" width="0.8" height="6.399999999999977" fill="#ffa042"/><rect x="454.2" y="508.6" width="0.8" height="6.399999999999977" fill="#ffa042"/><rect x="458.1" y="508.6" width="0.8" height="6.399999999999977" fill="#ffa042"/><rect x="462.0" y="508.6" width="0.8" height="6.399999999999977" fill="#ffa042"/><rect x="465.9" y="508.6" width="0.8" height="6.399999999999977" fill="#ffa042"/><rect x="469.8" y="508.6" width="0.8" height="6.399999999999977" fill="#ffa042"/><g clip-path="url(#c2)" fill="none" stroke-width="1.25" stroke-dasharray="4.6 1.9"><path d="M25.0 324.8L26.0 324.8L27.0 324.8L28.0 324.9L29.0 324.7L30.0 325.0L31.0 324.9L32.0 324.8L33.0 324.9L34.0 324.9L35.0 324.9L36.0 324.9L37.0 325.1L38.0 325.2L39.0 325.1L40.0 324.9L41.0 324.9L42.0 325.0L43.0 325.0L44.0 325.1L45.0 325.1L46.0 325.0L47.0 325.0L48.0 325.3L49.0 325.4L50.0 325.3L51.0 325.4L52.0 325.3L53.0 325.3L54.0 325.2L55.0 325.3L56.0 325.4L57.0 325.4L58.0 325.4L59.0 325.4L60.0 325.3L61.0 325.5L62.0 325.6L63.0 325.3L64.0 325.3L65.0 325.2L66.0 325.4L67.0 325.4L68.0 325.4L69.0 325.4L70.0 325.5L71.0 325.4L72.0 325.8L73.0 325.4L74.0 325.4L75.0 325.8L76.0 325.6L77.0 325.8L78.0 325.6L79.0 325.5L80.0 325.6L81.0 325.9L82.0 325.6L83.0 325.8L84.0 325.7L85.0 325.9L86.0 325.8L87.0 326.0L88.0 325.8L89.0 326.0L90.0 326.2L91.0 326.0L92.0 326.2L93.0 325.9L94.0 326.2L95.0 326.0L96.0 326.3L97.0 326.2L98.0 326.1L99.0 326.3L100.0 326.1L101.0 326.3L102.0 326.4L103.0 326.2L104.0 326.1L105.0 326.5L106.0 326.3L107.0 326.5L108.0 326.4L109.0 326.3L110.0 326.6L111.0 326.5L112.0 326.5L113.0 326.7L114.0 326.8L115.0 326.6L116.0 326.9L117.0 326.6L118.0 326.9L119.0 326.8L120.0 326.7L121.0 326.8L122.0 326.8L123.0 327.0L124.0 326.9L125.0 327.0L126.0 327.1L127.0 327.0L128.0 326.9L129.0 327.1L130.0 327.3L131.0 327.1L132.0 327.2L133.0 327.4L134.0 327.2L135.0 327.5L136.0 327.3L137.0 327.3L138.0 327.6L139.0 327.7L140.0 327.6L141.0 327.5L142.0 327.5L143.0 327.5L144.0 327.8L145.0 327.9L146.0 327.8L147.0 327.9L148.0 328.1L149.0 328.1L150.0 328.1L151.0 328.3L152.0 328.0L153.0 328.4L154.0 328.3L155.0 328.2L156.0 328.4L157.0 328.3L158.0 328.4L159.0 328.7L160.0 328.7L161.0 328.7L162.0 328.8L163.0 328.9L164.0 328.8L165.0 328.7L166.0 329.1L167.0 328.9L168.0 329.1L169.0 329.0L170.0 329.3L171.0 329.4L172.0 329.2L173.0 329.5L174.0 329.5L175.0 329.7L176.0 329.8L177.0 329.8L178.0 329.7L179.0 329.9L180.0 330.0L181.0 330.0L182.0 330.3L183.0 330.2L184.0 330.3L185.0 330.3L186.0 330.6L187.0 330.8L188.0 330.6L189.0 330.8L190.0 330.9L191.0 330.9L192.0 331.1L193.0 331.3L194.0 331.4L195.0 331.7L196.0 331.7L197.0 331.9L198.0 331.9L199.0 332.0L200.0 332.3L201.0 332.4L202.0 332.5L203.0 332.4L204.0 332.6L205.0 332.9L206.0 332.7L207.0 333.0L208.0 333.4L209.0 333.3L210.0 333.6L211.0 333.7L212.0 334.0L213.0 334.2L214.0 334.1L215.0 334.4L216.0 334.8L217.0 334.8L218.0 335.2L219.0 335.2L220.0 335.5L221.0 335.6L222.0 336.1L223.0 336.2L224.0 336.5L225.0 336.7L226.0 336.8L227.0 337.3L228.0 337.3L229.0 337.9L230.0 338.2L231.0 338.3L232.0 338.7L233.0 339.0L234.0 339.3L235.0 339.9L236.0 340.1L237.0 340.5L238.0 340.7L239.0 341.1L240.0 341.7L241.0 342.1L242.0 342.8L243.0 343.2L244.0 343.8L245.0 344.2L246.0 344.9L247.0 345.3L248.0 345.8L249.0 346.7L250.0 347.4L251.0 347.9L252.0 348.7L253.0 349.6L254.0 350.6L255.0 351.4L256.0 352.2L257.0 353.3L258.0 354.2L259.0 355.3L260.0 356.4L261.0 357.9L262.0 359.0L263.0 360.6L264.0 361.9L265.0 363.6L266.0 365.6L267.0 367.4L268.0 369.3L269.0 371.6L270.0 373.7L271.0 376.1L272.0 378.7L273.0 381.2L274.0 384.1L275.0 387.5L276.0 390.6L277.0 394.3L278.0 397.6L279.0 401.4L280.0 405.3L281.0 409.6L282.0 413.6L283.0 417.6L284.0 421.7L285.0 426.0L286.0 429.9L287.0 434.2L288.0 437.8L289.0 441.7L290.0 445.3L291.0 448.5L292.0 451.8L293.0 454.8L294.0 457.6L295.0 460.2L296.0 462.9L297.0 465.0L298.0 467.3L299.0 469.2L300.0 471.3L301.0 473.3L302.0 474.7L303.0 476.4L304.0 477.7L305.0 479.1L306.0 480.4L307.0 481.8L308.0 482.8L309.0 483.7L310.0 485.0L311.0 485.9L312.0 486.9L313.0 487.7L314.0 488.4L315.0 489.4L316.0 489.9L317.0 490.6L318.0 491.3L319.0 491.9L320.0 492.5L321.0 493.3L322.0 493.7L323.0 494.3L324.0 494.7L325.0 495.2L326.0 495.8L327.0 496.4L328.0 496.5L329.0 497.1L330.0 497.6L331.0 497.8L332.0 498.3L333.0 498.4L334.0 499.0L335.0 499.0L336.0 499.4L337.0 499.6L338.0 499.9L339.0 500.5L340.0 500.6L341.0 500.8L342.0 501.3L343.0 501.3L344.0 501.8L345.0 501.8L346.0 502.3L347.0 502.5L348.0 502.5L349.0 502.9L350.0 503.1L351.0 503.3L352.0 503.2L353.0 503.5L354.0 503.6L355.0 503.8L356.0 504.1L357.0 504.3L358.0 504.3L359.0 504.5L360.0 504.6L361.0 504.8L362.0 504.8L363.0 505.1L364.0 505.3L365.0 505.4L366.0 505.7L367.0 505.7L368.0 505.7L369.0 506.1L370.0 506.0L371.0 506.0L372.0 506.3L373.0 506.4L374.0 506.4L375.0 506.5L376.0 506.5L377.0 506.8L378.0 506.8L379.0 507.1L380.0 506.9L381.0 507.2L382.0 507.1L383.0 507.2L384.0 507.3L385.0 507.6L386.0 507.7L387.0 507.7L388.0 507.9L389.0 508.0L390.0 508.1L391.0 508.1L392.0 508.1L393.0 508.1L394.0 508.4L395.0 508.2L396.0 508.3L397.0 508.7L398.0 508.7L399.0 508.7L400.0 508.8L401.0 508.6L402.0 508.9L403.0 508.9L404.0 508.8L405.0 508.9L406.0 509.1L407.0 509.3L408.0 509.3L409.0 509.0L410.0 509.3L411.0 509.3L412.0 509.3L413.0 509.3L414.0 509.5L415.0 509.5L416.0 509.5L417.0 509.6L418.0 509.9L419.0 509.7L420.0 509.8L421.0 509.9L422.0 510.0L423.0 510.1L424.0 509.9L425.0 510.2L426.0 509.9L427.0 510.1L428.0 510.3L429.0 510.4L430.0 510.2L431.0 510.4L432.0 510.4L433.0 510.2L434.0 510.5L435.0 510.6L436.0 510.3L437.0 510.4L438.0 510.5L439.0 510.8L440.0 510.8L441.0 510.5L442.0 510.7L443.0 510.6L444.0 510.6L445.0 510.7L446.0 511.0L447.0 511.0L448.0 510.8L449.0 511.0L450.0 511.0L451.0 511.0L452.0 511.2L453.0 510.9L454.0 511.0L455.0 511.0L456.0 511.3L457.0 511.3L458.0 511.2L459.0 511.1L460.0 511.4L461.0 511.4L462.0 511.5L463.0 511.5L464.0 511.5L465.0 511.4L466.0 511.6L467.0 511.3L468.0 511.6L469.0 511.4L470.0 511.5L471.0 511.7L472.0 511.4L473.0 511.6L474.0 511.8L475.0 511.6L476.0 511.9L477.0 511.8L478.0 511.6L479.0 511.8L480.0 511.7L481.0 511.9L482.0 511.9L483.0 511.9L484.0 511.7L485.0 512.0L486.0 511.8L487.0 512.0L488.0 512.1L489.0 512.0L490.0 511.8L491.0 512.0L492.0 511.9L493.0 511.9L494.0 512.0L495.0 512.0L496.0 512.2L497.0 512.2L498.0 512.1L499.0 512.4L500.0 512.0L501.0 512.1L502.0 512.2L503.0 512.3L504.0 512.3L505.0 512.2L506.0 512.3L507.0 512.3L508.0 512.3L509.0 512.2L510.0 512.5L511.0 512.2L512.0 512.4L513.0 512.3L514.0 512.4L515.0 512.5L516.0 512.6L517.0 512.6L518.0 512.6L519.0 512.4L520.0 512.3L521.0 512.4L522.0 512.7L523.0 512.5L524.0 512.6L525.0 512.6L526.0 512.6L527.0 512.5L528.0 512.6L529.0 512.7L530.0 512.7L531.0 512.5L532.0 512.6L533.0 512.5L534.0 512.7L535.0 512.8L536.0 512.9L537.0 512.7L538.0 512.8L539.0 512.9L540.0 512.8L541.0 512.9L542.0 512.7L543.0 512.9L544.0 513.0L545.0 512.8L546.0 513.0L547.0 512.8L548.0 512.8L549.0 512.9L550.0 513.0L551.0 512.9L552.0 512.9L553.0 513.2L554.0 513.1L555.0 512.9L556.0 512.9L557.0 513.1L558.0 513.2L559.0 513.1L560.0 513.1L561.0 513.3L562.0 513.2L563.0 513.0L564.0 513.1L565.0 513.1L566.0 513.2" stroke="#1414ff" stroke-dashoffset="0.4" stroke-width="1.35"/><path d="M25.0 324.8L26.0 325.0L27.0 325.1L28.0 324.9L29.0 325.0L30.0 324.9L31.0 325.1L32.0 325.0L33.0 325.2L34.0 325.0L35.0 324.9L36.0 324.9L37.0 325.2L38.0 324.9L39.0 325.2L40.0 325.1L41.0 325.1L42.0 325.1L43.0 325.3L44.0 325.2L45.0 325.1L46.0 325.2L47.0 325.2L48.0 325.2L49.0 325.3L50.0 325.2L51.0 325.2L52.0 325.1L53.0 325.2L54.0 325.1L55.0 325.2L56.0 325.2L57.0 325.3L58.0 325.5L59.0 325.3L60.0 325.3L61.0 325.4L62.0 325.4L63.0 325.2L64.0 325.5L65.0 325.4L66.0 325.6L67.0 325.5L68.0 325.4L69.0 325.7L70.0 325.3L71.0 325.4L72.0 325.4L73.0 325.4L74.0 325.4L75.0 325.7L76.0 325.4L77.0 325.6L78.0 325.5L79.0 325.5L80.0 325.5L81.0 325.6L82.0 325.6L83.0 325.8L84.0 325.9L85.0 325.6L86.0 325.7L87.0 325.8L88.0 326.0L89.0 325.6L90.0 325.9L91.0 325.8L92.0 325.8L93.0 325.9L94.0 325.9L95.0 325.8L96.0 326.0L97.0 326.0L98.0 325.8L99.0 325.8L100.0 325.9L101.0 326.1L102.0 326.2L103.0 325.9L104.0 326.1L105.0 325.9L106.0 325.9L107.0 326.2L108.0 326.2L109.0 326.1L110.0 326.2L111.0 326.2L112.0 326.2L113.0 326.2L114.0 326.4L115.0 326.1L116.0 326.3L117.0 326.2L118.0 326.3L119.0 326.2L120.0 326.3L121.0 326.5L122.0 326.3L123.0 326.4L124.0 326.5L125.0 326.5L126.0 326.4L127.0 326.5L128.0 326.5L129.0 326.7L130.0 326.8L131.0 326.7L132.0 326.8L133.0 326.7L134.0 326.9L135.0 326.9L136.0 327.0L137.0 326.7L138.0 326.9L139.0 326.9L140.0 327.0L141.0 327.1L142.0 326.9L143.0 326.8L144.0 327.0L145.0 326.9L146.0 327.3L147.0 327.3L148.0 327.1L149.0 327.3L150.0 327.3L151.0 327.4L152.0 327.3L153.0 327.2L154.0 327.5L155.0 327.3L156.0 327.3L157.0 327.6L158.0 327.5L159.0 327.7L160.0 327.4L161.0 327.8L162.0 327.8L163.0 327.7L164.0 327.5L165.0 327.8L166.0 327.7L167.0 327.7L168.0 327.8L169.0 328.1L170.0 327.9L171.0 328.0L172.0 328.2L173.0 328.1L174.0 328.1L175.0 328.1L176.0 328.2L177.0 328.3L178.0 328.4L179.0 328.4L180.0 328.2L181.0 328.6L182.0 328.6L183.0 328.5L184.0 328.4L185.0 328.6L186.0 328.8L187.0 328.6L188.0 328.7L189.0 328.9L190.0 329.0L191.0 329.1L192.0 329.0L193.0 329.1L194.0 329.0L195.0 329.0L196.0 329.3L197.0 329.2L198.0 329.5L199.0 329.3L200.0 329.4L201.0 329.7L202.0 329.4L203.0 329.8L204.0 329.7L205.0 329.6L206.0 329.8L207.0 329.8L208.0 329.9L209.0 330.1L210.0 330.2L211.0 330.1L212.0 330.5L213.0 330.2L214.0 330.3L215.0 330.5L216.0 330.4L217.0 330.9L218.0 330.7L219.0 330.7L220.0 331.0L221.0 331.0L222.0 331.0L223.0 331.2L224.0 331.2L225.0 331.3L226.0 331.5L227.0 331.5L228.0 331.7L229.0 331.8L230.0 332.1L231.0 332.1L232.0 332.2L233.0 332.2L234.0 332.4L235.0 332.4L236.0 332.8L237.0 332.9L238.0 333.0L239.0 333.0L240.0 333.2L241.0 333.2L242.0 333.5L243.0 333.7L244.0 333.6L245.0 333.7L246.0 334.2L247.0 334.2L248.0 334.4L249.0 334.6L250.0 334.8L251.0 334.7L252.0 334.9L253.0 335.1L254.0 335.5L255.0 335.7L256.0 335.6L257.0 335.8L258.0 336.3L259.0 336.5L260.0 336.4L261.0 336.8L262.0 336.9L263.0 337.3L264.0 337.3L265.0 337.7L266.0 337.9L267.0 338.1L268.0 338.8L269.0 338.7L270.0 339.3L271.0 339.6L272.0 339.7L273.0 340.1L274.0 340.4L275.0 340.7L276.0 341.2L277.0 341.4L278.0 342.0L279.0 342.3L280.0 342.6L281.0 343.4L282.0 343.6L283.0 344.2L284.0 344.7L285.0 345.2L286.0 345.7L287.0 346.2L288.0 346.7L289.0 347.5L290.0 347.8L291.0 348.7L292.0 349.5L293.0 350.1L294.0 350.8L295.0 351.7L296.0 352.6L297.0 353.3L298.0 354.3L299.0 355.4L300.0 356.3L301.0 357.3L302.0 358.7L303.0 359.7L304.0 361.1L305.0 362.2L306.0 363.9L307.0 365.4L308.0 367.1L309.0 368.6L310.0 370.3L311.0 372.3L312.0 374.4L313.0 376.7L314.0 378.9L315.0 381.5L316.0 384.1L317.0 386.5L318.0 389.7L319.0 392.3L320.0 395.5L321.0 398.7L322.0 402.4L323.0 405.9L324.0 409.2L325.0 413.0L326.0 416.8L327.0 420.4L328.0 423.9L329.0 427.6L330.0 431.4L331.0 434.8L332.0 438.1L333.0 441.4L334.0 444.4L335.0 447.6L336.0 450.6L337.0 453.1L338.0 455.8L339.0 458.4L340.0 460.5L341.0 462.8L342.0 465.1L343.0 466.8L344.0 468.8L345.0 470.7L346.0 472.2L347.0 473.8L348.0 475.0L349.0 476.6L350.0 477.9L351.0 479.1L352.0 480.3L353.0 481.2L354.0 482.5L355.0 483.4L356.0 484.5L357.0 485.2L358.0 486.3L359.0 486.9L360.0 487.8L361.0 488.5L362.0 489.1L363.0 489.8L364.0 490.4L365.0 491.1L366.0 491.6L367.0 492.1L368.0 492.9L369.0 493.4L370.0 493.8L371.0 494.3L372.0 494.8L373.0 495.2L374.0 495.5L375.0 496.0L376.0 496.5L377.0 496.6L378.0 497.1L379.0 497.3L380.0 497.8L381.0 497.9L382.0 498.4L383.0 498.6L384.0 499.0L385.0 499.5L386.0 499.5L387.0 499.8L388.0 500.3L389.0 500.3L390.0 500.5L391.0 500.8L392.0 501.2L393.0 501.2L394.0 501.5L395.0 501.6L396.0 501.9L397.0 502.1L398.0 502.4L399.0 502.5L400.0 502.8L401.0 503.0L402.0 503.0L403.0 503.4L404.0 503.6L405.0 503.8L406.0 503.9L407.0 504.0L408.0 504.1L409.0 504.2L410.0 504.5L411.0 504.4L412.0 504.6L413.0 504.6L414.0 504.9L415.0 505.2L416.0 505.2L417.0 505.1L418.0 505.6L419.0 505.4L420.0 505.5L421.0 505.8L422.0 505.7L423.0 506.1L424.0 506.2L425.0 506.4L426.0 506.4L427.0 506.4L428.0 506.4L429.0 506.5L430.0 506.8L431.0 506.9L432.0 506.8L433.0 507.0L434.0 507.1L435.0 507.0L436.0 507.3L437.0 507.2L438.0 507.3L439.0 507.4L440.0 507.7L441.0 507.5L442.0 507.6L443.0 507.8L444.0 507.9L445.0 507.8L446.0 508.0L447.0 508.1L448.0 508.2L449.0 508.2L450.0 508.2L451.0 508.4L452.0 508.3L453.0 508.6L454.0 508.5L455.0 508.8L456.0 508.6L457.0 508.8L458.0 509.0L459.0 508.8L460.0 509.0L461.0 509.0L462.0 508.8L463.0 509.1L464.0 509.1L465.0 509.0L466.0 509.3L467.0 509.4L468.0 509.5L469.0 509.2L470.0 509.4L471.0 509.5L472.0 509.5L473.0 509.4L474.0 509.6L475.0 509.6L476.0 509.7L477.0 509.7L478.0 509.8L479.0 509.8L480.0 510.0L481.0 509.8L482.0 510.0L483.0 510.1L484.0 510.2L485.0 510.2L486.0 510.3L487.0 510.2L488.0 510.3L489.0 510.4L490.0 510.2L491.0 510.4L492.0 510.4L493.0 510.4L494.0 510.3L495.0 510.6L496.0 510.4L497.0 510.5L498.0 510.6L499.0 510.7L500.0 510.8L501.0 510.8L502.0 510.8L503.0 510.7L504.0 510.8L505.0 510.9L506.0 510.8L507.0 511.0L508.0 510.8L509.0 510.9L510.0 511.1L511.0 510.9L512.0 511.0L513.0 511.2L514.0 511.2L515.0 511.1L516.0 511.2L517.0 511.2L518.0 511.0L519.0 511.4L520.0 511.4L521.0 511.4L522.0 511.2L523.0 511.3L524.0 511.5L525.0 511.5L526.0 511.5L527.0 511.2L528.0 511.5L529.0 511.4L530.0 511.3L531.0 511.5L532.0 511.4L533.0 511.5L534.0 511.6L535.0 511.6L536.0 511.6L537.0 511.6L538.0 511.7L539.0 511.6L540.0 511.6L541.0 511.7L542.0 511.6L543.0 511.8L544.0 512.0L545.0 511.7L546.0 512.0L547.0 511.8L548.0 511.9L549.0 512.0L550.0 511.9L551.0 511.9L552.0 512.1L553.0 511.8L554.0 512.0L555.0 511.9L556.0 512.0L557.0 512.1L558.0 512.2L559.0 512.0L560.0 512.3L561.0 512.3L562.0 512.3L563.0 512.2L564.0 512.3L565.0 512.0L566.0 512.3" stroke="#a31818" stroke-dashoffset="-0.4"/><path d="M25.0 325.0L26.0 325.0L27.0 325.2L28.0 325.0L29.0 325.3L30.0 325.0L31.0 325.0L32.0 325.1L33.0 325.0L34.0 325.0L35.0 325.2L36.0 325.1L37.0 325.0L38.0 325.3L39.0 325.3L40.0 325.3L41.0 325.3L42.0 325.1L43.0 325.4L44.0 325.4L45.0 325.4L46.0 325.3L47.0 325.2L48.0 325.3L49.0 325.3L50.0 325.4L51.0 325.2L52.0 325.2L53.0 325.4L54.0 325.2L55.0 325.2L56.0 325.4L57.0 325.4L58.0 325.5L59.0 325.6L60.0 325.5L61.0 325.5L62.0 325.4L63.0 325.5L64.0 325.4L65.0 325.7L66.0 325.5L67.0 325.4L68.0 325.5L69.0 325.7L70.0 325.4L71.0 325.8L72.0 325.7L73.0 325.6L74.0 325.5L75.0 325.5L76.0 325.6L77.0 325.8L78.0 325.7L79.0 325.7L80.0 325.7L81.0 325.7L82.0 325.6L83.0 325.7L84.0 325.9L85.0 325.6L86.0 326.0L87.0 325.6L88.0 325.8L89.0 325.8L90.0 325.9L91.0 325.8L92.0 325.9L93.0 325.7L94.0 326.1L95.0 326.1L96.0 326.1L97.0 326.1L98.0 325.9L99.0 326.1L100.0 326.1L101.0 326.2L102.0 326.1L103.0 326.2L104.0 326.0L105.0 325.9L106.0 326.0L107.0 326.4L108.0 326.1L109.0 326.1L110.0 326.1L111.0 326.4L112.0 326.4L113.0 326.3L114.0 326.1L115.0 326.5L116.0 326.2L117.0 326.5L118.0 326.4L119.0 326.4L120.0 326.2L121.0 326.5L122.0 326.6L123.0 326.5L124.0 326.7L125.0 326.4L126.0 326.5L127.0 326.6L128.0 326.5L129.0 326.8L130.0 326.7L131.0 326.5L132.0 326.8L133.0 326.6L134.0 326.7L135.0 326.9L136.0 326.8L137.0 326.8L138.0 327.0L139.0 326.8L140.0 327.1L141.0 326.8L142.0 326.8L143.0 327.2L144.0 327.1L145.0 327.1L146.0 327.2L147.0 327.0L148.0 327.3L149.0 327.1L150.0 327.4L151.0 327.2L152.0 327.4L153.0 327.5L154.0 327.5L155.0 327.2L156.0 327.4L157.0 327.6L158.0 327.4L159.0 327.4L160.0 327.5L161.0 327.4L162.0 327.4L163.0 327.7L164.0 327.5L165.0 327.7L166.0 327.7L167.0 327.9L168.0 327.8L169.0 327.8L170.0 327.9L171.0 327.8L172.0 328.0L173.0 327.9L174.0 328.0L175.0 328.2L176.0 328.3L177.0 328.3L178.0 328.3L179.0 328.1L180.0 328.3L181.0 328.3L182.0 328.3L183.0 328.4L184.0 328.5L185.0 328.3L186.0 328.6L187.0 328.4L188.0 328.8L189.0 328.9L190.0 328.8L191.0 328.9L192.0 329.1L193.0 329.1L194.0 328.9L195.0 329.1L196.0 329.1L197.0 329.1L198.0 329.2L199.0 329.0L200.0 329.2L201.0 329.2L202.0 329.6L203.0 329.6L204.0 329.4L205.0 329.6L206.0 329.8L207.0 329.8L208.0 329.8L209.0 329.8L210.0 329.9L211.0 329.9L212.0 329.9L213.0 330.0L214.0 330.1L215.0 330.2L216.0 330.3L217.0 330.3L218.0 330.7L219.0 330.5L220.0 330.6L221.0 330.9L222.0 330.7L223.0 330.7L224.0 331.0L225.0 331.0L226.0 331.3L227.0 331.2L228.0 331.3L229.0 331.4L230.0 331.6L231.0 331.5L232.0 331.5L233.0 331.9L234.0 331.8L235.0 332.2L236.0 332.2L237.0 332.2L238.0 332.2L239.0 332.3L240.0 332.4L241.0 332.7L242.0 332.8L243.0 333.0L244.0 333.0L245.0 333.3L246.0 333.4L247.0 333.5L248.0 333.6L249.0 333.9L250.0 333.8L251.0 333.8L252.0 334.3L253.0 334.1L254.0 334.4L255.0 334.5L256.0 334.9L257.0 335.0L258.0 335.1L259.0 335.5L260.0 335.6L261.0 335.7L262.0 335.8L263.0 335.9L264.0 336.4L265.0 336.5L266.0 336.8L267.0 336.8L268.0 337.2L269.0 337.1L270.0 337.4L271.0 337.9L272.0 338.1L273.0 338.1L274.0 338.5L275.0 338.7L276.0 339.1L277.0 339.5L278.0 339.7L279.0 339.9L280.0 340.1L281.0 340.6L282.0 341.1L283.0 341.4L284.0 341.7L285.0 342.1L286.0 342.4L287.0 342.7L288.0 343.2L289.0 343.6L290.0 344.0L291.0 344.6L292.0 345.1L293.0 345.6L294.0 346.1L295.0 346.8L296.0 347.3L297.0 348.1L298.0 348.6L299.0 349.1L300.0 349.9L301.0 350.7L302.0 351.2L303.0 352.2L304.0 353.2L305.0 353.9L306.0 354.8L307.0 355.9L308.0 356.5L309.0 357.8L310.0 358.9L311.0 360.0L312.0 361.3L313.0 362.5L314.0 364.2L315.0 365.4L316.0 367.1L317.0 368.6L318.0 370.7L319.0 372.3L320.0 374.4L321.0 376.3L322.0 378.6L323.0 380.9L324.0 383.2L325.0 386.2L326.0 388.8L327.0 391.4L328.0 394.5L329.0 397.5L330.0 400.8L331.0 404.2L332.0 407.4L333.0 411.1L334.0 414.5L335.0 418.1L336.0 421.8L337.0 425.0L338.0 428.7L339.0 432.2L340.0 435.4L341.0 438.6L342.0 442.0L343.0 444.9L344.0 447.6L345.0 450.8L346.0 453.1L347.0 455.9L348.0 458.1L349.0 460.4L350.0 462.6L351.0 464.5L352.0 466.6L353.0 468.6L354.0 470.0L355.0 471.7L356.0 473.4L357.0 474.5L358.0 476.2L359.0 477.5L360.0 478.6L361.0 479.5L362.0 480.7L363.0 481.7L364.0 482.8L365.0 483.7L366.0 484.8L367.0 485.7L368.0 486.2L369.0 487.2L370.0 487.8L371.0 488.6L372.0 489.2L373.0 489.8L374.0 490.5L375.0 491.1L376.0 491.6L377.0 492.1L378.0 492.6L379.0 493.1L380.0 493.7L381.0 494.2L382.0 494.7L383.0 495.1L384.0 495.5L385.0 495.7L386.0 496.2L387.0 496.4L388.0 497.1L389.0 497.5L390.0 497.7L391.0 497.9L392.0 498.2L393.0 498.6L394.0 499.0L395.0 499.1L396.0 499.4L397.0 499.5L398.0 499.8L399.0 500.2L400.0 500.6L401.0 500.6L402.0 500.9L403.0 501.1L404.0 501.2L405.0 501.5L406.0 501.8L407.0 501.9L408.0 502.1L409.0 502.4L410.0 502.6L411.0 502.8L412.0 503.0L413.0 503.2L414.0 503.3L415.0 503.4L416.0 503.7L417.0 503.7L418.0 503.9L419.0 503.9L420.0 504.2L421.0 504.3L422.0 504.6L423.0 504.4L424.0 504.6L425.0 505.0L426.0 505.1L427.0 505.2L428.0 505.1L429.0 505.5L430.0 505.5L431.0 505.7L432.0 505.8L433.0 505.9L434.0 505.9L435.0 506.1L436.0 506.0L437.0 506.3L438.0 506.5L439.0 506.5L440.0 506.6L441.0 506.7L442.0 506.8L443.0 506.6L444.0 507.0L445.0 507.1L446.0 506.9L447.0 507.2L448.0 507.1L449.0 507.2L450.0 507.3L451.0 507.5L452.0 507.7L453.0 507.8L454.0 507.8L455.0 507.7L456.0 507.8L457.0 507.7L458.0 508.0L459.0 508.0L460.0 508.1L461.0 508.1L462.0 508.3L463.0 508.4L464.0 508.3L465.0 508.4L466.0 508.6L467.0 508.4L468.0 508.7L469.0 508.5L470.0 508.7L471.0 508.8L472.0 508.8L473.0 508.9L474.0 509.1L475.0 508.9L476.0 509.2L477.0 509.2L478.0 509.1L479.0 509.1L480.0 509.4L481.0 509.3L482.0 509.4L483.0 509.6L484.0 509.3L485.0 509.4L486.0 509.8L487.0 509.5L488.0 509.7L489.0 509.6L490.0 509.6L491.0 509.9L492.0 509.9L493.0 509.8L494.0 509.7L495.0 510.1L496.0 509.9L497.0 510.1L498.0 510.0L499.0 510.3L500.0 510.0L501.0 510.1L502.0 510.1L503.0 510.3L504.0 510.4L505.0 510.2L506.0 510.4L507.0 510.6L508.0 510.4L509.0 510.6L510.0 510.6L511.0 510.5L512.0 510.7L513.0 510.7L514.0 510.6L515.0 510.6L516.0 510.6L517.0 510.9L518.0 510.8L519.0 510.8L520.0 510.8L521.0 510.7L522.0 510.8L523.0 510.7L524.0 511.1L525.0 511.2L526.0 511.0L527.0 511.1L528.0 511.1L529.0 511.3L530.0 511.3L531.0 511.0L532.0 511.3L533.0 511.2L534.0 511.2L535.0 511.4L536.0 511.1L537.0 511.4L538.0 511.5L539.0 511.2L540.0 511.3L541.0 511.6L542.0 511.6L543.0 511.5L544.0 511.7L545.0 511.3L546.0 511.5L547.0 511.7L548.0 511.4L549.0 511.5L550.0 511.5L551.0 511.7L552.0 511.8L553.0 511.7L554.0 511.8L555.0 511.5L556.0 511.7L557.0 511.9L558.0 512.0L559.0 511.7L560.0 511.7L561.0 511.7L562.0 512.0L563.0 511.7L564.0 511.8L565.0 511.8L566.0 511.9" stroke="#3d86b8" stroke-dashoffset="3.0"/><path d="M25.0 325.1L26.0 325.0L27.0 325.1L28.0 325.0L29.0 325.1L30.0 324.9L31.0 325.1L32.0 325.0L33.0 325.0L34.0 324.9L35.0 325.2L36.0 325.0L37.0 325.2L38.0 325.1L39.0 324.9L40.0 325.3L41.0 325.2L42.0 325.2L43.0 325.0L44.0 325.3L45.0 325.1L46.0 325.3L47.0 325.3L48.0 325.0L49.0 325.1L50.0 325.4L51.0 325.3L52.0 325.1L53.0 325.2L54.0 325.4L55.0 325.1L56.0 325.1L57.0 325.4L58.0 325.2L59.0 325.4L60.0 325.3L61.0 325.3L62.0 325.4L63.0 325.4L64.0 325.2L65.0 325.4L66.0 325.6L67.0 325.6L68.0 325.3L69.0 325.4L70.0 325.3L71.0 325.7L72.0 325.4L73.0 325.6L74.0 325.5L75.0 325.7L76.0 325.4L77.0 325.5L78.0 325.6L79.0 325.5L80.0 325.5L81.0 325.7L82.0 325.4L83.0 325.8L84.0 325.8L85.0 325.8L86.0 325.7L87.0 325.6L88.0 325.7L89.0 325.6L90.0 325.6L91.0 325.8L92.0 325.6L93.0 325.6L94.0 325.9L95.0 326.0L96.0 325.9L97.0 325.7L98.0 325.7L99.0 325.7L100.0 325.9L101.0 326.0L102.0 325.9L103.0 325.8L104.0 326.1L105.0 326.1L106.0 325.9L107.0 326.2L108.0 326.2L109.0 326.0L110.0 326.1L111.0 325.9L112.0 326.0L113.0 326.0L114.0 326.3L115.0 326.3L116.0 326.1L117.0 326.3L118.0 326.1L119.0 326.1L120.0 326.2L121.0 326.4L122.0 326.5L123.0 326.3L124.0 326.3L125.0 326.4L126.0 326.4L127.0 326.5L128.0 326.4L129.0 326.4L130.0 326.4L131.0 326.5L132.0 326.4L133.0 326.4L134.0 326.5L135.0 326.5L136.0 326.4L137.0 326.7L138.0 326.7L139.0 326.6L140.0 326.9L141.0 326.7L142.0 326.8L143.0 326.9L144.0 326.9L145.0 327.0L146.0 326.7L147.0 326.7L148.0 326.8L149.0 326.8L150.0 326.9L151.0 327.0L152.0 327.2L153.0 327.2L154.0 327.2L155.0 327.2L156.0 327.2L157.0 327.1L158.0 327.1L159.0 327.2L160.0 327.1L161.0 327.4L162.0 327.3L163.0 327.6L164.0 327.4L165.0 327.6L166.0 327.4L167.0 327.4L168.0 327.5L169.0 327.6L170.0 327.8L171.0 327.5L172.0 327.5L173.0 327.6L174.0 327.9L175.0 327.6L176.0 328.0L177.0 327.8L178.0 328.1L179.0 327.9L180.0 328.2L181.0 328.0L182.0 328.0L183.0 327.9L184.0 328.1L185.0 328.2L186.0 328.4L187.0 328.3L188.0 328.5L189.0 328.4L190.0 328.5L191.0 328.5L192.0 328.4L193.0 328.6L194.0 328.7L195.0 328.7L196.0 328.6L197.0 328.7L198.0 328.8L199.0 329.1L200.0 328.9L201.0 328.9L202.0 329.1L203.0 329.2L204.0 329.3L205.0 329.1L206.0 329.3L207.0 329.2L208.0 329.3L209.0 329.4L210.0 329.4L211.0 329.4L212.0 329.8L213.0 329.6L214.0 329.9L215.0 329.7L216.0 329.8L217.0 329.9L218.0 330.2L219.0 330.0L220.0 330.1L221.0 330.3L222.0 330.3L223.0 330.6L224.0 330.4L225.0 330.4L226.0 330.7L227.0 330.7L228.0 330.8L229.0 330.8L230.0 331.2L231.0 331.2L232.0 331.1L233.0 331.2L234.0 331.2L235.0 331.6L236.0 331.4L237.0 331.6L238.0 331.6L239.0 331.8L240.0 332.0L241.0 332.0L242.0 332.2L243.0 332.3L244.0 332.3L245.0 332.7L246.0 332.6L247.0 332.8L248.0 333.0L249.0 332.9L250.0 332.9L251.0 333.1L252.0 333.2L253.0 333.4L254.0 333.8L255.0 333.9L256.0 333.8L257.0 334.1L258.0 334.2L259.0 334.3L260.0 334.5L261.0 334.5L262.0 335.1L263.0 335.1L264.0 335.3L265.0 335.6L266.0 335.6L267.0 335.8L268.0 336.1L269.0 336.2L270.0 336.4L271.0 336.7L272.0 336.7L273.0 337.1L274.0 337.2L275.0 337.6L276.0 337.7L277.0 338.1L278.0 338.3L279.0 338.7L280.0 338.8L281.0 339.0L282.0 339.5L283.0 339.7L284.0 340.2L285.0 340.4L286.0 340.5L287.0 341.1L288.0 341.3L289.0 342.0L290.0 342.2L291.0 342.6L292.0 343.0L293.0 343.3L294.0 343.8L295.0 344.3L296.0 344.7L297.0 345.6L298.0 345.8L299.0 346.5L300.0 346.9L301.0 347.8L302.0 348.1L303.0 349.1L304.0 349.5L305.0 350.2L306.0 351.0L307.0 351.8L308.0 352.5L309.0 353.7L310.0 354.3L311.0 355.3L312.0 356.2L313.0 357.3L314.0 358.6L315.0 359.8L316.0 360.9L317.0 362.4L318.0 363.7L319.0 365.5L320.0 367.0L321.0 368.6L322.0 370.4L323.0 372.0L324.0 374.2L325.0 376.4L326.0 378.6L327.0 380.9L328.0 383.4L329.0 386.1L330.0 388.7L331.0 391.4L332.0 394.6L333.0 397.6L334.0 401.1L335.0 404.2L336.0 407.9L337.0 411.3L338.0 414.9L339.0 418.3L340.0 422.0L341.0 425.6L342.0 429.3L343.0 432.7L344.0 436.1L345.0 439.5L346.0 442.5L347.0 445.6L348.0 448.5L349.0 451.2L350.0 453.9L351.0 456.4L352.0 458.7L353.0 461.3L354.0 463.2L355.0 465.4L356.0 467.1L357.0 468.9L358.0 470.5L359.0 472.3L360.0 473.7L361.0 475.2L362.0 476.7L363.0 478.0L364.0 478.9L365.0 480.3L366.0 481.5L367.0 482.5L368.0 483.4L369.0 484.3L370.0 485.1L371.0 485.8L372.0 486.6L373.0 487.6L374.0 488.2L375.0 488.9L376.0 489.7L377.0 490.2L378.0 490.8L379.0 491.3L380.0 492.2L381.0 492.5L382.0 493.1L383.0 493.6L384.0 493.9L385.0 494.4L386.0 494.9L387.0 495.3L388.0 495.8L389.0 496.0L390.0 496.5L391.0 497.0L392.0 497.1L393.0 497.5L394.0 498.0L395.0 498.3L396.0 498.5L397.0 498.7L398.0 499.2L399.0 499.5L400.0 499.5L401.0 499.8L402.0 500.3L403.0 500.4L404.0 500.8L405.0 500.7L406.0 501.3L407.0 501.4L408.0 501.5L409.0 501.8L410.0 502.0L411.0 502.1L412.0 502.6L413.0 502.4L414.0 502.7L415.0 503.1L416.0 503.2L417.0 503.1L418.0 503.6L419.0 503.4L420.0 503.7L421.0 504.0L422.0 503.9L423.0 504.1L424.0 504.3L425.0 504.5L426.0 504.6L427.0 504.7L428.0 504.9L429.0 505.0L430.0 505.2L431.0 505.1L432.0 505.2L433.0 505.6L434.0 505.7L435.0 505.8L436.0 505.9L437.0 505.8L438.0 505.9L439.0 506.3L440.0 506.3L441.0 506.3L442.0 506.6L443.0 506.4L444.0 506.8L445.0 506.8L446.0 506.7L447.0 507.0L448.0 507.0L449.0 507.0L450.0 507.0L451.0 507.1L452.0 507.3L453.0 507.4L454.0 507.7L455.0 507.5L456.0 507.7L457.0 507.9L458.0 507.9L459.0 507.9L460.0 508.1L461.0 508.1L462.0 508.2L463.0 508.2L464.0 508.1L465.0 508.3L466.0 508.4L467.0 508.5L468.0 508.4L469.0 508.3L470.0 508.6L471.0 508.8L472.0 508.9L473.0 508.8L474.0 508.8L475.0 508.8L476.0 508.8L477.0 509.1L478.0 508.9L479.0 509.1L480.0 509.1L481.0 509.2L482.0 509.5L483.0 509.1L484.0 509.5L485.0 509.5L486.0 509.3L487.0 509.4L488.0 509.5L489.0 509.5L490.0 509.6L491.0 509.8L492.0 509.9L493.0 509.8L494.0 509.8L495.0 509.9L496.0 509.8L497.0 510.0L498.0 509.9L499.0 510.0L500.0 510.0L501.0 510.1L502.0 510.2L503.0 510.2L504.0 510.2L505.0 510.2L506.0 510.3L507.0 510.3L508.0 510.2L509.0 510.5L510.0 510.5L511.0 510.4L512.0 510.7L513.0 510.6L514.0 510.7L515.0 510.6L516.0 510.8L517.0 510.6L518.0 510.7L519.0 510.8L520.0 510.7L521.0 510.8L522.0 511.0L523.0 510.7L524.0 511.0L525.0 510.8L526.0 511.0L527.0 511.1L528.0 511.0L529.0 511.2L530.0 511.2L531.0 510.9L532.0 511.0L533.0 511.2L534.0 511.3L535.0 511.2L536.0 511.1L537.0 511.1L538.0 511.2L539.0 511.3L540.0 511.4L541.0 511.3L542.0 511.4L543.0 511.5L544.0 511.4L545.0 511.6L546.0 511.4L547.0 511.6L548.0 511.4L549.0 511.7L550.0 511.6L551.0 511.5L552.0 511.8L553.0 511.6L554.0 511.8L555.0 511.7L556.0 511.5L557.0 511.7L558.0 511.6L559.0 511.6L560.0 511.6L561.0 511.8L562.0 511.8L563.0 511.9L564.0 511.8L565.0 511.7L566.0 512.1" stroke="#9fe8b4" stroke-dashoffset="2.6"/><path d="M25.0 325.1L26.0 325.1L27.0 325.0L28.0 324.9L29.0 325.2L30.0 324.8L31.0 325.0L32.0 324.9L33.0 325.0L34.0 325.2L35.0 325.2L36.0 325.1L37.0 324.9L38.0 325.1L39.0 325.3L40.0 325.3L41.0 324.9L42.0 325.0L43.0 325.1L44.0 325.0L45.0 325.1L46.0 325.2L47.0 325.1L48.0 325.3L49.0 325.4L50.0 325.1L51.0 325.2L52.0 325.3L53.0 325.1L54.0 325.3L55.0 325.3L56.0 325.4L57.0 325.3L58.0 325.5L59.0 325.4L60.0 325.2L61.0 325.4L62.0 325.3L63.0 325.4L64.0 325.4L65.0 325.4L66.0 325.4L67.0 325.4L68.0 325.6L69.0 325.3L70.0 325.4L71.0 325.4L72.0 325.3L73.0 325.3L74.0 325.5L75.0 325.7L76.0 325.6L77.0 325.4L78.0 325.4L79.0 325.5L80.0 325.8L81.0 325.5L82.0 325.8L83.0 325.7L84.0 325.5L85.0 325.8L86.0 325.7L87.0 325.5L88.0 325.9L89.0 325.8L90.0 325.6L91.0 325.7L92.0 325.7L93.0 325.7L94.0 325.8L95.0 326.0L96.0 325.9L97.0 325.7L98.0 326.1L99.0 325.9L100.0 325.8L101.0 326.1L102.0 326.1L103.0 326.1L104.0 326.2L105.0 326.0L106.0 325.8L107.0 326.2L108.0 326.1L109.0 326.3L110.0 326.3L111.0 326.2L112.0 326.0L113.0 326.3L114.0 326.0L115.0 326.1L116.0 326.2L117.0 326.1L118.0 326.2L119.0 326.3L120.0 326.1L121.0 326.4L122.0 326.2L123.0 326.2L124.0 326.5L125.0 326.3L126.0 326.2L127.0 326.5L128.0 326.5L129.0 326.5L130.0 326.7L131.0 326.4L132.0 326.6L133.0 326.7L134.0 326.5L135.0 326.7L136.0 326.6L137.0 326.8L138.0 326.5L139.0 326.6L140.0 326.8L141.0 326.6L142.0 326.8L143.0 326.7L144.0 326.9L145.0 326.9L146.0 327.0L147.0 327.1L148.0 326.8L149.0 326.8L150.0 326.9L151.0 326.8L152.0 327.0L153.0 327.3L154.0 327.0L155.0 327.1L156.0 327.0L157.0 327.3L158.0 327.2L159.0 327.3L160.0 327.5L161.0 327.2L162.0 327.4L163.0 327.3L164.0 327.6L165.0 327.7L166.0 327.4L167.0 327.7L168.0 327.4L169.0 327.4L170.0 327.6L171.0 327.6L172.0 327.6L173.0 327.7L174.0 327.7L175.0 327.7L176.0 327.9L177.0 327.8L178.0 328.0L179.0 328.1L180.0 328.0L181.0 327.9L182.0 328.0L183.0 328.0L184.0 328.1L185.0 328.3L186.0 328.3L187.0 328.3L188.0 328.2L189.0 328.4L190.0 328.6L191.0 328.5L192.0 328.5L193.0 328.6L194.0 328.6L195.0 328.9L196.0 328.6L197.0 328.7L198.0 329.0L199.0 328.7L200.0 329.1L201.0 329.0L202.0 329.0L203.0 329.3L204.0 329.3L205.0 329.1L206.0 329.2L207.0 329.1L208.0 329.3L209.0 329.5L210.0 329.4L211.0 329.6L212.0 329.4L213.0 329.5L214.0 329.7L215.0 329.7L216.0 329.8L217.0 330.0L218.0 330.0L219.0 329.9L220.0 330.0L221.0 330.0L222.0 330.4L223.0 330.6L224.0 330.6L225.0 330.5L226.0 330.7L227.0 330.7L228.0 330.6L229.0 330.7L230.0 331.0L231.0 331.0L232.0 331.2L233.0 331.2L234.0 331.2L235.0 331.3L236.0 331.5L237.0 331.6L238.0 331.7L239.0 331.8L240.0 332.0L241.0 331.8L242.0 332.3L243.0 332.1L244.0 332.3L245.0 332.3L246.0 332.3L247.0 332.5L248.0 332.6L249.0 332.9L250.0 332.9L251.0 333.2L252.0 333.3L253.0 333.6L254.0 333.5L255.0 333.6L256.0 333.9L257.0 334.1L258.0 334.3L259.0 334.5L260.0 334.6L261.0 334.4L262.0 334.8L263.0 335.0L264.0 335.3L265.0 335.3L266.0 335.4L267.0 335.5L268.0 335.7L269.0 335.9L270.0 336.2L271.0 336.3L272.0 336.8L273.0 336.7L274.0 337.2L275.0 337.3L276.0 337.5L277.0 337.7L278.0 338.1L279.0 338.5L280.0 338.6L281.0 338.9L282.0 339.1L283.0 339.4L284.0 339.9L285.0 339.9L286.0 340.5L287.0 340.9L288.0 341.1L289.0 341.4L290.0 341.7L291.0 342.3L292.0 342.7L293.0 342.9L294.0 343.4L295.0 344.0L296.0 344.2L297.0 345.0L298.0 345.4L299.0 345.8L300.0 346.6L301.0 347.0L302.0 347.7L303.0 348.2L304.0 348.7L305.0 349.5L306.0 350.1L307.0 351.1L308.0 352.0L309.0 352.5L310.0 353.4L311.0 354.4L312.0 355.4L313.0 356.3L314.0 357.5L315.0 358.7L316.0 359.6L317.0 360.8L318.0 362.3L319.0 363.7L320.0 365.2L321.0 366.7L322.0 368.5L323.0 370.3L324.0 372.1L325.0 373.8L326.0 376.1L327.0 378.2L328.0 380.6L329.0 383.0L330.0 385.3L331.0 388.4L332.0 391.2L333.0 394.1L334.0 397.2L335.0 400.3L336.0 403.7L337.0 407.0L338.0 410.5L339.0 414.1L340.0 417.7L341.0 421.4L342.0 424.8L343.0 428.2L344.0 432.0L345.0 435.3L346.0 438.7L347.0 441.8L348.0 444.6L349.0 447.6L350.0 450.8L351.0 453.3L352.0 455.8L353.0 458.4L354.0 460.4L355.0 462.8L356.0 464.6L357.0 466.5L358.0 468.6L359.0 470.3L360.0 471.6L361.0 473.4L362.0 475.0L363.0 476.3L364.0 477.5L365.0 478.8L366.0 480.0L367.0 481.0L368.0 482.2L369.0 482.9L370.0 483.8L371.0 484.8L372.0 485.8L373.0 486.3L374.0 487.2L375.0 488.0L376.0 488.9L377.0 489.4L378.0 490.2L379.0 490.5L380.0 491.2L381.0 491.6L382.0 492.2L383.0 493.0L384.0 493.3L385.0 493.8L386.0 494.3L387.0 494.5L388.0 495.3L389.0 495.6L390.0 496.1L391.0 496.2L392.0 496.8L393.0 497.2L394.0 497.5L395.0 497.7L396.0 498.2L397.0 498.5L398.0 498.8L399.0 499.1L400.0 499.1L401.0 499.6L402.0 499.9L403.0 499.9L404.0 500.4L405.0 500.4L406.0 500.9L407.0 501.0L408.0 501.0L409.0 501.4L410.0 501.8L411.0 501.8L412.0 502.1L413.0 502.2L414.0 502.3L415.0 502.6L416.0 502.8L417.0 503.1L418.0 503.1L419.0 503.1L420.0 503.6L421.0 503.7L422.0 503.6L423.0 503.8L424.0 504.2L425.0 504.2L426.0 504.3L427.0 504.6L428.0 504.8L429.0 504.9L430.0 504.7L431.0 505.0L432.0 505.4L433.0 505.4L434.0 505.5L435.0 505.6L436.0 505.7L437.0 505.6L438.0 506.0L439.0 505.9L440.0 506.1L441.0 506.1L442.0 506.1L443.0 506.3L444.0 506.5L445.0 506.7L446.0 506.6L447.0 506.7L448.0 507.0L449.0 507.0L450.0 507.1L451.0 507.2L452.0 507.1L453.0 507.5L454.0 507.3L455.0 507.3L456.0 507.7L457.0 507.6L458.0 507.8L459.0 507.8L460.0 507.7L461.0 507.9L462.0 507.9L463.0 508.0L464.0 508.1L465.0 508.0L466.0 508.1L467.0 508.4L468.0 508.4L469.0 508.3L470.0 508.6L471.0 508.4L472.0 508.8L473.0 508.9L474.0 508.8L475.0 508.8L476.0 509.0L477.0 509.0L478.0 508.8L479.0 509.0L480.0 509.2L481.0 509.2L482.0 509.3L483.0 509.1L484.0 509.4L485.0 509.4L486.0 509.3L487.0 509.5L488.0 509.4L489.0 509.4L490.0 509.6L491.0 509.7L492.0 509.8L493.0 509.8L494.0 509.9L495.0 509.9L496.0 510.0L497.0 509.8L498.0 509.8L499.0 509.9L500.0 509.9L501.0 510.0L502.0 510.1L503.0 509.9L504.0 510.2L505.0 510.2L506.0 510.2L507.0 510.2L508.0 510.5L509.0 510.5L510.0 510.5L511.0 510.5L512.0 510.3L513.0 510.4L514.0 510.6L515.0 510.7L516.0 510.5L517.0 510.7L518.0 510.7L519.0 510.8L520.0 510.6L521.0 510.9L522.0 510.8L523.0 511.0L524.0 510.7L525.0 511.0L526.0 511.1L527.0 511.1L528.0 510.9L529.0 511.0L530.0 511.2L531.0 511.1L532.0 511.1L533.0 511.1L534.0 511.1L535.0 511.0L536.0 511.1L537.0 511.4L538.0 511.4L539.0 511.1L540.0 511.4L541.0 511.5L542.0 511.2L543.0 511.3L544.0 511.4L545.0 511.3L546.0 511.5L547.0 511.6L548.0 511.4L549.0 511.6L550.0 511.7L551.0 511.4L552.0 511.6L553.0 511.4L554.0 511.7L555.0 511.5L556.0 511.6L557.0 511.8L558.0 511.8L559.0 511.7L560.0 511.6L561.0 511.9L562.0 511.8L563.0 511.7L564.0 512.0L565.0 511.9L566.0 511.9" stroke="#8e8e8e" stroke-dashoffset="0.0"/><path d="M25.0 324.9L26.0 325.0L27.0 324.8L28.0 324.9L29.0 325.0L30.0 325.0L31.0 324.9L32.0 324.8L33.0 324.9L34.0 325.1L35.0 324.8L36.0 325.1L37.0 325.0L38.0 325.0L39.0 325.0L40.0 325.3L41.0 325.3L42.0 325.1L43.0 325.2L44.0 325.1L45.0 325.3L46.0 325.3L47.0 325.1L48.0 325.2L49.0 325.1L50.0 325.3L51.0 325.1L52.0 325.3L53.0 325.4L54.0 325.1L55.0 325.3L56.0 325.1L57.0 325.1L58.0 325.1L59.0 325.3L60.0 325.4L61.0 325.1L62.0 325.5L63.0 325.3L64.0 325.2L65.0 325.4L66.0 325.5L67.0 325.4L68.0 325.4L69.0 325.5L70.0 325.6L71.0 325.3L72.0 325.5L73.0 325.6L74.0 325.6L75.0 325.3L76.0 325.7L77.0 325.6L78.0 325.7L79.0 325.5L80.0 325.7L81.0 325.7L82.0 325.5L83.0 325.6L84.0 325.4L85.0 325.7L86.0 325.7L87.0 325.6L88.0 325.7L89.0 325.8L90.0 325.6L91.0 325.7L92.0 325.6L93.0 325.9L94.0 325.6L95.0 326.0L96.0 325.8L97.0 326.0L98.0 325.7L99.0 325.8L100.0 325.8L101.0 326.0L102.0 325.7L103.0 325.7L104.0 326.1L105.0 326.1L106.0 326.1L107.0 326.0L108.0 325.9L109.0 325.9L110.0 326.2L111.0 325.9L112.0 326.0L113.0 326.2L114.0 326.2L115.0 326.0L116.0 326.0L117.0 326.4L118.0 326.1L119.0 326.3L120.0 326.4L121.0 326.1L122.0 326.1L123.0 326.3L124.0 326.2L125.0 326.5L126.0 326.3L127.0 326.5L128.0 326.5L129.0 326.3L130.0 326.3L131.0 326.5L132.0 326.5L133.0 326.7L134.0 326.4L135.0 326.5L136.0 326.5L137.0 326.7L138.0 326.7L139.0 326.7L140.0 326.5L141.0 326.7L142.0 326.7L143.0 326.9L144.0 326.7L145.0 326.7L146.0 327.0L147.0 326.7L148.0 327.0L149.0 327.0L150.0 327.0L151.0 326.9L152.0 326.9L153.0 326.9L154.0 327.1L155.0 326.9L156.0 327.3L157.0 327.3L158.0 327.1L159.0 327.3L160.0 327.4L161.0 327.4L162.0 327.5L163.0 327.1L164.0 327.5L165.0 327.5L166.0 327.6L167.0 327.5L168.0 327.4L169.0 327.6L170.0 327.6L171.0 327.5L172.0 327.5L173.0 327.8L174.0 327.8L175.0 327.6L176.0 327.7L177.0 327.7L178.0 328.0L179.0 328.0L180.0 327.8L181.0 327.9L182.0 328.2L183.0 328.1L184.0 328.1L185.0 328.1L186.0 328.1L187.0 328.0L188.0 328.3L189.0 328.2L190.0 328.5L191.0 328.4L192.0 328.4L193.0 328.7L194.0 328.6L195.0 328.7L196.0 328.7L197.0 328.8L198.0 328.9L199.0 328.7L200.0 328.8L201.0 328.8L202.0 329.1L203.0 329.0L204.0 329.0L205.0 329.2L206.0 329.0L207.0 329.0L208.0 329.4L209.0 329.2L210.0 329.4L211.0 329.4L212.0 329.5L213.0 329.5L214.0 329.7L215.0 329.5L216.0 329.7L217.0 330.0L218.0 330.0L219.0 330.0L220.0 329.9L221.0 329.9L222.0 330.0L223.0 330.4L224.0 330.5L225.0 330.4L226.0 330.6L227.0 330.5L228.0 330.8L229.0 330.7L230.0 331.0L231.0 330.7L232.0 331.1L233.0 331.0L234.0 331.3L235.0 331.1L236.0 331.2L237.0 331.5L238.0 331.5L239.0 331.5L240.0 331.6L241.0 331.8L242.0 332.0L243.0 332.1L244.0 332.2L245.0 332.1L246.0 332.4L247.0 332.3L248.0 332.4L249.0 332.5L250.0 332.7L251.0 333.1L252.0 333.3L253.0 333.2L254.0 333.3L255.0 333.4L256.0 333.7L257.0 333.8L258.0 333.9L259.0 334.1L260.0 334.2L261.0 334.6L262.0 334.4L263.0 334.8L264.0 334.7L265.0 335.2L266.0 335.3L267.0 335.6L268.0 335.5L269.0 335.9L270.0 335.9L271.0 336.2L272.0 336.5L273.0 336.6L274.0 337.0L275.0 336.9L276.0 337.2L277.0 337.4L278.0 337.9L279.0 338.0L280.0 338.3L281.0 338.5L282.0 338.7L283.0 338.9L284.0 339.3L285.0 339.6L286.0 340.0L287.0 340.4L288.0 340.6L289.0 340.9L290.0 341.2L291.0 341.9L292.0 342.3L293.0 342.4L294.0 342.8L295.0 343.2L296.0 343.8L297.0 344.3L298.0 344.9L299.0 345.1L300.0 345.7L301.0 346.5L302.0 346.8L303.0 347.7L304.0 348.3L305.0 348.9L306.0 349.3L307.0 350.2L308.0 351.0L309.0 351.7L310.0 352.4L311.0 353.4L312.0 354.4L313.0 355.3L314.0 356.1L315.0 357.1L316.0 358.3L317.0 359.7L318.0 360.8L319.0 362.3L320.0 363.4L321.0 365.1L322.0 366.4L323.0 368.1L324.0 369.7L325.0 371.9L326.0 373.9L327.0 375.7L328.0 377.9L329.0 380.2L330.0 382.7L331.0 385.3L332.0 387.9L333.0 391.0L334.0 393.9L335.0 396.9L336.0 400.4L337.0 403.6L338.0 407.0L339.0 410.7L340.0 414.0L341.0 417.8L342.0 421.2L343.0 425.1L344.0 428.3L345.0 432.1L346.0 435.5L347.0 438.6L348.0 441.9L349.0 445.0L350.0 448.0L351.0 450.6L352.0 453.5L353.0 455.9L354.0 458.2L355.0 460.7L356.0 463.0L357.0 464.9L358.0 466.8L359.0 468.6L360.0 470.5L361.0 472.0L362.0 473.6L363.0 475.1L364.0 476.1L365.0 477.7L366.0 479.0L367.0 480.0L368.0 481.0L369.0 482.2L370.0 483.3L371.0 484.0L372.0 484.9L373.0 486.0L374.0 486.7L375.0 487.3L376.0 488.1L377.0 488.6L378.0 489.3L379.0 490.3L380.0 490.8L381.0 491.4L382.0 492.1L383.0 492.4L384.0 493.1L385.0 493.5L386.0 493.7L387.0 494.4L388.0 494.9L389.0 495.3L390.0 495.6L391.0 496.2L392.0 496.4L393.0 496.7L394.0 497.2L395.0 497.4L396.0 497.8L397.0 498.2L398.0 498.3L399.0 498.6L400.0 498.9L401.0 499.3L402.0 499.6L403.0 499.7L404.0 500.3L405.0 500.2L406.0 500.5L407.0 500.9L408.0 501.0L409.0 501.2L410.0 501.5L411.0 501.5L412.0 501.8L413.0 502.1L414.0 502.5L415.0 502.5L416.0 502.8L417.0 502.9L418.0 502.9L419.0 503.3L420.0 503.5L421.0 503.7L422.0 503.7L423.0 503.9L424.0 504.1L425.0 504.3L426.0 504.4L427.0 504.6L428.0 504.8L429.0 504.7L430.0 505.0L431.0 505.0L432.0 505.3L433.0 505.3L434.0 505.4L435.0 505.6L436.0 505.6L437.0 505.8L438.0 506.0L439.0 505.8L440.0 506.1L441.0 506.2L442.0 506.3L443.0 506.5L444.0 506.4L445.0 506.4L446.0 506.5L447.0 506.9L448.0 506.9L449.0 507.1L450.0 507.0L451.0 507.2L452.0 507.1L453.0 507.3L454.0 507.4L455.0 507.4L456.0 507.3L457.0 507.4L458.0 507.7L459.0 507.6L460.0 507.7L461.0 508.0L462.0 508.1L463.0 507.8L464.0 508.1L465.0 508.1L466.0 508.1L467.0 508.2L468.0 508.2L469.0 508.5L470.0 508.6L471.0 508.5L472.0 508.7L473.0 508.6L474.0 508.5L475.0 508.9L476.0 508.8L477.0 508.8L478.0 508.9L479.0 509.2L480.0 508.9L481.0 508.9L482.0 509.2L483.0 509.3L484.0 509.1L485.0 509.3L486.0 509.5L487.0 509.4L488.0 509.3L489.0 509.4L490.0 509.7L491.0 509.6L492.0 509.6L493.0 509.6L494.0 509.9L495.0 509.8L496.0 509.9L497.0 509.8L498.0 509.9L499.0 509.7L500.0 510.0L501.0 510.0L502.0 510.0L503.0 510.0L504.0 510.2L505.0 510.3L506.0 510.4L507.0 510.3L508.0 510.5L509.0 510.3L510.0 510.2L511.0 510.4L512.0 510.4L513.0 510.5L514.0 510.5L515.0 510.7L516.0 510.8L517.0 510.7L518.0 510.6L519.0 510.6L520.0 510.6L521.0 510.6L522.0 510.8L523.0 510.9L524.0 510.8L525.0 510.9L526.0 510.8L527.0 510.9L528.0 511.1L529.0 510.9L530.0 510.8L531.0 511.1L532.0 511.1L533.0 510.9L534.0 511.1L535.0 511.3L536.0 511.1L537.0 511.1L538.0 511.3L539.0 511.3L540.0 511.4L541.0 511.2L542.0 511.3L543.0 511.2L544.0 511.6L545.0 511.4L546.0 511.5L547.0 511.5L548.0 511.3L549.0 511.7L550.0 511.4L551.0 511.4L552.0 511.7L553.0 511.5L554.0 511.4L555.0 511.5L556.0 511.7L557.0 511.8L558.0 511.7L559.0 511.7L560.0 511.7L561.0 511.9L562.0 511.6L563.0 511.6L564.0 512.0L565.0 512.0L566.0 512.0" stroke="#ff6a1a" stroke-dashoffset="0.0"/><path d="M25.0 325.2L26.0 325.1L27.0 324.9L28.0 324.8L29.0 325.0L30.0 324.8L31.0 325.0L32.0 324.9L33.0 325.2L34.0 324.9L35.0 325.2L36.0 325.2L37.0 324.9L38.0 325.1L39.0 324.9L40.0 325.0L41.0 325.0L42.0 325.1L43.0 325.0L44.0 325.1L45.0 325.3L46.0 325.2L47.0 325.4L48.0 325.3L49.0 325.4L50.0 325.1L51.0 325.3L52.0 325.4L53.0 325.4L54.0 325.4L55.0 325.2L56.0 325.5L57.0 325.3L58.0 325.4L59.0 325.1L60.0 325.4L61.0 325.4L62.0 325.5L63.0 325.4L64.0 325.3L65.0 325.4L66.0 325.4L67.0 325.3L68.0 325.4L69.0 325.6L70.0 325.3L71.0 325.6L72.0 325.3L73.0 325.4L74.0 325.3L75.0 325.5L76.0 325.4L77.0 325.3L78.0 325.7L79.0 325.5L80.0 325.5L81.0 325.5L82.0 325.5L83.0 325.6L84.0 325.6L85.0 325.5L86.0 325.7L87.0 325.5L88.0 325.8L89.0 325.6L90.0 325.8L91.0 325.8L92.0 325.6L93.0 325.9L94.0 325.9L95.0 325.7L96.0 325.8L97.0 325.8L98.0 326.1L99.0 326.0L100.0 325.7L101.0 326.0L102.0 325.9L103.0 326.1L104.0 325.8L105.0 325.9L106.0 326.2L107.0 326.2L108.0 326.1L109.0 326.1L110.0 326.0L111.0 326.0L112.0 326.1L113.0 326.1L114.0 326.1L115.0 326.2L116.0 326.4L117.0 326.3L118.0 326.3L119.0 326.1L120.0 326.3L121.0 326.2L122.0 326.2L123.0 326.2L124.0 326.5L125.0 326.6L126.0 326.4L127.0 326.3L128.0 326.5L129.0 326.3L130.0 326.5L131.0 326.4L132.0 326.6L133.0 326.5L134.0 326.5L135.0 326.5L136.0 326.5L137.0 326.8L138.0 326.8L139.0 326.6L140.0 326.6L141.0 326.8L142.0 326.7L143.0 326.7L144.0 326.9L145.0 326.9L146.0 326.8L147.0 327.1L148.0 326.9L149.0 327.0L150.0 327.0L151.0 327.1L152.0 327.2L153.0 326.9L154.0 327.1L155.0 327.2L156.0 327.3L157.0 327.3L158.0 327.0L159.0 327.1L160.0 327.4L161.0 327.2L162.0 327.5L163.0 327.4L164.0 327.4L165.0 327.4L166.0 327.3L167.0 327.5L168.0 327.6L169.0 327.5L170.0 327.5L171.0 327.7L172.0 327.7L173.0 327.8L174.0 327.6L175.0 327.9L176.0 327.8L177.0 328.1L178.0 327.8L179.0 327.8L180.0 328.1L181.0 328.2L182.0 328.0L183.0 328.1L184.0 328.2L185.0 328.3L186.0 328.3L187.0 328.5L188.0 328.5L189.0 328.2L190.0 328.3L191.0 328.5L192.0 328.5L193.0 328.4L194.0 328.6L195.0 328.6L196.0 328.9L197.0 329.0L198.0 329.0L199.0 328.8L200.0 329.1L201.0 329.0L202.0 328.8L203.0 329.2L204.0 329.3L205.0 329.1L206.0 329.3L207.0 329.4L208.0 329.3L209.0 329.4L210.0 329.6L211.0 329.7L212.0 329.5L213.0 329.7L214.0 329.7L215.0 329.9L216.0 330.0L217.0 329.8L218.0 330.0L219.0 330.0L220.0 330.1L221.0 330.3L222.0 330.1L223.0 330.3L224.0 330.5L225.0 330.5L226.0 330.6L227.0 330.6L228.0 330.7L229.0 330.8L230.0 331.1L231.0 331.2L232.0 331.2L233.0 331.2L234.0 331.3L235.0 331.4L236.0 331.6L237.0 331.7L238.0 331.8L239.0 331.9L240.0 331.9L241.0 331.9L242.0 332.1L243.0 332.3L244.0 332.4L245.0 332.3L246.0 332.7L247.0 332.5L248.0 332.7L249.0 332.7L250.0 332.8L251.0 333.1L252.0 333.4L253.0 333.3L254.0 333.4L255.0 333.8L256.0 333.9L257.0 334.1L258.0 334.2L259.0 334.2L260.0 334.3L261.0 334.5L262.0 334.8L263.0 335.1L264.0 335.0L265.0 335.4L266.0 335.6L267.0 335.5L268.0 335.9L269.0 336.0L270.0 336.4L271.0 336.5L272.0 336.7L273.0 336.9L274.0 337.0L275.0 337.3L276.0 337.7L277.0 337.7L278.0 338.1L279.0 338.4L280.0 338.6L281.0 338.8L282.0 339.1L283.0 339.3L284.0 339.9L285.0 339.9L286.0 340.2L287.0 340.8L288.0 341.2L289.0 341.2L290.0 341.7L291.0 342.3L292.0 342.7L293.0 343.0L294.0 343.4L295.0 343.8L296.0 344.4L297.0 345.0L298.0 345.3L299.0 345.9L300.0 346.5L301.0 347.0L302.0 347.5L303.0 347.9L304.0 348.9L305.0 349.4L306.0 350.2L307.0 350.9L308.0 351.5L309.0 352.3L310.0 353.3L311.0 354.4L312.0 355.2L313.0 356.3L314.0 357.1L315.0 358.3L316.0 359.6L317.0 360.6L318.0 362.0L319.0 363.5L320.0 364.7L321.0 366.2L322.0 368.0L323.0 369.6L324.0 371.6L325.0 373.4L326.0 375.6L327.0 377.6L328.0 380.1L329.0 382.6L330.0 384.9L331.0 387.6L332.0 390.6L333.0 393.2L334.0 396.4L335.0 399.6L336.0 403.0L337.0 406.4L338.0 409.7L339.0 413.3L340.0 416.8L341.0 420.5L342.0 424.1L343.0 427.6L344.0 431.2L345.0 434.4L346.0 438.0L347.0 441.2L348.0 444.1L349.0 447.2L350.0 450.2L351.0 452.9L352.0 455.5L353.0 457.6L354.0 460.2L355.0 462.3L356.0 464.4L357.0 466.4L358.0 468.2L359.0 469.9L360.0 471.4L361.0 473.2L362.0 474.4L363.0 475.8L364.0 477.4L365.0 478.4L366.0 479.6L367.0 480.9L368.0 481.9L369.0 482.8L370.0 483.8L371.0 484.6L372.0 485.6L373.0 486.5L374.0 487.0L375.0 487.8L376.0 488.6L377.0 489.1L378.0 490.1L379.0 490.6L380.0 490.9L381.0 491.6L382.0 492.2L383.0 492.5L384.0 493.4L385.0 493.7L386.0 494.1L387.0 494.6L388.0 494.9L389.0 495.5L390.0 496.1L391.0 496.2L392.0 496.5L393.0 497.1L394.0 497.5L395.0 497.7L396.0 498.1L397.0 498.2L398.0 498.7L399.0 499.1L400.0 499.1L401.0 499.4L402.0 499.7L403.0 499.9L404.0 500.1L405.0 500.4L406.0 500.5L407.0 501.0L408.0 501.1L409.0 501.4L410.0 501.8L411.0 501.9L412.0 501.9L413.0 502.1L414.0 502.5L415.0 502.4L416.0 502.8L417.0 502.8L418.0 503.2L419.0 503.3L420.0 503.5L421.0 503.7L422.0 503.7L423.0 503.9L424.0 504.0L425.0 504.1L426.0 504.2L427.0 504.4L428.0 504.6L429.0 504.6L430.0 505.1L431.0 505.2L432.0 505.3L433.0 505.4L434.0 505.2L435.0 505.6L436.0 505.8L437.0 505.9L438.0 506.0L439.0 506.1L440.0 506.1L441.0 506.1L442.0 506.2L443.0 506.4L444.0 506.5L445.0 506.6L446.0 506.5L447.0 506.7L448.0 507.0L449.0 507.0L450.0 507.0L451.0 507.1L452.0 507.1L453.0 507.4L454.0 507.5L455.0 507.3L456.0 507.4L457.0 507.6L458.0 507.8L459.0 507.5L460.0 508.0L461.0 508.1L462.0 508.1L463.0 508.1L464.0 508.1L465.0 508.3L466.0 508.0L467.0 508.1L468.0 508.4L469.0 508.3L470.0 508.4L471.0 508.4L472.0 508.7L473.0 508.8L474.0 508.7L475.0 508.6L476.0 508.9L477.0 509.0L478.0 508.9L479.0 508.9L480.0 509.0L481.0 509.0L482.0 509.0L483.0 509.4L484.0 509.4L485.0 509.3L486.0 509.3L487.0 509.3L488.0 509.5L489.0 509.4L490.0 509.7L491.0 509.5L492.0 509.6L493.0 509.7L494.0 509.8L495.0 509.7L496.0 509.7L497.0 510.0L498.0 510.0L499.0 510.0L500.0 510.0L501.0 509.9L502.0 510.3L503.0 509.9L504.0 510.1L505.0 510.0L506.0 510.0L507.0 510.4L508.0 510.3L509.0 510.3L510.0 510.5L511.0 510.2L512.0 510.4L513.0 510.7L514.0 510.6L515.0 510.5L516.0 510.7L517.0 510.8L518.0 510.6L519.0 510.5L520.0 510.8L521.0 510.8L522.0 510.9L523.0 510.9L524.0 510.7L525.0 510.7L526.0 510.9L527.0 510.9L528.0 510.9L529.0 511.1L530.0 511.0L531.0 511.2L532.0 510.9L533.0 510.9L534.0 511.1L535.0 511.0L536.0 511.3L537.0 511.3L538.0 511.4L539.0 511.2L540.0 511.4L541.0 511.5L542.0 511.5L543.0 511.5L544.0 511.2L545.0 511.6L546.0 511.3L547.0 511.4L548.0 511.3L549.0 511.4L550.0 511.7L551.0 511.6L552.0 511.7L553.0 511.5L554.0 511.6L555.0 511.8L556.0 511.8L557.0 511.8L558.0 511.9L559.0 511.9L560.0 511.9L561.0 511.9L562.0 511.9L563.0 511.6L564.0 511.7L565.0 511.8L566.0 511.8" stroke="#dc1438" stroke-dashoffset="1.2"/><path d="M25.0 325.1L26.0 325.1L27.0 325.0L28.0 324.9L29.0 324.8L30.0 324.8L31.0 324.9L32.0 324.9L33.0 325.2L34.0 325.0L35.0 325.0L36.0 325.1L37.0 325.3L38.0 325.2L39.0 325.0L40.0 325.1L41.0 325.0L42.0 325.0L43.0 325.2L44.0 325.2L45.0 325.1L46.0 325.2L47.0 325.0L48.0 325.2L49.0 325.3L50.0 325.4L51.0 325.2L52.0 325.1L53.0 325.3L54.0 325.4L55.0 325.2L56.0 325.2L57.0 325.1L58.0 325.2L59.0 325.4L60.0 325.3L61.0 325.2L62.0 325.2L63.0 325.2L64.0 325.4L65.0 325.2L66.0 325.3L67.0 325.3L68.0 325.5L69.0 325.6L70.0 325.4L71.0 325.6L72.0 325.3L73.0 325.4L74.0 325.4L75.0 325.5L76.0 325.6L77.0 325.6L78.0 325.4L79.0 325.4L80.0 325.4L81.0 325.4L82.0 325.6L83.0 325.8L84.0 325.8L85.0 325.7L86.0 325.7L87.0 325.6L88.0 325.8L89.0 325.8L90.0 325.9L91.0 325.8L92.0 325.6L93.0 325.6L94.0 325.9L95.0 325.6L96.0 325.8L97.0 325.8L98.0 325.8L99.0 326.0L100.0 326.0L101.0 325.7L102.0 326.1L103.0 325.9L104.0 325.8L105.0 326.1L106.0 325.9L107.0 326.0L108.0 325.9L109.0 326.0L110.0 326.0L111.0 326.3L112.0 325.9L113.0 326.1L114.0 326.1L115.0 326.3L116.0 326.2L117.0 326.3L118.0 326.1L119.0 326.3L120.0 326.3L121.0 326.4L122.0 326.4L123.0 326.3L124.0 326.4L125.0 326.4L126.0 326.5L127.0 326.2L128.0 326.4L129.0 326.6L130.0 326.3L131.0 326.7L132.0 326.5L133.0 326.6L134.0 326.4L135.0 326.5L136.0 326.6L137.0 326.5L138.0 326.8L139.0 326.7L140.0 326.6L141.0 326.8L142.0 326.9L143.0 326.7L144.0 326.6L145.0 326.7L146.0 326.7L147.0 326.8L148.0 327.1L149.0 326.8L150.0 326.9L151.0 326.8L152.0 326.9L153.0 327.2L154.0 327.1L155.0 327.2L156.0 327.0L157.0 327.2L158.0 327.0L159.0 327.2L160.0 327.1L161.0 327.4L162.0 327.3L163.0 327.4L164.0 327.4L165.0 327.4L166.0 327.3L167.0 327.4L168.0 327.7L169.0 327.6L170.0 327.6L171.0 327.8L172.0 327.7L173.0 327.6L174.0 327.8L175.0 327.9L176.0 327.7L177.0 327.7L178.0 327.7L179.0 328.1L180.0 327.9L181.0 328.1L182.0 327.8L183.0 327.9L184.0 328.2L185.0 328.0L186.0 328.2L187.0 328.3L188.0 328.2L189.0 328.4L190.0 328.2L191.0 328.2L192.0 328.3L193.0 328.6L194.0 328.6L195.0 328.6L196.0 328.6L197.0 328.9L198.0 328.7L199.0 328.9L200.0 329.0L201.0 329.0L202.0 329.1L203.0 329.0L204.0 329.1L205.0 329.3L206.0 329.0L207.0 329.2L208.0 329.4L209.0 329.5L210.0 329.4L211.0 329.6L212.0 329.6L213.0 329.8L214.0 329.8L215.0 329.7L216.0 330.0L217.0 329.9L218.0 329.7L219.0 330.0L220.0 330.1L221.0 330.0L222.0 330.3L223.0 330.3L224.0 330.5L225.0 330.4L226.0 330.5L227.0 330.6L228.0 330.7L229.0 330.8L230.0 330.6L231.0 331.0L232.0 330.8L233.0 331.0L234.0 331.0L235.0 331.3L236.0 331.1L237.0 331.6L238.0 331.4L239.0 331.5L240.0 331.8L241.0 332.0L242.0 332.0L243.0 332.0L244.0 332.1L245.0 332.3L246.0 332.2L247.0 332.4L248.0 332.6L249.0 332.5L250.0 332.9L251.0 333.0L252.0 333.2L253.0 333.2L254.0 333.4L255.0 333.4L256.0 333.6L257.0 333.7L258.0 333.8L259.0 334.1L260.0 334.1L261.0 334.5L262.0 334.5L263.0 334.5L264.0 334.8L265.0 334.9L266.0 335.3L267.0 335.3L268.0 335.4L269.0 335.7L270.0 336.0L271.0 336.1L272.0 336.1L273.0 336.5L274.0 336.7L275.0 337.0L276.0 337.1L277.0 337.3L278.0 337.7L279.0 338.0L280.0 338.4L281.0 338.4L282.0 338.5L283.0 339.0L284.0 339.1L285.0 339.6L286.0 339.9L287.0 340.1L288.0 340.4L289.0 340.9L290.0 341.0L291.0 341.5L292.0 341.9L293.0 342.5L294.0 342.8L295.0 343.0L296.0 343.6L297.0 344.1L298.0 344.5L299.0 344.9L300.0 345.5L301.0 346.3L302.0 346.6L303.0 347.3L304.0 347.7L305.0 348.4L306.0 349.2L307.0 349.8L308.0 350.7L309.0 351.2L310.0 352.2L311.0 353.1L312.0 353.6L313.0 354.6L314.0 355.5L315.0 356.7L316.0 357.9L317.0 358.9L318.0 360.1L319.0 361.2L320.0 362.6L321.0 363.9L322.0 365.7L323.0 367.0L324.0 368.9L325.0 370.4L326.0 372.5L327.0 374.6L328.0 376.6L329.0 379.0L330.0 381.0L331.0 383.8L332.0 386.5L333.0 389.2L334.0 391.9L335.0 394.9L336.0 398.3L337.0 401.4L338.0 404.8L339.0 407.9L340.0 411.5L341.0 415.1L342.0 418.7L343.0 422.4L344.0 425.8L345.0 429.5L346.0 433.1L347.0 436.3L348.0 439.4L349.0 442.8L350.0 445.9L351.0 448.6L352.0 451.6L353.0 454.2L354.0 456.6L355.0 458.9L356.0 461.2L357.0 463.4L358.0 465.2L359.0 467.4L360.0 469.1L361.0 470.8L362.0 472.5L363.0 473.7L364.0 475.2L365.0 476.5L366.0 477.9L367.0 479.3L368.0 480.0L369.0 481.1L370.0 482.2L371.0 483.3L372.0 484.3L373.0 485.3L374.0 486.0L375.0 486.7L376.0 487.5L377.0 488.2L378.0 488.7L379.0 489.4L380.0 490.2L381.0 490.9L382.0 491.5L383.0 492.0L384.0 492.3L385.0 492.9L386.0 493.3L387.0 493.9L388.0 494.5L389.0 494.9L390.0 495.3L391.0 495.5L392.0 496.0L393.0 496.5L394.0 496.7L395.0 497.2L396.0 497.5L397.0 497.8L398.0 498.1L399.0 498.5L400.0 498.9L401.0 499.2L402.0 499.3L403.0 499.8L404.0 499.9L405.0 500.2L406.0 500.4L407.0 500.8L408.0 500.9L409.0 501.0L410.0 501.4L411.0 501.5L412.0 501.7L413.0 502.1L414.0 502.2L415.0 502.1L416.0 502.5L417.0 502.7L418.0 502.8L419.0 503.2L420.0 503.0L421.0 503.4L422.0 503.7L423.0 503.7L424.0 503.8L425.0 504.2L426.0 504.2L427.0 504.4L428.0 504.6L429.0 504.5L430.0 504.8L431.0 504.7L432.0 504.8L433.0 505.2L434.0 505.4L435.0 505.5L436.0 505.3L437.0 505.6L438.0 505.5L439.0 505.6L440.0 506.0L441.0 505.8L442.0 505.9L443.0 506.3L444.0 506.2L445.0 506.4L446.0 506.5L447.0 506.5L448.0 506.7L449.0 507.0L450.0 507.0L451.0 506.8L452.0 507.0L453.0 507.1L454.0 507.3L455.0 507.5L456.0 507.6L457.0 507.3L458.0 507.4L459.0 507.8L460.0 507.8L461.0 507.9L462.0 507.8L463.0 507.7L464.0 508.1L465.0 507.9L466.0 508.0L467.0 508.1L468.0 508.1L469.0 508.3L470.0 508.5L471.0 508.4L472.0 508.6L473.0 508.5L474.0 508.6L475.0 508.7L476.0 508.8L477.0 509.0L478.0 508.8L479.0 508.8L480.0 509.1L481.0 509.2L482.0 509.3L483.0 509.0L484.0 509.2L485.0 509.1L486.0 509.2L487.0 509.2L488.0 509.3L489.0 509.3L490.0 509.4L491.0 509.7L492.0 509.6L493.0 509.7L494.0 509.6L495.0 509.6L496.0 509.9L497.0 510.0L498.0 509.8L499.0 509.7L500.0 509.9L501.0 510.0L502.0 510.1L503.0 510.2L504.0 510.3L505.0 510.0L506.0 510.3L507.0 510.2L508.0 510.3L509.0 510.3L510.0 510.4L511.0 510.3L512.0 510.5L513.0 510.4L514.0 510.4L515.0 510.4L516.0 510.4L517.0 510.5L518.0 510.8L519.0 510.6L520.0 510.6L521.0 510.7L522.0 510.8L523.0 510.7L524.0 510.7L525.0 510.9L526.0 510.9L527.0 511.0L528.0 511.0L529.0 510.9L530.0 510.9L531.0 511.0L532.0 510.9L533.0 511.1L534.0 511.2L535.0 511.2L536.0 511.0L537.0 511.2L538.0 511.1L539.0 511.1L540.0 511.4L541.0 511.2L542.0 511.1L543.0 511.3L544.0 511.4L545.0 511.5L546.0 511.2L547.0 511.5L548.0 511.3L549.0 511.3L550.0 511.3L551.0 511.6L552.0 511.6L553.0 511.7L554.0 511.5L555.0 511.7L556.0 511.6L557.0 511.6L558.0 511.7L559.0 511.9L560.0 511.6L561.0 511.6L562.0 511.6L563.0 511.8L564.0 511.6L565.0 511.8L566.0 511.9" stroke="#2a8744" stroke-dashoffset="-0.6"/></g><path d="M24.6 320.4 V515.4 H566.6 V320.4 Z" fill="none" stroke="#a2a2a2" stroke-width="1.1"/><path d="M567.4 320.4 V516.1999999999999 H25.0" fill="none" stroke="#d4d4d4" stroke-width="0.8"/></svg>
<div class="b" style="left:72.8px;top:71px;width:99.20px;height:14.30px;background:#fff"></div>
<svg style="left:0;top:0" width="80" height="86.2"><rect x="25.2" y="73.0" width="46.9" height="10.6" rx="0.8" fill="#fff" stroke="#f4141e" stroke-width="1.6"/></svg>
<span style="left:37.4px;top:74.20px;font-weight:bold;font-size:7.2px;color:#111">Ready</span>
<div class="sel" style="left:73.9px;top:72.4px;width:18.00px;height:11.30px;border-color:#4a98e8;background:#cde4f7;text-align:center;line-height:11.10px;">|Z|</div>
<div class="b" style="left:74px;top:85.7px;width:16.00px;height:0.80px;background:#666"></div>
<div class="btn" style="left:93.8px;top:72.6px;width:18.20px;height:11.10px;background:#e2e2e2;border-color:#d2d2d2;text-align:center;line-height:10.90px;">|Rs|</div>
<div class="btn" style="left:114px;top:72.6px;width:17.60px;height:11.10px;background:#e2e2e2;border-color:#d2d2d2;text-align:center;line-height:10.90px;">|Xs|</div>
<div class="btn" style="left:133.6px;top:72.6px;width:18.00px;height:11.10px;background:#e2e2e2;border-color:#d2d2d2;text-align:center;line-height:10.90px;">|Rp|</div>
<div class="btn" style="left:153.8px;top:72.6px;width:17.60px;height:11.10px;background:#e2e2e2;border-color:#d2d2d2;text-align:center;line-height:10.90px;">|Xp|</div>
<div class="b" style="left:171.8px;top:72px;width:112.60px;height:12.60px;background:#fff;overflow:hidden;border-bottom:0.8px solid #c8c8c8"><span style="left:2.1px;top:2.2px;letter-spacing:0.1px">501 steps 1 MHz - 2 MHz | 2021-10-10 13:46:11.554</span></div>
<div class="sel" style="left:284.6px;top:73px;width:20.10px;height:10.70px;border-color:#4a98e8;background:#cde4f7;text-align:center;line-height:10.50px;">Auto</div>
<div class="b" style="left:304.7px;top:72px;width:19.30px;height:12.40px;background:#f0f0f0"></div>
<span style="left:307.3px;top:74.20px;">Top:</span>
<div class="combo" style="left:323.8px;top:72.4px;width:56.00px;height:11.90px;background:#fff;border-color:#9c9c9c;line-height:9.90px"><i style="left:2.4px;top:0.6px">300 k&#937;</i><svg class="chev" width="5" height="3.2" viewBox="0 0 5 3.2"><path d="M0.3 0.4 L2.5 2.7 L4.7 0.4" fill="none" stroke="#444" stroke-width="0.7"/></svg></div>
<div class="b" style="left:379.8px;top:72px;width:28.60px;height:12.40px;background:#f0f0f0"></div>
<span style="left:382.8px;top:74.20px;">Bottom:</span>
<div class="combo" style="left:408.2px;top:72.4px;width:59.20px;height:11.90px;background:#fff;border-color:#9c9c9c;line-height:9.90px"><i style="left:2.4px;top:0.6px">20 k&#937;</i><svg class="chev" width="5" height="3.2" viewBox="0 0 5 3.2"><path d="M0.3 0.4 L2.5 2.7 L4.7 0.4" fill="none" stroke="#444" stroke-width="0.7"/></svg></div>
<div class="combo" style="left:468.2px;top:72.4px;width:46.20px;height:11.90px;background:#e2e2e2;border-color:#d4d4d4;line-height:9.90px"><i style="left:0.7px;top:0.6px">Logarithmic</i><svg class="chev" width="5" height="3.2" viewBox="0 0 5 3.2"><path d="M0.3 0.4 L2.5 2.7 L4.7 0.4" fill="none" stroke="#444" stroke-width="0.7"/></svg></div>
<svg style="left:518.6px;top:74.2px" width="8" height="7" viewBox="0 0 8 7"><path d="M0.6 0.3 L4.9 2.4 L3 2.9 L4.1 4.6 L3.3 5 L2.2 3.3 L1 4.5Z" fill="#3291ff"/><path d="M0 5.5 H7.6" stroke="#b3bbc7" stroke-width="0.8" stroke-dasharray="0.8 0.4"/></svg>
<svg style="left:530.2px;top:74.2px" width="8" height="7" viewBox="0 0 8 7"><path d="M0.9 0.4 V4.2 M0.9 2.2 H7" stroke="#3d96ff" stroke-width="1.1" fill="none"/><path d="M0 5.5 H7.6" stroke="#b3bbc7" stroke-width="0.8" stroke-dasharray="0.8 0.4"/></svg>
<svg style="left:541.5px;top:73.2px" width="10" height="10" viewBox="0 0 10 10"><path d="M6.2 6.2 L9.3 9.4" stroke="#7a7a7a" stroke-width="1.3" stroke-linecap="round"/><circle cx="4" cy="3.9" r="3" fill="#6da6ea" stroke="#4d8ede" stroke-width="0.7"/><circle cx="3.6" cy="3.4" r="1.5" fill="#a4c8f4"/></svg>
<div class="btn" style="left:553.4px;top:72.60000000000001px;width:12px;height:11.6px;background:#dedede;border-color:#bdbdbd"></div>
<svg width="9.6" height="9.6" viewBox="0 0 10 10" style="position:absolute;left:554.6px;top:73.60000000000001px"><circle cx="5" cy="5" r="3.9" fill="#f1f3f5" stroke="#8a95a2" stroke-width="1.2" stroke-dasharray="1.4 0.7"/><circle cx="5" cy="5" r="3.1" fill="#f5f6f8" stroke="#98a2ad" stroke-width="0.8"/><path d="M3.9 3.6 L6.2 6.4 M3.9 5.6 A1.6 1.6 0 0 1 3.8 3.7" stroke="#44526a" stroke-width="0.9" fill="none"/><circle cx="6.5" cy="6.6" r="0.8" fill="#44526a"/></svg>
<div class="btn" style="left:567.4px;top:72.60000000000001px;width:11.6px;height:11.6px;background:#e6e6e6;border-color:#c6c6c6"></div>
<span style="left:570.8px;top:74.40px;font-weight:bold;font-size:7px;color:#111">Y</span>
<div class="b" style="left:72.8px;top:307px;width:38.80px;height:14.20px;background:#fff"></div>
<svg style="left:0;top:0" width="80" height="322.2"><rect x="25.2" y="309.0" width="46.9" height="10.6" rx="0.8" fill="#fff" stroke="#f4141e" stroke-width="1.6"/></svg>
<span style="left:37.4px;top:310.20px;font-weight:bold;font-size:7.2px;color:#111">Ready</span>
<div class="sel" style="left:73.9px;top:308.4px;width:18.00px;height:10.90px;border-color:#4a98e8;background:#cde4f7;text-align:center;line-height:10.70px;line-height:11.4px;font-size:7.2px;-webkit-text-stroke-width:0">&#952;</div>
<div class="b" style="left:73.8px;top:321.7px;width:16.40px;height:1.00px;background:repeating-linear-gradient(90deg,#8a8a8a 0 5.6px,#fff 5.6px 7.2px)"></div>
<div class="btn" style="left:93.5px;top:308.5px;width:17.30px;height:10.80px;background:#e2e2e2;border-color:#d2d2d2;text-align:center;line-height:10.60px;">&#8736;</div>
<div class="b" style="left:111.4px;top:308px;width:221.20px;height:13.00px;background:#fff;overflow:hidden;border-bottom:0.8px solid #c8c8c8"><span style="left:2.1px;top:1.7px;letter-spacing:0.1px">501 steps 1 MHz - 2 MHz | 2021-10-10 13:46:11.554</span></div>
<div class="sel" style="left:332.8px;top:308.4px;width:20.10px;height:10.90px;border-color:#4a98e8;background:#cde4f7;text-align:center;line-height:10.70px;">Auto</div>
<div class="b" style="left:352.9px;top:308px;width:19.30px;height:12.20px;background:#f0f0f0"></div>
<span style="left:355.5px;top:309.60px;">Top:</span>
<div class="combo" style="left:372.1px;top:308.4px;width:56.50px;height:11.60px;background:#fff;border-color:#9c9c9c;line-height:9.60px"><i style="left:2.4px;top:0.4px">90 &#176;</i><svg class="chev" width="5" height="3.2" viewBox="0 0 5 3.2"><path d="M0.3 0.4 L2.5 2.7 L4.7 0.4" fill="none" stroke="#444" stroke-width="0.7"/></svg></div>
<div class="b" style="left:428.6px;top:308px;width:28.60px;height:12.20px;background:#f0f0f0"></div>
<span style="left:431px;top:309.60px;">Bottom:</span>
<div class="combo" style="left:457px;top:308.4px;width:59.00px;height:11.60px;background:#fff;border-color:#9c9c9c;line-height:9.60px"><i style="left:2.4px;top:0.4px">-90 &#176;</i><svg class="chev" width="5" height="3.2" viewBox="0 0 5 3.2"><path d="M0.3 0.4 L2.5 2.7 L4.7 0.4" fill="none" stroke="#444" stroke-width="0.7"/></svg></div>
<svg style="left:518.6px;top:310.2px" width="8" height="7" viewBox="0 0 8 7"><path d="M0.6 0.3 L4.9 2.4 L3 2.9 L4.1 4.6 L3.3 5 L2.2 3.3 L1 4.5Z" fill="#3291ff"/><path d="M0 5.5 H7.6" stroke="#b3bbc7" stroke-width="0.8" stroke-dasharray="0.8 0.4"/></svg>
<svg style="left:530.2px;top:310.2px" width="8" height="7" viewBox="0 0 8 7"><path d="M0.9 0.4 V4.2 M0.9 2.2 H7" stroke="#3d96ff" stroke-width="1.1" fill="none"/><path d="M0 5.5 H7.6" stroke="#b3bbc7" stroke-width="0.8" stroke-dasharray="0.8 0.4"/></svg>
<svg style="left:541.5px;top:309.2px" width="10" height="10" viewBox="0 0 10 10"><path d="M6.2 6.2 L9.3 9.4" stroke="#7a7a7a" stroke-width="1.3" stroke-linecap="round"/><circle cx="4" cy="3.9" r="3" fill="#6da6ea" stroke="#4d8ede" stroke-width="0.7"/><circle cx="3.6" cy="3.4" r="1.5" fill="#a4c8f4"/></svg>
<div class="btn" style="left:553.4px;top:308.59999999999997px;width:12px;height:11.6px;background:#dedede;border-color:#bdbdbd"></div>
<svg width="9.6" height="9.6" viewBox="0 0 10 10" style="position:absolute;left:554.6px;top:309.59999999999997px"><circle cx="5" cy="5" r="3.9" fill="#f1f3f5" stroke="#8a95a2" stroke-width="1.2" stroke-dasharray="1.4 0.7"/><circle cx="5" cy="5" r="3.1" fill="#f5f6f8" stroke="#98a2ad" stroke-width="0.8"/><path d="M3.9 3.6 L6.2 6.4 M3.9 5.6 A1.6 1.6 0 0 1 3.8 3.7" stroke="#44526a" stroke-width="0.9" fill="none"/><circle cx="6.5" cy="6.6" r="0.8" fill="#44526a"/></svg>
<div class="btn" style="left:567.4px;top:308.59999999999997px;width:11.6px;height:11.6px;background:#e6e6e6;border-color:#c6c6c6"></div>
<span style="left:570.8px;top:310.40px;font-weight:bold;font-size:7px;color:#111">Y</span>
<span style="left:11.2px;top:311.00px;">&#176;</span>
<svg style="left:581.2px;top:62.4px" width="7" height="5" viewBox="0 0 7 5"><path d="M0.2 1.5 H4 V0.2 L6.9 2.5 L4 4.8 V3.5 H0.2Z" fill="#52c455"/></svg>
<svg style="left:609.5px;top:61.5px" width="7" height="7" viewBox="0 0 7 7"><circle cx="3.5" cy="3.5" r="2.2" fill="none" stroke="#cfcfcf" stroke-width="1.5" stroke-dasharray="1.2 0.8"/></svg>
<div class="b" style="left:607px;top:70px;width:2.00px;height:458.00px;background:#f7f7f7"></div>
<svg style="left:611px;top:73.4px" width="5.4" height="3.2" viewBox="0 0 5.4 3.2"><path d="M0.3 2.9 L2.7 0.5 L5.1 2.9" fill="none" stroke="#9a9a9a" stroke-width="0.8"/></svg>
<svg style="left:611px;top:520.4px" width="5.4" height="3.2" viewBox="0 0 5.4 3.2"><path d="M0.3 0.3 L2.7 2.7 L5.1 0.3" fill="none" stroke="#9a9a9a" stroke-width="0.8"/></svg>
<svg style="left:0;top:0" width="619" height="95.4"><rect x="581.15" y="70.95" width="24.3" height="23.30" fill="#f0f0f0" stroke="#ffd21f" stroke-width="2.3"/><rect x="582.9" y="75.20" width="6.6" height="6.6" fill="#fff" stroke="#3c3c3c" stroke-width="0.75"/><path d="M584.0 78.40 l1.6 1.8 l3 -3.7" fill="none" stroke="#2a2a2a" stroke-width="0.7"/></svg>
<div class="btn" style="left:591.1px;top:73.00px;width:12px;height:11.6px;background:#dedede;border-color:#c6c6c6"></div>
<svg width="9.8" height="9.8" viewBox="0 0 10 10" style="position:absolute;left:592.3px;top:73.89999999999999px"><circle cx="5" cy="5" r="3.9" fill="#f1f3f5" stroke="#8a95a2" stroke-width="1.2" stroke-dasharray="1.4 0.7"/><circle cx="5" cy="5" r="3.1" fill="#f5f6f8" stroke="#98a2ad" stroke-width="0.8"/><path d="M3.9 3.6 L6.2 6.4 M3.9 5.6 A1.6 1.6 0 0 1 3.8 3.7" stroke="#44526a" stroke-width="0.9" fill="none"/><circle cx="6.5" cy="6.6" r="0.8" fill="#44526a"/></svg>
<span style="left:582.4px;top:85.70px;">Trace</span>
<div class="btn" style="left:580.3px;top:97.2px;width:25.6px;height:12.3px;background:#e1e1e1;border-color:#c0c0c0"></div>
<svg style="left:582.6px;top:99px" width="9" height="9" viewBox="0 0 9 9"><path d="M3.2 0.4 H5.8 V3.2 H8.6 V5.8 H5.8 V8.6 H3.2 V5.8 H0.4 V3.2 H3.2Z" fill="#4fc24a" stroke="#39a83a" stroke-width="0.5"/></svg>
<svg style="left:597.7px;top:102.2px" width="4.8" height="2.8" viewBox="0 0 4.8 2.8"><path d="M0 0 L4.8 0 L2.4 2.8Z" fill="#111"/></svg>
<svg style="left:0;top:0" width="619" height="137.2"><rect x="581.15" y="112.50" width="24.3" height="23.50" fill="#f0f0f0" stroke="#19b5f5" stroke-width="2.3"/><rect x="582.9" y="116.75" width="6.6" height="6.6" fill="#fff" stroke="#3c3c3c" stroke-width="0.75"/><path d="M584.0 119.95 l1.6 1.8 l3 -3.7" fill="none" stroke="#2a2a2a" stroke-width="0.7"/></svg>
<div class="btn" style="left:591.1px;top:114.55px;width:12px;height:11.6px;background:#dedede;border-color:#c6c6c6"></div>
<svg width="9.8" height="9.8" viewBox="0 0 10 10" style="position:absolute;left:592.3px;top:115.44999999999999px"><circle cx="5" cy="5" r="3.9" fill="#f1f3f5" stroke="#8a95a2" stroke-width="1.2" stroke-dasharray="1.4 0.7"/><circle cx="5" cy="5" r="3.1" fill="#f5f6f8" stroke="#98a2ad" stroke-width="0.8"/><path d="M3.9 3.6 L6.2 6.4 M3.9 5.6 A1.6 1.6 0 0 1 3.8 3.7" stroke="#44526a" stroke-width="0.9" fill="none"/><circle cx="6.5" cy="6.6" r="0.8" fill="#44526a"/></svg>
<span style="left:582.4px;top:127.25px;font-size:6.1px">No Coin</span>
<svg style="left:0;top:0" width="619" height="163.8"><rect x="581.15" y="139.17" width="24.3" height="23.50" fill="#f0f0f0" stroke="#f716f2" stroke-width="2.3"/><rect x="582.9" y="143.42" width="6.6" height="6.6" fill="#fff" stroke="#3c3c3c" stroke-width="0.75"/><path d="M584.0 146.62 l1.6 1.8 l3 -3.7" fill="none" stroke="#2a2a2a" stroke-width="0.7"/></svg>
<div class="btn" style="left:591.1px;top:141.22px;width:12px;height:11.6px;background:#dedede;border-color:#c6c6c6"></div>
<svg width="9.8" height="9.8" viewBox="0 0 10 10" style="position:absolute;left:592.3px;top:142.12px"><circle cx="5" cy="5" r="3.9" fill="#f1f3f5" stroke="#8a95a2" stroke-width="1.2" stroke-dasharray="1.4 0.7"/><circle cx="5" cy="5" r="3.1" fill="#f5f6f8" stroke="#98a2ad" stroke-width="0.8"/><path d="M3.9 3.6 L6.2 6.4 M3.9 5.6 A1.6 1.6 0 0 1 3.8 3.7" stroke="#44526a" stroke-width="0.9" fill="none"/><circle cx="6.5" cy="6.6" r="0.8" fill="#44526a"/></svg>
<span style="left:582.4px;top:153.92px;">1c</span>
<svg style="left:0;top:0" width="619" height="190.5"><rect x="581.15" y="165.84" width="24.3" height="23.50" fill="#f0f0f0" stroke="#b4f5c6" stroke-width="2.3"/><rect x="582.9" y="170.09" width="6.6" height="6.6" fill="#fff" stroke="#3c3c3c" stroke-width="0.75"/><path d="M584.0 173.29 l1.6 1.8 l3 -3.7" fill="none" stroke="#2a2a2a" stroke-width="0.7"/></svg>
<div class="btn" style="left:591.1px;top:167.89px;width:12px;height:11.6px;background:#dedede;border-color:#c6c6c6"></div>
<svg width="9.8" height="9.8" viewBox="0 0 10 10" style="position:absolute;left:592.3px;top:168.79px"><circle cx="5" cy="5" r="3.9" fill="#f1f3f5" stroke="#8a95a2" stroke-width="1.2" stroke-dasharray="1.4 0.7"/><circle cx="5" cy="5" r="3.1" fill="#f5f6f8" stroke="#98a2ad" stroke-width="0.8"/><path d="M3.9 3.6 L6.2 6.4 M3.9 5.6 A1.6 1.6 0 0 1 3.8 3.7" stroke="#44526a" stroke-width="0.9" fill="none"/><circle cx="6.5" cy="6.6" r="0.8" fill="#44526a"/></svg>
<span style="left:582.4px;top:180.59px;">2c</span>
<svg style="left:0;top:0" width="619" height="217.2"><rect x="581.15" y="192.51" width="24.3" height="23.50" fill="#f0f0f0" stroke="#fb4a12" stroke-width="2.3"/><rect x="582.9" y="196.76" width="6.6" height="6.6" fill="#fff" stroke="#3c3c3c" stroke-width="0.75"/><path d="M584.0 199.96 l1.6 1.8 l3 -3.7" fill="none" stroke="#2a2a2a" stroke-width="0.7"/></svg>
<div class="btn" style="left:591.1px;top:194.56px;width:12px;height:11.6px;background:#dedede;border-color:#c6c6c6"></div>
<svg width="9.8" height="9.8" viewBox="0 0 10 10" style="position:absolute;left:592.3px;top:195.46px"><circle cx="5" cy="5" r="3.9" fill="#f1f3f5" stroke="#8a95a2" stroke-width="1.2" stroke-dasharray="1.4 0.7"/><circle cx="5" cy="5" r="3.1" fill="#f5f6f8" stroke="#98a2ad" stroke-width="0.8"/><path d="M3.9 3.6 L6.2 6.4 M3.9 5.6 A1.6 1.6 0 0 1 3.8 3.7" stroke="#44526a" stroke-width="0.9" fill="none"/><circle cx="6.5" cy="6.6" r="0.8" fill="#44526a"/></svg>
<span style="left:582.4px;top:207.26px;">5c</span>
<svg style="left:0;top:0" width="619" height="243.8"><rect x="581.15" y="219.18" width="24.3" height="23.50" fill="#f0f0f0" stroke="#3a76bd" stroke-width="2.3"/><rect x="582.9" y="223.43" width="6.6" height="6.6" fill="#fff" stroke="#3c3c3c" stroke-width="0.75"/><path d="M584.0 226.63 l1.6 1.8 l3 -3.7" fill="none" stroke="#2a2a2a" stroke-width="0.7"/></svg>
<div class="btn" style="left:591.1px;top:221.23px;width:12px;height:11.6px;background:#dedede;border-color:#c6c6c6"></div>
<svg width="9.8" height="9.8" viewBox="0 0 10 10" style="position:absolute;left:592.3px;top:222.13px"><circle cx="5" cy="5" r="3.9" fill="#f1f3f5" stroke="#8a95a2" stroke-width="1.2" stroke-dasharray="1.4 0.7"/><circle cx="5" cy="5" r="3.1" fill="#f5f6f8" stroke="#98a2ad" stroke-width="0.8"/><path d="M3.9 3.6 L6.2 6.4 M3.9 5.6 A1.6 1.6 0 0 1 3.8 3.7" stroke="#44526a" stroke-width="0.9" fill="none"/><circle cx="6.5" cy="6.6" r="0.8" fill="#44526a"/></svg>
<span style="left:582.4px;top:233.93px;">10 c</span>
<svg style="left:0;top:0" width="619" height="270.5"><rect x="581.15" y="245.85" width="24.3" height="23.50" fill="#f0f0f0" stroke="#dc1438" stroke-width="2.3"/><rect x="582.9" y="250.10" width="6.6" height="6.6" fill="#fff" stroke="#3c3c3c" stroke-width="0.75"/><path d="M584.0 253.30 l1.6 1.8 l3 -3.7" fill="none" stroke="#2a2a2a" stroke-width="0.7"/></svg>
<div class="btn" style="left:591.1px;top:247.90px;width:12px;height:11.6px;background:#dedede;border-color:#c6c6c6"></div>
<svg width="9.8" height="9.8" viewBox="0 0 10 10" style="position:absolute;left:592.3px;top:248.79999999999998px"><circle cx="5" cy="5" r="3.9" fill="#f1f3f5" stroke="#8a95a2" stroke-width="1.2" stroke-dasharray="1.4 0.7"/><circle cx="5" cy="5" r="3.1" fill="#f5f6f8" stroke="#98a2ad" stroke-width="0.8"/><path d="M3.9 3.6 L6.2 6.4 M3.9 5.6 A1.6 1.6 0 0 1 3.8 3.7" stroke="#44526a" stroke-width="0.9" fill="none"/><circle cx="6.5" cy="6.6" r="0.8" fill="#44526a"/></svg>
<span style="left:582.4px;top:260.60px;">20c</span>
<svg style="left:0;top:0" width="619" height="297.2"><rect x="581.15" y="272.52" width="24.3" height="23.50" fill="#f0f0f0" stroke="#23883f" stroke-width="2.3"/><rect x="582.9" y="276.77" width="6.6" height="6.6" fill="#fff" stroke="#3c3c3c" stroke-width="0.75"/><path d="M584.0 279.97 l1.6 1.8 l3 -3.7" fill="none" stroke="#2a2a2a" stroke-width="0.7"/></svg>
<div class="btn" style="left:591.1px;top:274.57px;width:12px;height:11.6px;background:#dedede;border-color:#c6c6c6"></div>
<svg width="9.8" height="9.8" viewBox="0 0 10 10" style="position:absolute;left:592.3px;top:275.47px"><circle cx="5" cy="5" r="3.9" fill="#f1f3f5" stroke="#8a95a2" stroke-width="1.2" stroke-dasharray="1.4 0.7"/><circle cx="5" cy="5" r="3.1" fill="#f5f6f8" stroke="#98a2ad" stroke-width="0.8"/><path d="M3.9 3.6 L6.2 6.4 M3.9 5.6 A1.6 1.6 0 0 1 3.8 3.7" stroke="#44526a" stroke-width="0.9" fill="none"/><circle cx="6.5" cy="6.6" r="0.8" fill="#44526a"/></svg>
<span style="left:582.4px;top:287.27px;">50c</span>
<svg style="left:0;top:0" width="619" height="323.8"><rect x="581.15" y="299.19" width="24.3" height="23.50" fill="#f0f0f0" stroke="#cdcdcd" stroke-width="2.3"/><rect x="582.9" y="303.44" width="6.6" height="6.6" fill="#fff" stroke="#3c3c3c" stroke-width="0.75"/><path d="M584.0 306.64 l1.6 1.8 l3 -3.7" fill="none" stroke="#2a2a2a" stroke-width="0.7"/></svg>
<div class="btn" style="left:591.1px;top:301.24px;width:12px;height:11.6px;background:#dedede;border-color:#c6c6c6"></div>
<svg width="9.8" height="9.8" viewBox="0 0 10 10" style="position:absolute;left:592.3px;top:302.14000000000004px"><circle cx="5" cy="5" r="3.9" fill="#f1f3f5" stroke="#8a95a2" stroke-width="1.2" stroke-dasharray="1.4 0.7"/><circle cx="5" cy="5" r="3.1" fill="#f5f6f8" stroke="#98a2ad" stroke-width="0.8"/><path d="M3.9 3.6 L6.2 6.4 M3.9 5.6 A1.6 1.6 0 0 1 3.8 3.7" stroke="#44526a" stroke-width="0.9" fill="none"/><circle cx="6.5" cy="6.6" r="0.8" fill="#44526a"/></svg>
<span style="left:582.4px;top:313.94px;">1 EUR</span>
<span style="left:1.6px;top:86.40px;font-size:6.3px;-webkit-text-stroke-width:0.08px">300 k&#937;</span>
<span style="left:1.6px;top:112.50px;font-size:6.3px;-webkit-text-stroke-width:0.08px">200 k&#937;</span>
<span style="left:1.6px;top:162.20px;font-size:6.3px;-webkit-text-stroke-width:0.08px">100 k&#937;</span>
<span style="left:1.6px;top:170.40px;font-size:6.3px;-webkit-text-stroke-width:0.08px">90 k&#937;</span>
<span style="left:1.6px;top:177.90px;font-size:6.3px;-webkit-text-stroke-width:0.08px">80 k&#937;</span>
<span style="left:1.6px;top:188.00px;font-size:6.3px;-webkit-text-stroke-width:0.08px">70 k&#937;</span>
<span style="left:1.6px;top:199.30px;font-size:6.3px;-webkit-text-stroke-width:0.08px">60 k&#937;</span>
<span style="left:1.6px;top:211.90px;font-size:6.3px;-webkit-text-stroke-width:0.08px">50 k&#937;</span>
<span style="left:1.6px;top:229.30px;font-size:6.3px;-webkit-text-stroke-width:0.08px">40 k&#937;</span>
<span style="left:1.6px;top:249.50px;font-size:6.3px;-webkit-text-stroke-width:0.08px">30 k&#937;</span>
<span style="left:1.6px;top:272.90px;font-size:6.3px;-webkit-text-stroke-width:0.08px">20 k&#937;</span>
<span style="left:1.6px;top:319.20px;font-size:6.5px;-webkit-text-stroke-width:0.08px">90</span>
<span style="left:1.6px;top:350.60px;font-size:6.5px;-webkit-text-stroke-width:0.08px">60</span>
<span style="left:1.6px;top:382.00px;font-size:6.5px;-webkit-text-stroke-width:0.08px">30</span>
<span style="left:1.6px;top:413.40px;font-size:6.5px;-webkit-text-stroke-width:0.08px">0</span>
<span style="left:1.6px;top:444.80px;font-size:6.5px;-webkit-text-stroke-width:0.08px">-30</span>
<span style="left:1.6px;top:476.00px;font-size:6.5px;-webkit-text-stroke-width:0.08px">-60</span>
<span style="left:1.6px;top:507.40px;font-size:6.5px;-webkit-text-stroke-width:0.08px">-90</span>
<span style="left:553.8px;top:282.00px;font-size:6.2px">2 MHz</span>
<span style="left:553.8px;top:518.20px;font-size:6.2px">2 MHz</span>
<div class="btn" style="left:1.4px;top:282.6px;width:8.6px;height:8.6px;background:#e4e4e4;border-color:#dadada"></div>
<span style="left:2.6px;top:281.80px;font-weight:bold;font-size:7px;color:#111">X</span>
<div class="btn" style="left:10.2px;top:282.6px;width:7.2px;height:8.6px;background:#e4e4e4;border-color:#dadada"></div>
<svg style="left:11.8px;top:285.8px" width="4.2" height="2.4" viewBox="0 0 4.2 2.4"><path d="M0 0 L4.2 0 L2.1 2.4Z" fill="#111"/></svg>
<div class="btn" style="left:1.4px;top:518.6px;width:8.6px;height:8.6px;background:#e4e4e4;border-color:#dadada"></div>
<span style="left:2.6px;top:517.80px;font-weight:bold;font-size:7px;color:#111">X</span>
<div class="btn" style="left:10.2px;top:518.6px;width:7.2px;height:8.6px;background:#e4e4e4;border-color:#dadada"></div>
<svg style="left:11.8px;top:521.8000000000001px" width="4.2" height="2.4" viewBox="0 0 4.2 2.4"><path d="M0 0 L4.2 0 L2.1 2.4Z" fill="#111"/></svg>
<span style="left:213px;top:265.90px;font-size:6.6px;color:#ff2d5a;-webkit-text-stroke-width:0">Resistor too low !?</span>
<span style="left:213px;top:502.30px;font-size:6.6px;color:#ff2d5a;-webkit-text-stroke-width:0">Resistor too low !?</span>
<div class="b" style="left:533.4px;top:504.6px;width:32.00px;height:10.00px;background:#fff"></div>
<span style="left:534px;top:504.80px;font-weight:bold;font-size:7.1px;color:#111">RLB1112V4 2 cents</span>
<div class="lb" style="left:394.2px;top:185px;width:13.4px;height:8.8px;line-height:7px">1 c</div>
<div class="lb" style="left:428.4px;top:195.2px;width:11.2px;height:8.8px;line-height:7px">2c</div>
<div class="lb" style="left:448.4px;top:226.4px;width:26px;height:8.8px;line-height:7px">No coin</div>
<span style="left:421.2px;top:187.20px;font-weight:bold;font-size:7.6px;color:#111">x</span>
<span style="left:430.6px;top:186.60px;font-weight:bold;font-size:7.6px;color:#111">x</span>
<span style="left:440.2px;top:215.00px;font-weight:bold;font-size:7.6px;color:#111">x</span>
</body></html>
